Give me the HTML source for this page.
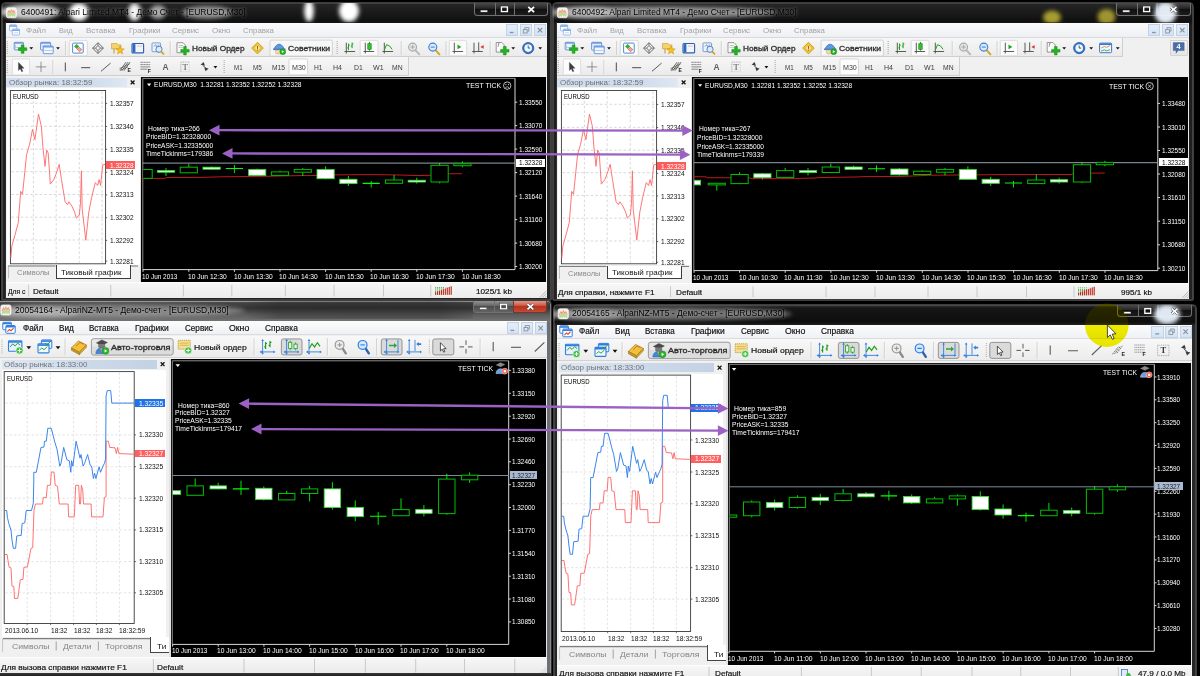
<!DOCTYPE html>
<html lang="ru"><head><meta charset="utf-8"><title>MetaTrader tick test</title>
<style>
html,body{margin:0;padding:0;background:#000;}
body{width:1200px;height:676px;overflow:hidden;position:relative;font-family:"Liberation Sans",sans-serif;}
#l1,#l3{position:absolute;left:0;top:0;width:1200px;height:676px;overflow:hidden;}
#l1 div,#l3 div{position:absolute;box-sizing:border-box;}
svg.ov{position:absolute;left:0;top:0;width:1200px;height:676px;overflow:hidden;}
.t{position:absolute;white-space:nowrap;line-height:normal;transform-origin:left center;letter-spacing:0;}
</style></head>
<body>
<div id="l1">
<div style="left:552.80px;top:303.50px;width:644.60px;height:386.50px;background:linear-gradient(#3a3a3a,#161616 3px,#0d0d0d 17px,#2a2a2a 21px,#262626);border:1px solid #3e3e3e;border-radius:4.5px 4.5px 0 0;box-shadow:inset 0 0 0 0.6px #5a5a5a;"></div>
<div style="left:1117.20px;top:304.90px;width:21.80px;height:12.60px;background:linear-gradient(#4a4a4a,#262626 45%,#101010 50%,#1c1c1c);border:1px solid #707070;border-radius:0 0 0 3.5px;border-top:none;"></div>
<div style="left:1138.40px;top:304.90px;width:19.80px;height:12.60px;background:linear-gradient(#4a4a4a,#262626 45%,#101010 50%,#1c1c1c);border:1px solid #707070;border-top:none;"></div>
<div style="left:1157.60px;top:304.90px;width:34.00px;height:12.60px;background:linear-gradient(#4a4a4a,#262626 45%,#101010 50%,#1c1c1c);border:1px solid #707070;border-radius:0 0 3.5px 0;border-top:none;"></div>
<div style="left:557.00px;top:324.50px;width:635.20px;height:365.50px;background:#f0f0f0;"></div>
<div style="left:557.00px;top:324.50px;width:635.20px;height:14.40px;background:linear-gradient(#fcfcfd,#eff1f4);border-bottom:1px solid #d9dbde;"></div>
<div style="left:1179.50px;top:325.60px;width:12.20px;height:12.00px;background:linear-gradient(#e4eefa,#d3e3f5);border:1px solid #c3d3e6;"></div>
<div style="left:1165.45px;top:325.60px;width:12.20px;height:12.00px;background:linear-gradient(#e4eefa,#d3e3f5);border:1px solid #c3d3e6;"></div>
<div style="left:1151.40px;top:325.60px;width:12.20px;height:12.00px;background:linear-gradient(#e4eefa,#d3e3f5);border:1px solid #c3d3e6;"></div>
<div style="left:557.00px;top:339.10px;width:635.20px;height:22.30px;background:linear-gradient(#f8f8f8,#ececec);border-bottom:1px solid #d2d2d2;"></div>
<div style="left:557.00px;top:362.10px;width:169.20px;height:327.90px;background:#f0f0f0;"></div>
<div style="left:559.20px;top:363.00px;width:154.80px;height:9.40px;background:linear-gradient(90deg,#dfe7f1,#cbd8e8 60%,#c3d2e4);"></div>
<div style="left:558.60px;top:373.50px;width:164.40px;height:271.50px;background:#fff;"></div>
<div style="left:557.00px;top:645.10px;width:169.20px;height:44.90px;background:#f0f0f0;"></div>
<div style="left:707.20px;top:644.90px;width:21.00px;height:16.40px;background:#fff;border-left:1px solid #444;border-bottom:1px solid #444;"></div>
<div style="left:726.20px;top:362.50px;width:1.60px;height:302.10px;background:#e2e2e2;"></div>
<div style="left:727.80px;top:362.70px;width:463.40px;height:301.90px;background:#000;"></div>
<div style="left:1191.20px;top:362.70px;width:1.00px;height:301.90px;background:#e6e6e6;"></div>
<div style="left:557.00px;top:664.60px;width:635.20px;height:25.40px;background:linear-gradient(#f7f7f7,#ebebeb 14px);border-top:1px solid #fdfdfd;"></div>
<div style="left:-6.00px;top:299.50px;width:557.70px;height:390.50px;background:linear-gradient(#a8a8a8 0,#444 1.6px,#343434 7px,#5e5e5e 14px,#767676 21px,#6c6f74 22px);border:1px solid #2c2c2c;border-radius:4.5px 4.5px 0 0;box-shadow:inset 0 0 0 0.7px #9a9a9a;"></div>
<div style="left:473.00px;top:300.40px;width:21.80px;height:12.80px;background:linear-gradient(#9a9a9a,#6c6c6c 45%,#4c4c4c 50%,#626262);border:1px solid #707070;border-radius:0 0 0 3.5px;border-top:none;"></div>
<div style="left:494.20px;top:300.40px;width:19.80px;height:12.80px;background:linear-gradient(#9a9a9a,#6c6c6c 45%,#4c4c4c 50%,#626262);border:1px solid #707070;border-top:none;"></div>
<div style="left:513.40px;top:300.40px;width:34.00px;height:12.80px;background:linear-gradient(#e3a396,#cf5e49 45%,#b8301a 50%,#c24a33);border:1px solid #6e3a33;border-radius:0 0 3.5px 0;border-top:none;"></div>
<div style="left:0.00px;top:321.00px;width:547.30px;height:369.00px;background:#f0f0f0;"></div>
<div style="left:0.00px;top:321.00px;width:547.30px;height:14.40px;background:linear-gradient(#fcfcfd,#eff1f4);border-bottom:1px solid #d9dbde;"></div>
<div style="left:534.60px;top:322.10px;width:12.20px;height:12.00px;background:linear-gradient(#e4eefa,#d3e3f5);border:1px solid #c3d3e6;"></div>
<div style="left:520.55px;top:322.10px;width:12.20px;height:12.00px;background:linear-gradient(#e4eefa,#d3e3f5);border:1px solid #c3d3e6;"></div>
<div style="left:506.50px;top:322.10px;width:12.20px;height:12.00px;background:linear-gradient(#e4eefa,#d3e3f5);border:1px solid #c3d3e6;"></div>
<div style="left:0.00px;top:335.60px;width:547.30px;height:22.30px;background:linear-gradient(#f8f8f8,#ececec);border-bottom:1px solid #d2d2d2;"></div>
<div style="left:0.00px;top:358.60px;width:169.20px;height:331.40px;background:#f0f0f0;"></div>
<div style="left:2.20px;top:359.50px;width:154.80px;height:9.40px;background:linear-gradient(90deg,#dfe7f1,#cbd8e8 60%,#c3d2e4);"></div>
<div style="left:1.60px;top:370.00px;width:164.40px;height:267.00px;background:#fff;"></div>
<div style="left:0.00px;top:637.10px;width:169.20px;height:52.90px;background:#f0f0f0;"></div>
<div style="left:150.20px;top:636.90px;width:21.00px;height:16.40px;background:#fff;border-left:1px solid #444;border-bottom:1px solid #444;"></div>
<div style="left:169.20px;top:359.00px;width:1.60px;height:297.60px;background:#e2e2e2;"></div>
<div style="left:170.80px;top:359.20px;width:375.50px;height:297.40px;background:#000;"></div>
<div style="left:546.30px;top:359.20px;width:1.00px;height:297.40px;background:#e6e6e6;"></div>
<div style="left:0.00px;top:656.60px;width:547.30px;height:33.40px;background:linear-gradient(#f7f7f7,#ebebeb 14px);border-top:1px solid #fdfdfd;"></div>
<div style="left:-2.00px;top:673.30px;width:553.60px;height:6.70px;background:linear-gradient(#3a3a3a,#252525 2px);"></div>
<div style="left:0.50px;top:2.00px;width:551.00px;height:299.00px;background:linear-gradient(#262626,#101010 18px,#1d1d1d 22px,#232323);border:1px solid #3e3e3e;border-radius:4.5px 4.5px 2px 2px;box-shadow:inset 0 0 0 0.6px #5a5a5a;"></div>
<div style="left:473.80px;top:3.20px;width:21.80px;height:12.60px;background:linear-gradient(#4a4a4a,#262626 45%,#101010 50%,#1c1c1c);border:1px solid #707070;border-radius:0 0 0 3.5px;border-top:none;"></div>
<div style="left:495.00px;top:3.20px;width:19.80px;height:12.60px;background:linear-gradient(#4a4a4a,#262626 45%,#101010 50%,#1c1c1c);border:1px solid #707070;border-top:none;"></div>
<div style="left:514.20px;top:3.20px;width:34.00px;height:12.60px;background:linear-gradient(#4a4a4a,#262626 45%,#101010 50%,#1c1c1c);border:1px solid #707070;border-radius:0 0 3.5px 0;border-top:none;"></div>
<div style="left:5.00px;top:22.50px;width:541.70px;height:275.50px;background:#f0f0f0;"></div>
<div style="left:5.00px;top:22.50px;width:541.70px;height:15.10px;background:linear-gradient(#fbfbfc,#eef0f3);border-bottom:1px solid #d7d9dc;"></div>
<div style="left:533.90px;top:24.20px;width:12.20px;height:12.00px;background:linear-gradient(#e4eefa,#d3e3f5);border:1px solid #c3d3e6;"></div>
<div style="left:519.85px;top:24.20px;width:12.20px;height:12.00px;background:linear-gradient(#e4eefa,#d3e3f5);border:1px solid #c3d3e6;"></div>
<div style="left:505.80px;top:24.20px;width:12.20px;height:12.00px;background:linear-gradient(#e4eefa,#d3e3f5);border:1px solid #c3d3e6;"></div>
<div style="left:5.00px;top:38.20px;width:541.70px;height:18.40px;background:linear-gradient(#f7f7f7,#ebebeb);border-bottom:1px solid #cfcfcf;"></div>
<div style="left:5.00px;top:57.20px;width:403.50px;height:18.60px;background:linear-gradient(#f7f7f7,#ebebeb);border-bottom:1px solid #cfcfcf;border-right:1px solid #cfcfcf;"></div>
<div style="left:5.00px;top:76.60px;width:135.00px;height:206.40px;background:#f0f0f0;"></div>
<div style="left:6.20px;top:77.80px;width:120.60px;height:9.10px;background:linear-gradient(90deg,#d2deed,#cfdcec 70%,#dfe8f3);"></div>
<div style="left:7.20px;top:87.80px;width:132.80px;height:177.60px;background:#fff;"></div>
<div style="left:5.00px;top:265.80px;width:135.00px;height:16.60px;background:#f0f0f0;"></div>
<div style="left:55.50px;top:265.30px;width:75.00px;height:13.60px;background:#fff;border:1px solid #3c3c3c;border-top:none;"></div>
<div style="left:140.00px;top:76.60px;width:1.20px;height:205.20px;background:#dcdcdc;"></div>
<div style="left:141.20px;top:76.60px;width:404.70px;height:205.20px;background:#000;"></div>
<div style="left:545.90px;top:76.60px;width:0.80px;height:205.20px;background:#e9e9e9;"></div>
<div style="left:5.00px;top:281.80px;width:542.00px;height:16.20px;background:linear-gradient(#f6f6f6,#ececec);border-top:1px solid #fdfdfd;"></div>
<div style="left:4.80px;top:22.30px;width:1.20px;height:276.30px;background:linear-gradient(90deg,#1f1f1f,#3a3a3a);"></div>
<div style="left:551.50px;top:2.00px;width:642.30px;height:299.00px;background:linear-gradient(#262626,#101010 18px,#1d1d1d 22px,#232323);border:1px solid #3e3e3e;border-radius:4.5px 4.5px 2px 2px;box-shadow:inset 0 0 0 0.6px #5a5a5a;"></div>
<div style="left:1116.10px;top:3.20px;width:21.80px;height:12.60px;background:linear-gradient(#4a4a4a,#262626 45%,#101010 50%,#1c1c1c);border:1px solid #707070;border-radius:0 0 0 3.5px;border-top:none;"></div>
<div style="left:1137.30px;top:3.20px;width:19.80px;height:12.60px;background:linear-gradient(#4a4a4a,#262626 45%,#101010 50%,#1c1c1c);border:1px solid #707070;border-top:none;"></div>
<div style="left:1156.50px;top:3.20px;width:34.00px;height:12.60px;background:linear-gradient(#4a4a4a,#262626 45%,#101010 50%,#1c1c1c);border:1px solid #707070;border-radius:0 0 3.5px 0;border-top:none;"></div>
<div style="left:556.00px;top:22.50px;width:633.00px;height:276.06px;background:#f0f0f0;"></div>
<div style="left:556.00px;top:22.50px;width:633.00px;height:15.10px;background:linear-gradient(#fbfbfc,#eef0f3);border-bottom:1px solid #d7d9dc;"></div>
<div style="left:1176.20px;top:24.20px;width:12.20px;height:12.00px;background:linear-gradient(#e4eefa,#d3e3f5);border:1px solid #c3d3e6;"></div>
<div style="left:1162.15px;top:24.20px;width:12.20px;height:12.00px;background:linear-gradient(#e4eefa,#d3e3f5);border:1px solid #c3d3e6;"></div>
<div style="left:1148.10px;top:24.20px;width:12.20px;height:12.00px;background:linear-gradient(#e4eefa,#d3e3f5);border:1px solid #c3d3e6;"></div>
<div style="left:556.00px;top:38.20px;width:567.00px;height:18.40px;background:linear-gradient(#f7f7f7,#ebebeb);border-bottom:1px solid #cfcfcf;border-right:1px solid #cfcfcf;"></div>
<div style="left:556.00px;top:57.20px;width:403.50px;height:18.60px;background:linear-gradient(#f7f7f7,#ebebeb);border-bottom:1px solid #cfcfcf;border-right:1px solid #cfcfcf;"></div>
<div style="left:1169.70px;top:39.80px;width:18.50px;height:16.20px;background:linear-gradient(#f5f5f5,#e4e4e4);border:1px solid #d3d3d3;border-radius:1px;"></div>
<div style="left:556.00px;top:76.60px;width:135.00px;height:206.40px;background:#f0f0f0;"></div>
<div style="left:557.20px;top:77.80px;width:120.60px;height:9.10px;background:linear-gradient(90deg,#d2deed,#cfdcec 70%,#dfe8f3);"></div>
<div style="left:558.20px;top:87.80px;width:132.80px;height:177.60px;background:#fff;"></div>
<div style="left:556.00px;top:266.22px;width:135.00px;height:16.74px;background:#f0f0f0;"></div>
<div style="left:606.50px;top:265.72px;width:75.00px;height:13.74px;background:#fff;border:1px solid #3c3c3c;border-top:none;"></div>
<div style="left:691.00px;top:76.60px;width:1.20px;height:206.81px;background:#dcdcdc;"></div>
<div style="left:692.20px;top:76.60px;width:496.00px;height:206.81px;background:#000;"></div>
<div style="left:1188.20px;top:76.60px;width:0.80px;height:206.81px;background:#e9e9e9;"></div>
<div style="left:556.00px;top:283.41px;width:633.00px;height:15.15px;background:linear-gradient(#f6f6f6,#ececec);border-top:1px solid #fdfdfd;"></div>
<div style="left:555.60px;top:22.30px;width:1.10px;height:276.70px;background:linear-gradient(90deg,#1f1f1f,#444);"></div>
</div>
<svg class="ov" id="l2" viewBox="0 0 1200 676" width="1200" height="676">
<defs><filter id="blur3" x="-50%" y="-50%" width="200%" height="200%"><feGaussianBlur stdDeviation="2.2"/></filter><filter id="blur1" x="-50%" y="-50%" width="200%" height="200%"><feGaussianBlur stdDeviation="0.9"/></filter></defs>
<defs><linearGradient id="t3g" x1="0" x2="1" y1="0" y2="0"><stop offset="0" stop-color="#1a1a1a" stop-opacity="0"/><stop offset="0.15" stop-color="#1a1a1a" stop-opacity="0.3"/><stop offset="0.85" stop-color="#1a1a1a" stop-opacity="0.32"/><stop offset="1" stop-color="#1a1a1a" stop-opacity="0.1"/></linearGradient></defs>
<g clip-path="url(#tt4)"><defs><clipPath id="tt4"><rect x="553.5" y="304.5" width="642.7" height="19.8" rx="3"/></clipPath></defs>
<ellipse cx="662.0" cy="314.0" rx="130" ry="6.5" fill="#b0b0b0" opacity="0.6" filter="url(#blur3)"/>
<ellipse cx="587.0" cy="314.5" rx="36" ry="6" fill="#e6e6e6" opacity="0.35" filter="url(#blur3)"/>
<ellipse cx="1167" cy="314.5" rx="13" ry="10" fill="#eaf3ff" opacity="0.95" filter="url(#blur3)"/>
</g>
<rect x="1123.90" y="311.80" width="7.00" height="2.00" fill="#fff" stroke="#3a3a3a" stroke-width="0.4" />
<rect x="1144.80" y="308.60" width="6.00" height="4.70" fill="none" stroke="#fff" stroke-width="1.4" />
<rect x="1143.90" y="307.70" width="7.80" height="6.50" fill="none" stroke="#333" stroke-width="0.35" />
<path d="M1171.7 308.6 L1177.5 313.8 M1177.5 308.6 L1171.7 313.8" fill="none" stroke="#3a3a3a" stroke-width="2.7" />
<path d="M1171.7 308.6 L1177.5 313.8 M1177.5 308.6 L1171.7 313.8" fill="none" stroke="#fff" stroke-width="1.7" />
<rect x="558.2" y="308.7" width="10.2" height="10.2" rx="1.8" fill="#f3efe9" stroke="#fff" stroke-width="0.6"/>
<polyline points="559.6,314.8 560.9,312.4 562.1,313.8 563.3,311.5 564.5,313.6 565.7,312.2 567.0,314.6" fill="none" stroke="#f08f86" stroke-width="1.5" />
<polyline points="559.6,316.3 560.9,313.9 562.1,315.3 563.3,313.0 564.5,315.1 565.7,313.7 567.0,316.1" fill="none" stroke="#efcf8c" stroke-width="1.5" />
<polyline points="559.6,317.8 560.9,315.3 562.1,316.8 563.3,314.4 564.5,316.6 565.7,315.1 567.0,317.6" fill="none" stroke="#b4dc9c" stroke-width="1.5" />
<rect x="559.80" y="325.80" width="8.60" height="7.40" fill="#fff" stroke="#2f7fe0" stroke-width="1.0" rx="0.8"/>
<line x1="559.80" y1="327.00" x2="568.40" y2="327.00" stroke="#2f7fe0" stroke-width="1.6" />
<rect x="562.80" y="329.00" width="9.40" height="7.80" fill="#fff" stroke="#2f7fe0" stroke-width="1.0" rx="0.8"/>
<line x1="562.80" y1="330.20" x2="572.20" y2="330.20" stroke="#2f7fe0" stroke-width="1.6" />
<path d="M564.4 335.2 l2 -2.2 l1.6 1.2 l2.6 -2.6" fill="none" stroke="#e0442e" stroke-width="1.1" />
<path d="M1183.4 329.4 L1187.8 333.8 M1187.8 329.4 L1183.4 333.8" fill="none" stroke="#8a939e" stroke-width="1.2" />
<rect x="1168.95" y="331.00" width="3.80" height="3.40" fill="none" stroke="#8a939e" stroke-width="0.9" />
<path d="M1170.3 330.8 V329.0 H1174.3 V332.6 H1173.0" fill="none" stroke="#8a939e" stroke-width="0.9" />
<line x1="1155.30" y1="333.90" x2="1159.10" y2="333.90" stroke="#8a939e" stroke-width="1.3" />
<g clip-path="url(#tc4)"><defs><clipPath id="tc4"><rect x="557.0" y="338.5" width="634.9" height="24"/></clipPath></defs>
<line x1="559.00" y1="342.90" x2="559.00" y2="357.90" stroke="#b8b8b8" stroke-width="1.2" stroke-dasharray="1 1.2"/>
<rect x="565.50" y="344.20" width="13.40" height="10.60" fill="#e8f1fc" stroke="#2f7fe0" stroke-width="1.1" rx="0.8"/>
<line x1="565.50" y1="345.40" x2="578.90" y2="345.40" stroke="#2f7fe0" stroke-width="1.6" />
<path d="M567.1 350.4 l2.6 -3 l2.4 2 l2.6 -2.8 l2.4 2" fill="none" stroke="#2f9f3f" stroke-width="1.0" />
<circle cx="576.50" cy="354.00" r="3.60" fill="#3fbf3f" stroke="#dff5df" stroke-width="0.7" />
<path d="M574.5 354.0 h4 M576.5 352.0 v4" fill="none" stroke="#fff" stroke-width="1.0" />
<path d="M583.4 349.8 H588.2 L585.8 352.7 Z" fill="#111" stroke="none" stroke-width="1" />
<rect x="598.40" y="343.40" width="10.40" height="8.40" fill="#e8f1fc" stroke="#2f7fe0" stroke-width="1.0" rx="0.8"/>
<line x1="598.40" y1="344.60" x2="608.80" y2="344.60" stroke="#2f7fe0" stroke-width="1.6" />
<rect x="595.00" y="347.40" width="11.00" height="9.00" fill="#f3f8fe" stroke="#2f7fe0" stroke-width="1.1" rx="0.8"/>
<line x1="595.00" y1="348.60" x2="606.00" y2="348.60" stroke="#2f7fe0" stroke-width="1.6" />
<path d="M596.4 353.6 l2.4 -2 l2.2 1.6 l3.4 -3.2" fill="none" stroke="#2f9f3f" stroke-width="1.0" />
<path d="M602.0 347.0 l2 1.6 l3.2 -3.4" fill="none" stroke="#2f9f3f" stroke-width="1.0" />
<path d="M612.6 349.8 H617.4 L615.0 352.7 Z" fill="#111" stroke="none" stroke-width="1" />
<line x1="622.20" y1="341.90" x2="622.20" y2="358.90" stroke="#c2c2c2" stroke-width="0.9" />
<line x1="623.00" y1="341.90" x2="623.00" y2="358.90" stroke="#fcfcfc" stroke-width="0.7" />
<path d="M628.4 351.4 l7 -7 l8 4 l-7 7.4 Z" fill="#f0c23a" stroke="#a87d14" stroke-width="0.7" />
<path d="M628.4 351.4 l8 4.4 v2.4 l-8 -4.4 Z" fill="#c9962a" stroke="#8e6810" stroke-width="0.5" />
<path d="M636.4 355.8 l7 -7.4 v2.4 l-7 7.4 Z" fill="#dba92e" stroke="#8e6810" stroke-width="0.5" />
<path d="M633.0 349.6 l4 -3.6 l3.6 1.8" fill="none" stroke="#d24a2a" stroke-width="0.7" />
<rect x="648.40" y="342.20" width="81.80" height="16.40" fill="#dcdcdc" stroke="#8a8a8a" stroke-width="0.8" rx="2.2"/>
<rect x="649.20" y="343.00" width="80.20" height="6.90" fill="#e8e8e8" stroke="none" stroke-width="1" rx="1.8"/>
<path d="M653.4 346.4 l5.4 -3 l5.6 2.6 l-5.4 2.8 Z" fill="#4a4a4a" stroke="#2a2a2a" stroke-width="0.4" />
<path d="M655.6 347.6 v3 q3 1.8 6.2 0 v-3" fill="#7a7a7a" stroke="#444" stroke-width="0.4" />
<path d="M652.8 357.0 q0.4 -5.6 5.6 -5.6 q5 0 5.6 5.6 Z" fill="#3f86dc" stroke="#1f5cae" stroke-width="0.5" />
<path d="M657.4 351.4 l1 4.4 l1 -4.4 Z" fill="#d9a428" stroke="none" stroke-width="1" />
<circle cx="662.60" cy="354.40" r="3.30" fill="#2fb52f" stroke="#148614" stroke-width="0.5" />
<path d="M661.6 352.8 l2.6 1.6 l-2.6 1.6 Z" fill="#fff" stroke="none" stroke-width="1" />
<rect x="735.20" y="343.80" width="12.00" height="8.80" fill="#f6df8e" stroke="#b6902a" stroke-width="0.8" stroke-dasharray="1.2 0.7"/>
<line x1="736.80" y1="346.60" x2="745.60" y2="346.60" stroke="#c9a544" stroke-width="0.7" />
<line x1="736.80" y1="348.80" x2="745.60" y2="348.80" stroke="#c9a544" stroke-width="0.7" />
<circle cx="745.20" cy="354.00" r="3.60" fill="#3fbf3f" stroke="#e6f7e6" stroke-width="0.7" />
<path d="M743.2 354.0 h4 M745.2 352.0 v4" fill="none" stroke="#fff" stroke-width="1.0" />
<line x1="811.20" y1="341.90" x2="811.20" y2="358.90" stroke="#c2c2c2" stroke-width="0.9" />
<line x1="812.00" y1="341.90" x2="812.00" y2="358.90" stroke="#fcfcfc" stroke-width="0.7" />
<line x1="819.60" y1="343.40" x2="819.60" y2="357.20" stroke="#2f7fe0" stroke-width="0.9" />
<line x1="817.60" y1="355.40" x2="831.40" y2="355.40" stroke="#2f7fe0" stroke-width="0.9" />
<path d="M819.6 342.4 l-1.3 2 h2.6 Z M819.6 358.2 l-1.3 -2 h2.6 Z M816.6 355.4 l2 -1.3 v2.6 Z M832.4 355.4 l-2 -1.3 v2.6 Z" fill="#2f7fe0" stroke="none" stroke-width="1" />
<path d="M822.6 345.4 v7 M821.2 350.4 h1.4 M822.6 347.0 h1.4 M827.0 344.4 v6.4 M825.6 348.8 h1.4 M827.0 345.8 h1.4" fill="none" stroke="#1f9f1f" stroke-width="1.2" />
<rect x="838.40" y="342.40" width="20.60" height="16.00" fill="#dadada" stroke="#7f7f7f" stroke-width="0.8" rx="2"/>
<line x1="843.60" y1="343.40" x2="843.60" y2="357.20" stroke="#2f7fe0" stroke-width="0.9" />
<line x1="841.60" y1="355.40" x2="855.40" y2="355.40" stroke="#2f7fe0" stroke-width="0.9" />
<path d="M843.6 342.4 l-1.3 2 h2.6 Z M843.6 358.2 l-1.3 -2 h2.6 Z M840.6 355.4 l2 -1.3 v2.6 Z M856.4 355.4 l-2 -1.3 v2.6 Z" fill="#2f7fe0" stroke="none" stroke-width="1" />
<line x1="847.20" y1="344.00" x2="847.20" y2="353.80" stroke="#1f9f1f" stroke-width="0.8" />
<rect x="845.60" y="345.80" width="3.20" height="6.20" fill="#e9f7e9" stroke="#1f9f1f" stroke-width="0.8" />
<line x1="852.60" y1="345.80" x2="852.60" y2="353.80" stroke="#1f9f1f" stroke-width="0.8" />
<rect x="851.00" y="347.60" width="3.20" height="4.60" fill="#e9f7e9" stroke="#1f9f1f" stroke-width="0.8" />
<line x1="866.00" y1="343.40" x2="866.00" y2="357.20" stroke="#2f7fe0" stroke-width="0.9" />
<line x1="864.00" y1="355.40" x2="877.80" y2="355.40" stroke="#2f7fe0" stroke-width="0.9" />
<path d="M866.0 342.4 l-1.3 2 h2.6 Z M866.0 358.2 l-1.3 -2 h2.6 Z M863.0 355.4 l2 -1.3 v2.6 Z M878.8 355.4 l-2 -1.3 v2.6 Z" fill="#2f7fe0" stroke="none" stroke-width="1" />
<path d="M866.2 352.0 l2.8 -4.8 l2.6 3.2 l2.8 -4.2 l2.6 3.6" fill="none" stroke="#1f9f1f" stroke-width="1.2" />
<line x1="884.40" y1="341.90" x2="884.40" y2="358.90" stroke="#c2c2c2" stroke-width="0.9" />
<line x1="885.20" y1="341.90" x2="885.20" y2="358.90" stroke="#fcfcfc" stroke-width="0.7" />
<line x1="899.40" y1="351.60" x2="902.80" y2="356.80" stroke="#8a8a8a" stroke-width="2.4" stroke-linecap="round"/>
<circle cx="896.60" cy="348.40" r="4.40" fill="#ececec" stroke="#9a9a9a" stroke-width="1.2" />
<line x1="894.40" y1="348.40" x2="898.80" y2="348.40" stroke="#9a9a9a" stroke-width="1.1" />
<line x1="896.60" y1="346.20" x2="896.60" y2="350.60" stroke="#9a9a9a" stroke-width="1.1" />
<line x1="922.40" y1="351.60" x2="925.80" y2="356.80" stroke="#2a62b4" stroke-width="2.4" stroke-linecap="round"/>
<circle cx="919.60" cy="348.40" r="4.40" fill="#d6e8fc" stroke="#2f7fe0" stroke-width="1.2" />
<line x1="917.40" y1="348.40" x2="921.80" y2="348.40" stroke="#2f7fe0" stroke-width="1.1" />
<line x1="933.80" y1="341.90" x2="933.80" y2="358.90" stroke="#c2c2c2" stroke-width="0.9" />
<line x1="934.60" y1="341.90" x2="934.60" y2="358.90" stroke="#fcfcfc" stroke-width="0.7" />
<rect x="938.30" y="342.40" width="20.70" height="16.00" fill="#dadada" stroke="#7f7f7f" stroke-width="0.8" rx="2"/>
<line x1="943.60" y1="343.40" x2="943.60" y2="357.20" stroke="#2f7fe0" stroke-width="0.9" />
<line x1="941.60" y1="355.40" x2="955.40" y2="355.40" stroke="#2f7fe0" stroke-width="0.9" />
<path d="M943.6 342.4 l-1.3 2 h2.6 Z M943.6 358.2 l-1.3 -2 h2.6 Z M940.6 355.4 l2 -1.3 v2.6 Z M956.4 355.4 l-2 -1.3 v2.6 Z" fill="#2f7fe0" stroke="none" stroke-width="1" />
<line x1="955.00" y1="343.40" x2="955.00" y2="354.60" stroke="#2f7fe0" stroke-width="0.9" />
<path d="M946.0 348.2 h5 v-1.8 l3 2.6 l-3 2.6 v-1.8 h-5 Z" fill="#2fa52f" stroke="none" stroke-width="1" />
<line x1="966.20" y1="343.40" x2="966.20" y2="357.20" stroke="#2f7fe0" stroke-width="0.9" />
<line x1="964.20" y1="355.40" x2="978.00" y2="355.40" stroke="#2f7fe0" stroke-width="0.9" />
<path d="M966.2 342.4 l-1.3 2 h2.6 Z M966.2 358.2 l-1.3 -2 h2.6 Z M963.2 355.4 l2 -1.3 v2.6 Z M979.0 355.4 l-2 -1.3 v2.6 Z" fill="#2f7fe0" stroke="none" stroke-width="1" />
<line x1="972.00" y1="343.40" x2="972.00" y2="354.60" stroke="#2f7fe0" stroke-width="0.9" />
<path d="M978.2 346.8 h-2.4 v-1.4 l-2.6 2.2 l2.6 2.2 v-1.4 h2.4 Z" fill="#2f7fe0" stroke="none" stroke-width="1" />
<line x1="986.40" y1="342.90" x2="986.40" y2="357.90" stroke="#b8b8b8" stroke-width="1.2" stroke-dasharray="1 1.2"/>
<rect x="989.80" y="342.40" width="21.00" height="16.00" fill="#dadada" stroke="#7f7f7f" stroke-width="0.8" rx="2"/>
<path d="M997.40 346.20 L997.40 354.46 L999.29 352.74 L1000.67 355.66 L1001.87 355.14 L1000.58 352.22 L1003.08 352.05 Z" fill="#fff" stroke="#111" stroke-width="0.7" stroke-linejoin="round"/>
<path d="M1016.4 350.4 h4.6 M1025.0 350.4 h4.6 M1023.0 343.8 v4.6 M1023.0 352.4 v4.6" fill="none" stroke="#5a5a5a" stroke-width="1.0" />
<line x1="1037.20" y1="341.90" x2="1037.20" y2="358.90" stroke="#c2c2c2" stroke-width="0.9" />
<line x1="1038.00" y1="341.90" x2="1038.00" y2="358.90" stroke="#fcfcfc" stroke-width="0.7" />
<line x1="1050.20" y1="345.40" x2="1050.20" y2="354.80" stroke="#5a5a5a" stroke-width="1.1" />
<line x1="1068.00" y1="350.80" x2="1078.00" y2="350.80" stroke="#5a5a5a" stroke-width="1.1" />
<line x1="1091.80" y1="355.00" x2="1101.40" y2="345.80" stroke="#5a5a5a" stroke-width="1.1" />
<line x1="1112.40" y1="354.40" x2="1118.40" y2="346.60" stroke="#5a5a5a" stroke-width="0.9" stroke-dasharray="1.6 0.8"/>
<line x1="1114.60" y1="353.80" x2="1120.60" y2="346.00" stroke="#5a5a5a" stroke-width="0.9" stroke-dasharray="1.6 0.8"/>
<line x1="1116.80" y1="353.20" x2="1122.80" y2="345.40" stroke="#5a5a5a" stroke-width="0.9" stroke-dasharray="1.6 0.8"/>
<line x1="1134.40" y1="345.00" x2="1145.00" y2="345.00" stroke="#7a7a7a" stroke-width="0.8" stroke-dasharray="1.2 0.6"/>
<line x1="1134.40" y1="347.40" x2="1145.00" y2="347.40" stroke="#7a7a7a" stroke-width="0.8" stroke-dasharray="1.2 0.6"/>
<line x1="1134.40" y1="349.80" x2="1145.00" y2="349.80" stroke="#7a7a7a" stroke-width="0.8" stroke-dasharray="1.2 0.6"/>
<line x1="1134.40" y1="352.20" x2="1145.00" y2="352.20" stroke="#7a7a7a" stroke-width="0.8" stroke-dasharray="1.2 0.6"/>
<rect x="1157.60" y="345.20" width="11.40" height="10.40" fill="none" stroke="#8a8a8a" stroke-width="0.7" stroke-dasharray="1 0.8"/>
<path d="M1181.0 347.8 l3.4 -3 l1.6 4.2 Z" fill="#3a3a3a" stroke="none" stroke-width="1" />
<path d="M1190.4 352.4 l-3.4 3.2 l-1.6 -4.4 Z" fill="#3a3a3a" stroke="none" stroke-width="1" />
<line x1="1183.80" y1="349.00" x2="1187.60" y2="352.00" stroke="#3a3a3a" stroke-width="0.9" />
</g>
<path d="M717.7 365.8 L721.5 369.6 M721.5 365.8 L717.7 369.6" fill="none" stroke="#111" stroke-width="1.25" />
<line x1="562.20" y1="407.80" x2="689.60" y2="407.80" stroke="#dcdcdc" stroke-width="0.8" stroke-dasharray="2.4 2.0"/>
<line x1="562.20" y1="439.96" x2="689.60" y2="439.96" stroke="#dcdcdc" stroke-width="0.8" stroke-dasharray="2.4 2.0"/>
<line x1="562.20" y1="472.01" x2="689.60" y2="472.01" stroke="#dcdcdc" stroke-width="0.8" stroke-dasharray="2.4 2.0"/>
<line x1="562.20" y1="503.76" x2="689.60" y2="503.76" stroke="#dcdcdc" stroke-width="0.8" stroke-dasharray="2.4 2.0"/>
<line x1="562.20" y1="535.72" x2="689.60" y2="535.72" stroke="#dcdcdc" stroke-width="0.8" stroke-dasharray="2.4 2.0"/>
<line x1="562.20" y1="567.67" x2="689.60" y2="567.67" stroke="#dcdcdc" stroke-width="0.8" stroke-dasharray="2.4 2.0"/>
<line x1="562.20" y1="599.12" x2="689.60" y2="599.12" stroke="#dcdcdc" stroke-width="0.8" stroke-dasharray="2.4 2.0"/>
<line x1="584.20" y1="376.10" x2="584.20" y2="630.50" stroke="#dcdcdc" stroke-width="0.8" stroke-dasharray="2.4 2.0"/>
<line x1="584.20" y1="631.50" x2="584.20" y2="633.10" stroke="#555" stroke-width="0.8" />
<line x1="607.60" y1="376.10" x2="607.60" y2="630.50" stroke="#dcdcdc" stroke-width="0.8" stroke-dasharray="2.4 2.0"/>
<line x1="607.60" y1="631.50" x2="607.60" y2="633.10" stroke="#555" stroke-width="0.8" />
<line x1="630.60" y1="376.10" x2="630.60" y2="630.50" stroke="#dcdcdc" stroke-width="0.8" stroke-dasharray="2.4 2.0"/>
<line x1="630.60" y1="631.50" x2="630.60" y2="633.10" stroke="#555" stroke-width="0.8" />
<line x1="653.40" y1="376.10" x2="653.40" y2="630.50" stroke="#dcdcdc" stroke-width="0.8" stroke-dasharray="2.4 2.0"/>
<line x1="653.40" y1="631.50" x2="653.40" y2="633.10" stroke="#555" stroke-width="0.8" />
<line x1="676.40" y1="376.10" x2="676.40" y2="630.50" stroke="#dcdcdc" stroke-width="0.8" stroke-dasharray="2.4 2.0"/>
<line x1="676.40" y1="631.50" x2="676.40" y2="633.10" stroke="#555" stroke-width="0.8" />
<rect x="561.20" y="375.10" width="129.40" height="256.40" fill="none" stroke="#3a3a3a" stroke-width="0.9" />
<polyline points="561.9,560.5 564.0,560.5 564.9,566.8 566.2,573.4 567.9,573.9 569.0,592.4 570.7,592.7 571.4,604.9 574.6,604.9 575.5,599.0 577.3,585.9 579.9,585.6 580.8,573.4 584.3,573.1 587.8,554.3 589.6,553.7 590.8,515.8 592.2,509.6 599.3,509.6 600.1,502.9 603.1,502.9 604.2,490.8 607.2,490.8 608.1,477.4 610.7,477.4 611.9,490.8 614.2,491.7 616.0,509.6 624.8,509.6 625.3,522.6 631.0,522.6 632.4,490.8 635.4,490.8 636.3,509.6 637.1,509.6 638.0,490.8 639.4,496.1 640.1,509.6 647.7,509.6 648.2,522.6 659.5,522.6 660.9,502.9 662.5,502.4 662.7,501.8 662.7,446.3 664.8,446.3 666.2,452.6 671.5,452.9 672.9,458.8 674.1,452.6 675.3,458.8 690.8,459.4" fill="none" stroke="#ff6a6a" stroke-width="0.95" stroke-linejoin="miter"/>
<polyline points="561.9,516.2 563.7,516.2 564.4,523.0 565.8,529.2 567.9,535.9 569.0,546.2 570.2,554.3 572.5,554.3 573.7,541.8 578.1,541.2 579.0,529.2 581.7,528.7 583.1,516.2 588.3,516.2 590.1,508.7 590.6,485.4 590.6,477.6 593.1,477.6 597.9,452.6 600.7,452.2 601.4,446.3 603.1,446.3 604.6,433.3 608.1,433.3 611.6,447.2 613.7,454.4 616.5,471.4 617.8,468.7 620.4,452.6 623.6,465.1 626.0,466.0 627.4,477.6 628.3,466.0 629.6,471.4 632.7,446.3 636.6,463.3 637.7,459.7 639.8,471.4 641.2,468.7 644.2,459.7 646.8,470.5 648.2,471.4 650.0,483.9 651.2,478.5 652.5,483.9 655.6,472.3 657.0,477.6 659.5,471.4 660.9,468.7 662.1,464.2 662.7,400.7 663.7,395.3 667.2,395.3 668.3,407.9 690.8,407.9" fill="none" stroke="#2f7fea" stroke-width="0.95" stroke-linejoin="miter"/>
<line x1="690.60" y1="439.96" x2="692.40" y2="439.96" stroke="#444" stroke-width="0.8" />
<line x1="690.60" y1="472.01" x2="692.40" y2="472.01" stroke="#444" stroke-width="0.8" />
<line x1="690.60" y1="503.76" x2="692.40" y2="503.76" stroke="#444" stroke-width="0.8" />
<line x1="690.60" y1="535.72" x2="692.40" y2="535.72" stroke="#444" stroke-width="0.8" />
<line x1="690.60" y1="567.67" x2="692.40" y2="567.67" stroke="#444" stroke-width="0.8" />
<line x1="690.60" y1="599.12" x2="692.40" y2="599.12" stroke="#444" stroke-width="0.8" />
<line x1="560.00" y1="646.70" x2="707.60" y2="646.70" stroke="#555" stroke-width="0.9" />
<line x1="613.20" y1="649.50" x2="613.20" y2="658.50" stroke="#8f8f8f" stroke-width="0.8" />
<line x1="655.40" y1="649.50" x2="655.40" y2="658.50" stroke="#8f8f8f" stroke-width="0.8" />
<line x1="559.60" y1="646.70" x2="559.60" y2="659.70" stroke="#b0b0b0" stroke-width="0.7" />
<line x1="729.30" y1="364.30" x2="1154.30" y2="364.30" stroke="#8c8c8c" stroke-width="1" />
<line x1="729.30" y1="364.30" x2="729.30" y2="651.30" stroke="#8c8c8c" stroke-width="1" />
<line x1="1154.30" y1="364.30" x2="1154.30" y2="651.30" stroke="#d8d8d8" stroke-width="1" />
<line x1="729.30" y1="651.30" x2="1154.30" y2="651.30" stroke="#d8d8d8" stroke-width="1" />
<line x1="1154.30" y1="377.00" x2="1156.50" y2="377.00" stroke="#d8d8d8" stroke-width="1" />
<line x1="1154.30" y1="399.80" x2="1156.50" y2="399.80" stroke="#d8d8d8" stroke-width="1" />
<line x1="1154.30" y1="422.70" x2="1156.50" y2="422.70" stroke="#d8d8d8" stroke-width="1" />
<line x1="1154.30" y1="445.50" x2="1156.50" y2="445.50" stroke="#d8d8d8" stroke-width="1" />
<line x1="1154.30" y1="468.40" x2="1156.50" y2="468.40" stroke="#d8d8d8" stroke-width="1" />
<line x1="1154.30" y1="491.30" x2="1156.50" y2="491.30" stroke="#d8d8d8" stroke-width="1" />
<line x1="1154.30" y1="514.20" x2="1156.50" y2="514.20" stroke="#d8d8d8" stroke-width="1" />
<line x1="1154.30" y1="537.00" x2="1156.50" y2="537.00" stroke="#d8d8d8" stroke-width="1" />
<line x1="1154.30" y1="559.90" x2="1156.50" y2="559.90" stroke="#d8d8d8" stroke-width="1" />
<line x1="1154.30" y1="582.80" x2="1156.50" y2="582.80" stroke="#d8d8d8" stroke-width="1" />
<line x1="1154.30" y1="605.60" x2="1156.50" y2="605.60" stroke="#d8d8d8" stroke-width="1" />
<line x1="1154.30" y1="628.50" x2="1156.50" y2="628.50" stroke="#d8d8d8" stroke-width="1" />
<line x1="729.30" y1="486.80" x2="1154.30" y2="486.80" stroke="#7f8a99" stroke-width="1" />
<line x1="729.00" y1="651.30" x2="729.00" y2="653.50" stroke="#d8d8d8" stroke-width="1" />
<line x1="774.60" y1="651.30" x2="774.60" y2="653.50" stroke="#d8d8d8" stroke-width="1" />
<line x1="820.30" y1="651.30" x2="820.30" y2="653.50" stroke="#d8d8d8" stroke-width="1" />
<line x1="866.00" y1="651.30" x2="866.00" y2="653.50" stroke="#d8d8d8" stroke-width="1" />
<line x1="911.70" y1="651.30" x2="911.70" y2="653.50" stroke="#d8d8d8" stroke-width="1" />
<line x1="957.40" y1="651.30" x2="957.40" y2="653.50" stroke="#d8d8d8" stroke-width="1" />
<line x1="1003.10" y1="651.30" x2="1003.10" y2="653.50" stroke="#d8d8d8" stroke-width="1" />
<line x1="1048.90" y1="651.30" x2="1048.90" y2="653.50" stroke="#d8d8d8" stroke-width="1" />
<line x1="1094.60" y1="651.30" x2="1094.60" y2="653.50" stroke="#d8d8d8" stroke-width="1" />
<g clip-path="url(#c4)"><defs><clipPath id="c4"><rect x="729.8" y="364.3" width="424.0" height="286.99999999999994"/></clipPath></defs>
<line x1="728.60" y1="515.00" x2="728.60" y2="515.00" stroke="#00ff00" stroke-width="0.9" />
<line x1="728.60" y1="517.20" x2="728.60" y2="517.20" stroke="#00ff00" stroke-width="0.9" />
<rect x="720.40" y="515.00" width="16.40" height="2.20" fill="#000" stroke="#00c000" stroke-width="1" />
<line x1="751.70" y1="500.50" x2="751.70" y2="502.00" stroke="#00ff00" stroke-width="0.9" />
<line x1="751.70" y1="515.70" x2="751.70" y2="517.20" stroke="#00ff00" stroke-width="0.9" />
<rect x="743.50" y="502.00" width="16.40" height="13.70" fill="#000" stroke="#00c000" stroke-width="1" />
<line x1="774.60" y1="499.60" x2="774.60" y2="510.50" stroke="#00ff00" stroke-width="0.9" />
<rect x="766.40" y="502.60" width="16.40" height="4.90" fill="#fff" stroke="#35e035" stroke-width="0.9" />
<line x1="797.40" y1="495.30" x2="797.40" y2="497.40" stroke="#00ff00" stroke-width="0.9" />
<line x1="797.40" y1="507.50" x2="797.40" y2="508.70" stroke="#00ff00" stroke-width="0.9" />
<rect x="789.20" y="497.40" width="16.40" height="10.10" fill="#000" stroke="#00c000" stroke-width="1" />
<line x1="820.30" y1="493.80" x2="820.30" y2="505.00" stroke="#00ff00" stroke-width="0.9" />
<rect x="812.10" y="497.40" width="16.40" height="3.10" fill="#fff" stroke="#35e035" stroke-width="0.9" />
<line x1="843.10" y1="488.90" x2="843.10" y2="493.80" stroke="#00ff00" stroke-width="0.9" />
<line x1="843.10" y1="500.50" x2="843.10" y2="501.40" stroke="#00ff00" stroke-width="0.9" />
<rect x="834.90" y="493.80" width="16.40" height="6.70" fill="#000" stroke="#00c000" stroke-width="1" />
<line x1="866.00" y1="492.00" x2="866.00" y2="497.40" stroke="#00ff00" stroke-width="0.9" />
<rect x="857.80" y="493.80" width="16.40" height="3.00" fill="#fff" stroke="#35e035" stroke-width="0.9" />
<line x1="888.90" y1="490.70" x2="888.90" y2="500.50" stroke="#00ff00" stroke-width="0.9" />
<line x1="880.70" y1="495.90" x2="897.10" y2="495.90" stroke="#00ff00" stroke-width="1.1" />
<line x1="911.70" y1="494.40" x2="911.70" y2="503.80" stroke="#00ff00" stroke-width="0.9" />
<rect x="903.50" y="496.50" width="16.40" height="6.40" fill="#fff" stroke="#35e035" stroke-width="0.9" />
<line x1="934.60" y1="496.80" x2="934.60" y2="498.90" stroke="#00ff00" stroke-width="0.9" />
<line x1="934.60" y1="502.90" x2="934.60" y2="503.20" stroke="#00ff00" stroke-width="0.9" />
<rect x="926.40" y="498.90" width="16.40" height="4.00" fill="#000" stroke="#00c000" stroke-width="1" />
<line x1="957.40" y1="494.40" x2="957.40" y2="495.90" stroke="#00ff00" stroke-width="0.9" />
<line x1="957.40" y1="498.90" x2="957.40" y2="505.60" stroke="#00ff00" stroke-width="0.9" />
<rect x="949.20" y="495.90" width="16.40" height="3.00" fill="#000" stroke="#00c000" stroke-width="1" />
<line x1="980.30" y1="491.30" x2="980.30" y2="510.50" stroke="#00ff00" stroke-width="0.9" />
<rect x="972.10" y="496.50" width="16.40" height="13.10" fill="#fff" stroke="#35e035" stroke-width="0.9" />
<line x1="1003.10" y1="504.40" x2="1003.10" y2="518.70" stroke="#00ff00" stroke-width="0.9" />
<rect x="994.90" y="509.00" width="16.40" height="6.00" fill="#fff" stroke="#35e035" stroke-width="0.9" />
<line x1="1026.00" y1="512.60" x2="1026.00" y2="521.80" stroke="#00ff00" stroke-width="0.9" />
<line x1="1017.80" y1="515.60" x2="1034.20" y2="515.60" stroke="#00ff00" stroke-width="1.1" />
<line x1="1048.90" y1="502.90" x2="1048.90" y2="510.20" stroke="#00ff00" stroke-width="0.9" />
<line x1="1048.90" y1="515.70" x2="1048.90" y2="516.00" stroke="#00ff00" stroke-width="0.9" />
<rect x="1040.70" y="510.20" width="16.40" height="5.50" fill="#000" stroke="#00c000" stroke-width="1" />
<line x1="1071.70" y1="507.50" x2="1071.70" y2="516.30" stroke="#00ff00" stroke-width="0.9" />
<rect x="1063.50" y="510.50" width="16.40" height="2.80" fill="#fff" stroke="#35e035" stroke-width="0.9" />
<line x1="1094.60" y1="486.10" x2="1094.60" y2="489.20" stroke="#00ff00" stroke-width="0.9" />
<line x1="1094.60" y1="513.30" x2="1094.60" y2="514.80" stroke="#00ff00" stroke-width="0.9" />
<rect x="1086.40" y="489.20" width="16.40" height="24.10" fill="#000" stroke="#00c000" stroke-width="1" />
<line x1="1117.40" y1="484.30" x2="1117.40" y2="486.80" stroke="#00ff00" stroke-width="0.9" />
<line x1="1117.40" y1="489.80" x2="1117.40" y2="491.90" stroke="#00ff00" stroke-width="0.9" />
<rect x="1109.20" y="486.80" width="16.40" height="3.00" fill="#000" stroke="#00c000" stroke-width="1" />
</g>
<path d="M731.9 368.1 h4.4 l-2.2 2.7 Z" fill="#fff" stroke="none" stroke-width="1" />
<path d="M1140.2 368.6 l4.6 -2.6 l4.8 2.2 l-4.6 2.4 Z" fill="#8a8a8a" stroke="#555" stroke-width="0.3" />
<path d="M1140.4 377.2 q0.4 -4.8 4.6 -4.8 q4.2 0 4.8 4.8 Z" fill="#6a9fe4" stroke="#c9defa" stroke-width="0.5" />
<circle cx="1149.20" cy="374.80" r="2.90" fill="#f05a4a" stroke="#f7c7c0" stroke-width="0.6" />
<rect x="1148.10" y="373.70" width="2.20" height="2.20" fill="#fff" stroke="none" stroke-width="1" />
<line x1="709.00" y1="667.00" x2="709.00" y2="676.00" stroke="#c4c4c4" stroke-width="0.9" />
<line x1="801.40" y1="667.00" x2="801.40" y2="676.00" stroke="#c4c4c4" stroke-width="0.9" />
<line x1="871.40" y1="667.00" x2="871.40" y2="676.00" stroke="#c4c4c4" stroke-width="0.9" />
<line x1="921.20" y1="667.00" x2="921.20" y2="676.00" stroke="#c4c4c4" stroke-width="0.9" />
<line x1="972.00" y1="667.00" x2="972.00" y2="676.00" stroke="#c4c4c4" stroke-width="0.9" />
<line x1="1020.80" y1="667.00" x2="1020.80" y2="676.00" stroke="#c4c4c4" stroke-width="0.9" />
<line x1="1070.50" y1="667.00" x2="1070.50" y2="676.00" stroke="#c4c4c4" stroke-width="0.9" />
<line x1="1118.30" y1="667.00" x2="1118.30" y2="676.00" stroke="#c4c4c4" stroke-width="0.9" />
<rect x="1121.60" y="669.60" width="6.00" height="7.40" fill="#dfe9f7" stroke="#3b78c9" stroke-width="0.8" />
<circle cx="1128.40" cy="675.40" r="2.40" fill="#3fbf3f" stroke="none" stroke-width="1" />
<g clip-path="url(#tt3)"><defs><clipPath id="tt3"><rect x="-3.5" y="300.5" width="554.8" height="19.8" rx="3"/></clipPath></defs>
<ellipse cx="110" cy="310.5" rx="135" ry="6.5" fill="#c4c4c4" opacity="0.5" filter="url(#blur3)"/>
<ellipse cx="35" cy="312.0" rx="45" ry="6" fill="#fff" opacity="0.32" filter="url(#blur3)"/>
<rect x="245" y="301.3" width="228" height="17.5" fill="url(#t3g)"/>
</g>
<rect x="479.70" y="307.40" width="7.00" height="2.00" fill="#fff" stroke="#3a3a3a" stroke-width="0.4" />
<rect x="500.60" y="304.20" width="6.00" height="4.70" fill="none" stroke="#fff" stroke-width="1.4" />
<rect x="499.70" y="303.30" width="7.80" height="6.50" fill="none" stroke="#333" stroke-width="0.35" />
<path d="M527.5 304.2 L533.3 309.4 M533.3 304.2 L527.5 309.4" fill="none" stroke="#3a3a3a" stroke-width="2.7" />
<path d="M527.5 304.2 L533.3 309.4 M533.3 304.2 L527.5 309.4" fill="none" stroke="#fff" stroke-width="1.7" />
<rect x="0.8" y="304.9" width="10.2" height="10.2" rx="1.8" fill="#f3efe9" stroke="#fff" stroke-width="0.6"/>
<polyline points="2.2,311.0 3.5,308.6 4.7,310.0 5.9,307.7 7.1,309.8 8.3,308.4 9.6,310.8" fill="none" stroke="#f08f86" stroke-width="1.5" />
<polyline points="2.2,312.5 3.5,310.1 4.7,311.5 5.9,309.2 7.1,311.3 8.3,309.9 9.6,312.3" fill="none" stroke="#efcf8c" stroke-width="1.5" />
<polyline points="2.2,314.0 3.5,311.5 4.7,313.0 5.9,310.6 7.1,312.8 8.3,311.3 9.6,313.8" fill="none" stroke="#b4dc9c" stroke-width="1.5" />
<rect x="2.80" y="322.30" width="8.60" height="7.40" fill="#fff" stroke="#2f7fe0" stroke-width="1.0" rx="0.8"/>
<line x1="2.80" y1="323.50" x2="11.40" y2="323.50" stroke="#2f7fe0" stroke-width="1.6" />
<rect x="5.80" y="325.50" width="9.40" height="7.80" fill="#fff" stroke="#2f7fe0" stroke-width="1.0" rx="0.8"/>
<line x1="5.80" y1="326.70" x2="15.20" y2="326.70" stroke="#2f7fe0" stroke-width="1.6" />
<path d="M7.4 331.7 l2 -2.2 l1.6 1.2 l2.6 -2.6" fill="none" stroke="#e0442e" stroke-width="1.1" />
<path d="M538.5 325.9 L542.9 330.3 M542.9 325.9 L538.5 330.3" fill="none" stroke="#8a939e" stroke-width="1.2" />
<rect x="524.05" y="327.50" width="3.80" height="3.40" fill="none" stroke="#8a939e" stroke-width="0.9" />
<path d="M525.4 327.3 V325.5 H529.4 V329.1 H528.0" fill="none" stroke="#8a939e" stroke-width="0.9" />
<line x1="510.40" y1="330.40" x2="514.20" y2="330.40" stroke="#8a939e" stroke-width="1.3" />
<g clip-path="url(#tc3)"><defs><clipPath id="tc3"><rect x="0.0" y="335.0" width="547.0" height="24"/></clipPath></defs>
<line x1="2.00" y1="339.40" x2="2.00" y2="354.40" stroke="#b8b8b8" stroke-width="1.2" stroke-dasharray="1 1.2"/>
<rect x="8.50" y="340.70" width="13.40" height="10.60" fill="#e8f1fc" stroke="#2f7fe0" stroke-width="1.1" rx="0.8"/>
<line x1="8.50" y1="341.90" x2="21.90" y2="341.90" stroke="#2f7fe0" stroke-width="1.6" />
<path d="M10.1 346.9 l2.6 -3 l2.4 2 l2.6 -2.8 l2.4 2" fill="none" stroke="#2f9f3f" stroke-width="1.0" />
<circle cx="19.50" cy="350.50" r="3.60" fill="#3fbf3f" stroke="#dff5df" stroke-width="0.7" />
<path d="M17.5 350.5 h4 M19.5 348.5 v4" fill="none" stroke="#fff" stroke-width="1.0" />
<path d="M26.4 346.3 H31.2 L28.8 349.2 Z" fill="#111" stroke="none" stroke-width="1" />
<rect x="41.40" y="339.90" width="10.40" height="8.40" fill="#e8f1fc" stroke="#2f7fe0" stroke-width="1.0" rx="0.8"/>
<line x1="41.40" y1="341.10" x2="51.80" y2="341.10" stroke="#2f7fe0" stroke-width="1.6" />
<rect x="38.00" y="343.90" width="11.00" height="9.00" fill="#f3f8fe" stroke="#2f7fe0" stroke-width="1.1" rx="0.8"/>
<line x1="38.00" y1="345.10" x2="49.00" y2="345.10" stroke="#2f7fe0" stroke-width="1.6" />
<path d="M39.4 350.1 l2.4 -2 l2.2 1.6 l3.4 -3.2" fill="none" stroke="#2f9f3f" stroke-width="1.0" />
<path d="M45.0 343.5 l2 1.6 l3.2 -3.4" fill="none" stroke="#2f9f3f" stroke-width="1.0" />
<path d="M55.6 346.3 H60.4 L58.0 349.2 Z" fill="#111" stroke="none" stroke-width="1" />
<line x1="65.20" y1="338.40" x2="65.20" y2="355.40" stroke="#c2c2c2" stroke-width="0.9" />
<line x1="66.00" y1="338.40" x2="66.00" y2="355.40" stroke="#fcfcfc" stroke-width="0.7" />
<path d="M71.4 347.9 l7 -7 l8 4 l-7 7.4 Z" fill="#f0c23a" stroke="#a87d14" stroke-width="0.7" />
<path d="M71.4 347.9 l8 4.4 v2.4 l-8 -4.4 Z" fill="#c9962a" stroke="#8e6810" stroke-width="0.5" />
<path d="M79.4 352.3 l7 -7.4 v2.4 l-7 7.4 Z" fill="#dba92e" stroke="#8e6810" stroke-width="0.5" />
<path d="M76.0 346.1 l4 -3.6 l3.6 1.8" fill="none" stroke="#d24a2a" stroke-width="0.7" />
<rect x="91.40" y="338.70" width="81.80" height="16.40" fill="#dcdcdc" stroke="#8a8a8a" stroke-width="0.8" rx="2.2"/>
<rect x="92.20" y="339.50" width="80.20" height="6.90" fill="#e8e8e8" stroke="none" stroke-width="1" rx="1.8"/>
<path d="M96.4 342.9 l5.4 -3 l5.6 2.6 l-5.4 2.8 Z" fill="#4a4a4a" stroke="#2a2a2a" stroke-width="0.4" />
<path d="M98.6 344.1 v3 q3 1.8 6.2 0 v-3" fill="#7a7a7a" stroke="#444" stroke-width="0.4" />
<path d="M95.8 353.5 q0.4 -5.6 5.6 -5.6 q5 0 5.6 5.6 Z" fill="#3f86dc" stroke="#1f5cae" stroke-width="0.5" />
<path d="M100.4 347.9 l1 4.4 l1 -4.4 Z" fill="#d9a428" stroke="none" stroke-width="1" />
<circle cx="105.60" cy="350.90" r="3.30" fill="#2fb52f" stroke="#148614" stroke-width="0.5" />
<path d="M104.6 349.3 l2.6 1.6 l-2.6 1.6 Z" fill="#fff" stroke="none" stroke-width="1" />
<rect x="178.20" y="340.30" width="12.00" height="8.80" fill="#f6df8e" stroke="#b6902a" stroke-width="0.8" stroke-dasharray="1.2 0.7"/>
<line x1="179.80" y1="343.10" x2="188.60" y2="343.10" stroke="#c9a544" stroke-width="0.7" />
<line x1="179.80" y1="345.30" x2="188.60" y2="345.30" stroke="#c9a544" stroke-width="0.7" />
<circle cx="188.20" cy="350.50" r="3.60" fill="#3fbf3f" stroke="#e6f7e6" stroke-width="0.7" />
<path d="M186.2 350.5 h4 M188.2 348.5 v4" fill="none" stroke="#fff" stroke-width="1.0" />
<line x1="254.20" y1="338.40" x2="254.20" y2="355.40" stroke="#c2c2c2" stroke-width="0.9" />
<line x1="255.00" y1="338.40" x2="255.00" y2="355.40" stroke="#fcfcfc" stroke-width="0.7" />
<line x1="262.60" y1="339.90" x2="262.60" y2="353.70" stroke="#2f7fe0" stroke-width="0.9" />
<line x1="260.60" y1="351.90" x2="274.40" y2="351.90" stroke="#2f7fe0" stroke-width="0.9" />
<path d="M262.6 338.9 l-1.3 2 h2.6 Z M262.6 354.7 l-1.3 -2 h2.6 Z M259.6 351.9 l2 -1.3 v2.6 Z M275.4 351.9 l-2 -1.3 v2.6 Z" fill="#2f7fe0" stroke="none" stroke-width="1" />
<path d="M265.6 341.9 v7 M264.2 346.9 h1.4 M265.6 343.5 h1.4 M270.0 340.9 v6.4 M268.6 345.3 h1.4 M270.0 342.3 h1.4" fill="none" stroke="#1f9f1f" stroke-width="1.2" />
<rect x="281.40" y="338.90" width="20.60" height="16.00" fill="#dadada" stroke="#7f7f7f" stroke-width="0.8" rx="2"/>
<line x1="286.60" y1="339.90" x2="286.60" y2="353.70" stroke="#2f7fe0" stroke-width="0.9" />
<line x1="284.60" y1="351.90" x2="298.40" y2="351.90" stroke="#2f7fe0" stroke-width="0.9" />
<path d="M286.6 338.9 l-1.3 2 h2.6 Z M286.6 354.7 l-1.3 -2 h2.6 Z M283.6 351.9 l2 -1.3 v2.6 Z M299.4 351.9 l-2 -1.3 v2.6 Z" fill="#2f7fe0" stroke="none" stroke-width="1" />
<line x1="290.20" y1="340.50" x2="290.20" y2="350.30" stroke="#1f9f1f" stroke-width="0.8" />
<rect x="288.60" y="342.30" width="3.20" height="6.20" fill="#e9f7e9" stroke="#1f9f1f" stroke-width="0.8" />
<line x1="295.60" y1="342.30" x2="295.60" y2="350.30" stroke="#1f9f1f" stroke-width="0.8" />
<rect x="294.00" y="344.10" width="3.20" height="4.60" fill="#e9f7e9" stroke="#1f9f1f" stroke-width="0.8" />
<line x1="309.00" y1="339.90" x2="309.00" y2="353.70" stroke="#2f7fe0" stroke-width="0.9" />
<line x1="307.00" y1="351.90" x2="320.80" y2="351.90" stroke="#2f7fe0" stroke-width="0.9" />
<path d="M309.0 338.9 l-1.3 2 h2.6 Z M309.0 354.7 l-1.3 -2 h2.6 Z M306.0 351.9 l2 -1.3 v2.6 Z M321.8 351.9 l-2 -1.3 v2.6 Z" fill="#2f7fe0" stroke="none" stroke-width="1" />
<path d="M309.2 348.5 l2.8 -4.8 l2.6 3.2 l2.8 -4.2 l2.6 3.6" fill="none" stroke="#1f9f1f" stroke-width="1.2" />
<line x1="327.40" y1="338.40" x2="327.40" y2="355.40" stroke="#c2c2c2" stroke-width="0.9" />
<line x1="328.20" y1="338.40" x2="328.20" y2="355.40" stroke="#fcfcfc" stroke-width="0.7" />
<line x1="342.40" y1="348.10" x2="345.80" y2="353.30" stroke="#8a8a8a" stroke-width="2.4" stroke-linecap="round"/>
<circle cx="339.60" cy="344.90" r="4.40" fill="#ececec" stroke="#9a9a9a" stroke-width="1.2" />
<line x1="337.40" y1="344.90" x2="341.80" y2="344.90" stroke="#9a9a9a" stroke-width="1.1" />
<line x1="339.60" y1="342.70" x2="339.60" y2="347.10" stroke="#9a9a9a" stroke-width="1.1" />
<line x1="365.40" y1="348.10" x2="368.80" y2="353.30" stroke="#2a62b4" stroke-width="2.4" stroke-linecap="round"/>
<circle cx="362.60" cy="344.90" r="4.40" fill="#d6e8fc" stroke="#2f7fe0" stroke-width="1.2" />
<line x1="360.40" y1="344.90" x2="364.80" y2="344.90" stroke="#2f7fe0" stroke-width="1.1" />
<line x1="376.80" y1="338.40" x2="376.80" y2="355.40" stroke="#c2c2c2" stroke-width="0.9" />
<line x1="377.60" y1="338.40" x2="377.60" y2="355.40" stroke="#fcfcfc" stroke-width="0.7" />
<rect x="381.30" y="338.90" width="20.70" height="16.00" fill="#dadada" stroke="#7f7f7f" stroke-width="0.8" rx="2"/>
<line x1="386.60" y1="339.90" x2="386.60" y2="353.70" stroke="#2f7fe0" stroke-width="0.9" />
<line x1="384.60" y1="351.90" x2="398.40" y2="351.90" stroke="#2f7fe0" stroke-width="0.9" />
<path d="M386.6 338.9 l-1.3 2 h2.6 Z M386.6 354.7 l-1.3 -2 h2.6 Z M383.6 351.9 l2 -1.3 v2.6 Z M399.4 351.9 l-2 -1.3 v2.6 Z" fill="#2f7fe0" stroke="none" stroke-width="1" />
<line x1="398.00" y1="339.90" x2="398.00" y2="351.10" stroke="#2f7fe0" stroke-width="0.9" />
<path d="M389.0 344.7 h5 v-1.8 l3 2.6 l-3 2.6 v-1.8 h-5 Z" fill="#2fa52f" stroke="none" stroke-width="1" />
<line x1="409.20" y1="339.90" x2="409.20" y2="353.70" stroke="#2f7fe0" stroke-width="0.9" />
<line x1="407.20" y1="351.90" x2="421.00" y2="351.90" stroke="#2f7fe0" stroke-width="0.9" />
<path d="M409.2 338.9 l-1.3 2 h2.6 Z M409.2 354.7 l-1.3 -2 h2.6 Z M406.2 351.9 l2 -1.3 v2.6 Z M422.0 351.9 l-2 -1.3 v2.6 Z" fill="#2f7fe0" stroke="none" stroke-width="1" />
<line x1="415.00" y1="339.90" x2="415.00" y2="351.10" stroke="#2f7fe0" stroke-width="0.9" />
<path d="M421.2 343.3 h-2.4 v-1.4 l-2.6 2.2 l2.6 2.2 v-1.4 h2.4 Z" fill="#2f7fe0" stroke="none" stroke-width="1" />
<line x1="429.40" y1="339.40" x2="429.40" y2="354.40" stroke="#b8b8b8" stroke-width="1.2" stroke-dasharray="1 1.2"/>
<rect x="432.80" y="338.90" width="21.00" height="16.00" fill="#dadada" stroke="#7f7f7f" stroke-width="0.8" rx="2"/>
<path d="M440.40 342.70 L440.40 350.96 L442.29 349.24 L443.67 352.16 L444.87 351.64 L443.58 348.72 L446.08 348.55 Z" fill="#fff" stroke="#111" stroke-width="0.7" stroke-linejoin="round"/>
<path d="M459.4 346.9 h4.6 M468.0 346.9 h4.6 M466.0 340.3 v4.6 M466.0 348.9 v4.6" fill="none" stroke="#5a5a5a" stroke-width="1.0" />
<line x1="480.20" y1="338.40" x2="480.20" y2="355.40" stroke="#c2c2c2" stroke-width="0.9" />
<line x1="481.00" y1="338.40" x2="481.00" y2="355.40" stroke="#fcfcfc" stroke-width="0.7" />
<line x1="493.20" y1="341.90" x2="493.20" y2="351.30" stroke="#5a5a5a" stroke-width="1.1" />
<line x1="511.00" y1="347.30" x2="521.00" y2="347.30" stroke="#5a5a5a" stroke-width="1.1" />
<line x1="534.80" y1="351.50" x2="544.40" y2="342.30" stroke="#5a5a5a" stroke-width="1.1" />
</g>
<path d="M160.7 362.3 L164.5 366.1 M164.5 362.3 L160.7 366.1" fill="none" stroke="#111" stroke-width="1.25" />
<line x1="5.20" y1="403.00" x2="133.20" y2="403.00" stroke="#dcdcdc" stroke-width="0.8" stroke-dasharray="2.4 2.0"/>
<line x1="5.20" y1="434.90" x2="133.20" y2="434.90" stroke="#dcdcdc" stroke-width="0.8" stroke-dasharray="2.4 2.0"/>
<line x1="5.20" y1="466.70" x2="133.20" y2="466.70" stroke="#dcdcdc" stroke-width="0.8" stroke-dasharray="2.4 2.0"/>
<line x1="5.20" y1="498.20" x2="133.20" y2="498.20" stroke="#dcdcdc" stroke-width="0.8" stroke-dasharray="2.4 2.0"/>
<line x1="5.20" y1="529.90" x2="133.20" y2="529.90" stroke="#dcdcdc" stroke-width="0.8" stroke-dasharray="2.4 2.0"/>
<line x1="5.20" y1="561.60" x2="133.20" y2="561.60" stroke="#dcdcdc" stroke-width="0.8" stroke-dasharray="2.4 2.0"/>
<line x1="5.20" y1="592.80" x2="133.20" y2="592.80" stroke="#dcdcdc" stroke-width="0.8" stroke-dasharray="2.4 2.0"/>
<line x1="27.20" y1="372.60" x2="27.20" y2="622.50" stroke="#dcdcdc" stroke-width="0.8" stroke-dasharray="2.4 2.0"/>
<line x1="27.20" y1="623.50" x2="27.20" y2="625.10" stroke="#555" stroke-width="0.8" />
<line x1="50.60" y1="372.60" x2="50.60" y2="622.50" stroke="#dcdcdc" stroke-width="0.8" stroke-dasharray="2.4 2.0"/>
<line x1="50.60" y1="623.50" x2="50.60" y2="625.10" stroke="#555" stroke-width="0.8" />
<line x1="73.60" y1="372.60" x2="73.60" y2="622.50" stroke="#dcdcdc" stroke-width="0.8" stroke-dasharray="2.4 2.0"/>
<line x1="73.60" y1="623.50" x2="73.60" y2="625.10" stroke="#555" stroke-width="0.8" />
<line x1="96.40" y1="372.60" x2="96.40" y2="622.50" stroke="#dcdcdc" stroke-width="0.8" stroke-dasharray="2.4 2.0"/>
<line x1="96.40" y1="623.50" x2="96.40" y2="625.10" stroke="#555" stroke-width="0.8" />
<line x1="119.40" y1="372.60" x2="119.40" y2="622.50" stroke="#dcdcdc" stroke-width="0.8" stroke-dasharray="2.4 2.0"/>
<line x1="119.40" y1="623.50" x2="119.40" y2="625.10" stroke="#555" stroke-width="0.8" />
<rect x="4.20" y="371.60" width="130.00" height="251.90" fill="none" stroke="#3a3a3a" stroke-width="0.9" />
<polyline points="5.0,554.5 7.1,554.5 8.0,560.7 9.2,567.3 11.0,567.8 12.0,586.1 13.8,586.5 14.5,598.5 17.7,598.5 18.6,592.7 20.3,579.7 23.0,579.4 23.9,567.3 27.4,566.9 31.0,548.3 32.7,547.8 34.0,510.2 35.4,504.0 42.5,504.0 43.3,497.4 46.3,497.4 47.4,485.3 50.4,485.3 51.3,472.0 54.0,472.0 55.2,485.3 57.5,486.2 59.3,504.0 68.1,504.0 68.6,516.9 74.3,516.9 75.7,485.3 78.7,485.3 79.6,504.0 80.5,504.0 81.4,485.3 82.8,490.6 83.5,504.0 91.1,504.0 91.6,516.9 103.0,516.9 104.4,497.4 106.0,496.9 106.1,496.2 106.1,441.2 108.3,441.2 109.7,447.4 115.0,447.8 116.4,453.6 117.6,447.4 118.9,453.6 134.4,454.2" fill="none" stroke="#ff6a6a" stroke-width="0.95" stroke-linejoin="miter"/>
<polyline points="5.0,510.5 6.7,510.5 7.4,517.3 8.8,523.5 11.0,530.0 12.0,540.3 13.3,548.3 15.6,548.3 16.8,535.9 21.2,535.4 22.1,523.5 24.8,522.9 26.2,510.5 31.5,510.5 33.3,503.1 33.8,480.0 33.8,472.3 36.3,472.3 41.0,447.4 43.9,447.1 44.6,441.2 46.3,441.2 47.8,428.3 51.3,428.3 54.8,442.1 57.0,449.2 59.8,466.1 61.0,463.4 63.7,447.4 66.9,459.8 69.3,460.7 70.8,472.3 71.6,460.7 72.9,466.1 76.1,441.2 80.0,458.1 81.0,454.5 83.1,466.1 84.6,463.4 87.6,454.5 90.2,465.2 91.6,466.1 93.4,478.5 94.6,473.2 95.9,478.5 99.1,466.9 100.5,472.3 103.0,466.1 104.4,463.4 105.6,459.0 106.1,396.0 107.2,390.6 110.7,390.6 111.8,403.1 134.4,403.1" fill="none" stroke="#2f7fea" stroke-width="0.95" stroke-linejoin="miter"/>
<line x1="134.20" y1="434.90" x2="136.00" y2="434.90" stroke="#444" stroke-width="0.8" />
<line x1="134.20" y1="466.70" x2="136.00" y2="466.70" stroke="#444" stroke-width="0.8" />
<line x1="134.20" y1="498.20" x2="136.00" y2="498.20" stroke="#444" stroke-width="0.8" />
<line x1="134.20" y1="529.90" x2="136.00" y2="529.90" stroke="#444" stroke-width="0.8" />
<line x1="134.20" y1="561.60" x2="136.00" y2="561.60" stroke="#444" stroke-width="0.8" />
<line x1="134.20" y1="592.80" x2="136.00" y2="592.80" stroke="#444" stroke-width="0.8" />
<line x1="3.00" y1="638.70" x2="150.60" y2="638.70" stroke="#555" stroke-width="0.9" />
<line x1="56.20" y1="641.50" x2="56.20" y2="650.50" stroke="#8f8f8f" stroke-width="0.8" />
<line x1="98.40" y1="641.50" x2="98.40" y2="650.50" stroke="#8f8f8f" stroke-width="0.8" />
<line x1="2.60" y1="638.70" x2="2.60" y2="651.70" stroke="#b0b0b0" stroke-width="0.7" />
<line x1="172.30" y1="360.80" x2="508.70" y2="360.80" stroke="#8c8c8c" stroke-width="1" />
<line x1="172.30" y1="360.80" x2="172.30" y2="644.40" stroke="#8c8c8c" stroke-width="1" />
<line x1="508.70" y1="360.80" x2="508.70" y2="644.40" stroke="#d8d8d8" stroke-width="1" />
<line x1="172.30" y1="644.40" x2="508.70" y2="644.40" stroke="#d8d8d8" stroke-width="1" />
<line x1="508.70" y1="370.40" x2="510.90" y2="370.40" stroke="#d8d8d8" stroke-width="1" />
<line x1="508.70" y1="393.30" x2="510.90" y2="393.30" stroke="#d8d8d8" stroke-width="1" />
<line x1="508.70" y1="416.20" x2="510.90" y2="416.20" stroke="#d8d8d8" stroke-width="1" />
<line x1="508.70" y1="439.00" x2="510.90" y2="439.00" stroke="#d8d8d8" stroke-width="1" />
<line x1="508.70" y1="461.80" x2="510.90" y2="461.80" stroke="#d8d8d8" stroke-width="1" />
<line x1="508.70" y1="484.70" x2="510.90" y2="484.70" stroke="#d8d8d8" stroke-width="1" />
<line x1="508.70" y1="507.50" x2="510.90" y2="507.50" stroke="#d8d8d8" stroke-width="1" />
<line x1="508.70" y1="530.40" x2="510.90" y2="530.40" stroke="#d8d8d8" stroke-width="1" />
<line x1="508.70" y1="553.30" x2="510.90" y2="553.30" stroke="#d8d8d8" stroke-width="1" />
<line x1="508.70" y1="576.20" x2="510.90" y2="576.20" stroke="#d8d8d8" stroke-width="1" />
<line x1="508.70" y1="599.00" x2="510.90" y2="599.00" stroke="#d8d8d8" stroke-width="1" />
<line x1="508.70" y1="621.90" x2="510.90" y2="621.90" stroke="#d8d8d8" stroke-width="1" />
<line x1="172.30" y1="475.50" x2="508.70" y2="475.50" stroke="#7f8a99" stroke-width="1" />
<line x1="172.60" y1="644.40" x2="172.60" y2="646.60" stroke="#d8d8d8" stroke-width="1" />
<line x1="218.20" y1="644.40" x2="218.20" y2="646.60" stroke="#d8d8d8" stroke-width="1" />
<line x1="263.90" y1="644.40" x2="263.90" y2="646.60" stroke="#d8d8d8" stroke-width="1" />
<line x1="309.60" y1="644.40" x2="309.60" y2="646.60" stroke="#d8d8d8" stroke-width="1" />
<line x1="355.30" y1="644.40" x2="355.30" y2="646.60" stroke="#d8d8d8" stroke-width="1" />
<line x1="401.00" y1="644.40" x2="401.00" y2="646.60" stroke="#d8d8d8" stroke-width="1" />
<line x1="446.80" y1="644.40" x2="446.80" y2="646.60" stroke="#d8d8d8" stroke-width="1" />
<g clip-path="url(#c3)"><defs><clipPath id="c3"><rect x="172.8" y="360.8" width="335.4" height="283.59999999999997"/></clipPath></defs>
<line x1="172.40" y1="490.70" x2="172.40" y2="494.40" stroke="#00ff00" stroke-width="0.9" />
<rect x="164.20" y="490.70" width="16.40" height="3.70" fill="#fff" stroke="#35e035" stroke-width="0.9" />
<line x1="195.20" y1="478.50" x2="195.20" y2="485.90" stroke="#00ff00" stroke-width="0.9" />
<line x1="195.20" y1="495.30" x2="195.20" y2="495.60" stroke="#00ff00" stroke-width="0.9" />
<rect x="187.00" y="485.90" width="16.40" height="9.40" fill="#000" stroke="#00c000" stroke-width="1" />
<line x1="218.20" y1="482.80" x2="218.20" y2="489.30" stroke="#00ff00" stroke-width="0.9" />
<rect x="210.00" y="485.90" width="16.40" height="3.00" fill="#fff" stroke="#35e035" stroke-width="0.9" />
<line x1="241.00" y1="480.70" x2="241.00" y2="495.00" stroke="#00ff00" stroke-width="0.9" />
<line x1="232.80" y1="488.90" x2="249.20" y2="488.90" stroke="#00ff00" stroke-width="1.1" />
<line x1="263.80" y1="486.40" x2="263.80" y2="500.40" stroke="#00ff00" stroke-width="0.9" />
<rect x="255.60" y="488.30" width="16.40" height="11.30" fill="#fff" stroke="#35e035" stroke-width="0.9" />
<line x1="286.70" y1="490.70" x2="286.70" y2="493.50" stroke="#00ff00" stroke-width="0.9" />
<line x1="286.70" y1="499.90" x2="286.70" y2="500.20" stroke="#00ff00" stroke-width="0.9" />
<rect x="278.50" y="493.50" width="16.40" height="6.40" fill="#000" stroke="#00c000" stroke-width="1" />
<line x1="309.60" y1="485.90" x2="309.60" y2="488.90" stroke="#00ff00" stroke-width="0.9" />
<line x1="309.60" y1="493.50" x2="309.60" y2="501.40" stroke="#00ff00" stroke-width="0.9" />
<rect x="301.40" y="488.90" width="16.40" height="4.60" fill="#000" stroke="#00c000" stroke-width="1" />
<line x1="332.40" y1="482.20" x2="332.40" y2="509.60" stroke="#00ff00" stroke-width="0.9" />
<rect x="324.20" y="488.90" width="16.40" height="18.60" fill="#fff" stroke="#35e035" stroke-width="0.9" />
<line x1="355.30" y1="500.50" x2="355.30" y2="521.20" stroke="#00ff00" stroke-width="0.9" />
<rect x="347.10" y="507.50" width="16.40" height="9.10" fill="#fff" stroke="#35e035" stroke-width="0.9" />
<line x1="378.20" y1="512.00" x2="378.20" y2="524.90" stroke="#00ff00" stroke-width="0.9" />
<line x1="370.00" y1="516.20" x2="386.40" y2="516.20" stroke="#00ff00" stroke-width="1.1" />
<line x1="401.00" y1="498.40" x2="401.00" y2="509.60" stroke="#00ff00" stroke-width="0.9" />
<line x1="401.00" y1="515.70" x2="401.00" y2="516.00" stroke="#00ff00" stroke-width="0.9" />
<rect x="392.80" y="509.60" width="16.40" height="6.10" fill="#000" stroke="#00c000" stroke-width="1" />
<line x1="423.90" y1="505.00" x2="423.90" y2="516.30" stroke="#00ff00" stroke-width="0.9" />
<rect x="415.70" y="509.60" width="16.40" height="3.70" fill="#fff" stroke="#35e035" stroke-width="0.9" />
<line x1="446.80" y1="473.70" x2="446.80" y2="479.10" stroke="#00ff00" stroke-width="0.9" />
<line x1="446.80" y1="513.60" x2="446.80" y2="514.80" stroke="#00ff00" stroke-width="0.9" />
<rect x="438.60" y="479.10" width="16.40" height="34.50" fill="#000" stroke="#00c000" stroke-width="1" />
<line x1="469.60" y1="472.40" x2="469.60" y2="475.20" stroke="#00ff00" stroke-width="0.9" />
<line x1="469.60" y1="479.80" x2="469.60" y2="482.80" stroke="#00ff00" stroke-width="0.9" />
<rect x="461.40" y="475.20" width="16.40" height="4.60" fill="#000" stroke="#00c000" stroke-width="1" />
</g>
<path d="M175.5 364.2 h4.6 l-2.3 2.7 Z" fill="#fff" stroke="none" stroke-width="1" />
<path d="M495.8 365.0 l4.6 -2.6 l4.8 2.2 l-4.6 2.4 Z" fill="#8a8a8a" stroke="#555" stroke-width="0.3" />
<path d="M496.0 373.6 q0.4 -4.8 4.6 -4.8 q4.2 0 4.8 4.8 Z" fill="#6a9fe4" stroke="#c9defa" stroke-width="0.5" />
<circle cx="504.80" cy="371.20" r="2.90" fill="#f05a4a" stroke="#f7c7c0" stroke-width="0.6" />
<rect x="503.70" y="370.10" width="2.20" height="2.20" fill="#fff" stroke="none" stroke-width="1" />
<line x1="153.40" y1="659.00" x2="153.40" y2="672.60" stroke="#c4c4c4" stroke-width="0.9" />
<line x1="244.00" y1="659.00" x2="244.00" y2="672.60" stroke="#c4c4c4" stroke-width="0.9" />
<line x1="314.50" y1="659.00" x2="314.50" y2="672.60" stroke="#c4c4c4" stroke-width="0.9" />
<line x1="365.40" y1="659.00" x2="365.40" y2="672.60" stroke="#c4c4c4" stroke-width="0.9" />
<line x1="415.70" y1="659.00" x2="415.70" y2="672.60" stroke="#c4c4c4" stroke-width="0.9" />
<line x1="464.50" y1="659.00" x2="464.50" y2="672.60" stroke="#c4c4c4" stroke-width="0.9" />
<line x1="514.80" y1="659.00" x2="514.80" y2="672.60" stroke="#c4c4c4" stroke-width="0.9" />
<line x1="545.20" y1="672.60" x2="546.60" y2="671.20" stroke="#b0b0b0" stroke-width="0.8" stroke-dasharray="0.9 0.7"/>
<line x1="543.00" y1="672.60" x2="546.60" y2="669.00" stroke="#b0b0b0" stroke-width="0.8" stroke-dasharray="0.9 0.7"/>
<line x1="540.80" y1="672.60" x2="546.60" y2="666.80" stroke="#b0b0b0" stroke-width="0.8" stroke-dasharray="0.9 0.7"/>
<g clip-path="url(#tt1)"><defs><clipPath id="tt1"><rect x="1.5" y="3" width="549.2" height="19.4" rx="3"/></clipPath></defs>
<ellipse cx="30" cy="12" rx="30" ry="7.5" fill="#fff" opacity="0.78" filter="url(#blur3)"/>
<ellipse cx="79" cy="12" rx="10" ry="9" fill="#fff" opacity="1.0" filter="url(#blur3)"/>
<ellipse cx="134.5" cy="12" rx="6.5" ry="9" fill="#fff" opacity="0.95" filter="url(#blur3)"/>
<ellipse cx="158" cy="12" rx="8" ry="7" fill="#fff" opacity="0.6" filter="url(#blur3)"/>
<ellipse cx="207" cy="12.5" rx="25" ry="6.5" fill="#fff" opacity="0.5" filter="url(#blur3)"/>
<ellipse cx="309" cy="11" rx="4.8" ry="11" fill="#fff" opacity="1.0" filter="url(#blur3)"/>
<ellipse cx="349" cy="11" rx="10" ry="11" fill="#fff" opacity="1.0" filter="url(#blur3)"/>
</g>
<rect x="480.50" y="10.10" width="7.00" height="2.00" fill="#fff" stroke="#3a3a3a" stroke-width="0.4" />
<rect x="501.40" y="6.90" width="6.00" height="4.70" fill="none" stroke="#fff" stroke-width="1.4" />
<rect x="500.50" y="6.00" width="7.80" height="6.50" fill="none" stroke="#333" stroke-width="0.35" />
<path d="M528.3 6.9 L534.1 12.1 M534.1 6.9 L528.3 12.1" fill="none" stroke="#3a3a3a" stroke-width="2.7" />
<path d="M528.3 6.9 L534.1 12.1 M534.1 6.9 L528.3 12.1" fill="none" stroke="#fff" stroke-width="1.7" />
<rect x="6.4" y="7.8" width="10.0" height="10.0" rx="1.8" fill="#f3efe9" stroke="#fff" stroke-width="0.6"/>
<polyline points="7.8,13.8 9.0,11.4 10.2,12.8 11.4,10.5 12.6,12.6 13.8,11.2 15.0,13.6" fill="none" stroke="#f08f86" stroke-width="1.5" />
<polyline points="7.8,15.3 9.0,12.9 10.2,14.3 11.4,12.0 12.6,14.1 13.8,12.7 15.0,15.1" fill="none" stroke="#efcf8c" stroke-width="1.5" />
<polyline points="7.8,16.7 9.0,14.3 10.2,15.7 11.4,13.4 12.6,15.5 13.8,14.1 15.0,16.5" fill="none" stroke="#b4dc9c" stroke-width="1.5" />
<rect x="9.50" y="24.80" width="7.20" height="6.00" fill="#fff" stroke="#7aa6e6" stroke-width="0.7" rx="0.8"/>
<line x1="9.50" y1="26.00" x2="16.70" y2="26.00" stroke="#7aa6e6" stroke-width="1.6" />
<rect x="12.30" y="29.00" width="7.20" height="6.00" fill="#fff" stroke="#7aa6e6" stroke-width="0.7" rx="0.8"/>
<line x1="12.30" y1="30.20" x2="19.50" y2="30.20" stroke="#7aa6e6" stroke-width="1.6" />
<line x1="13.70" y1="32.80" x2="18.10" y2="32.80" stroke="#a9c4ec" stroke-width="0.7" />
<path d="M537.8 28.0 L542.2 32.4 M542.2 28.0 L537.8 32.4" fill="none" stroke="#8a939e" stroke-width="1.2" />
<rect x="523.35" y="29.60" width="3.80" height="3.40" fill="none" stroke="#8a939e" stroke-width="0.9" />
<path d="M524.8 29.4 V27.6 H528.8 V31.2 H527.4" fill="none" stroke="#8a939e" stroke-width="0.9" />
<line x1="509.70" y1="32.50" x2="513.50" y2="32.50" stroke="#8a939e" stroke-width="1.3" />
<line x1="7.30" y1="41.10" x2="7.30" y2="55.10" stroke="#b4b4b4" stroke-width="1.3" stroke-dasharray="1 1"/>
<rect x="14.20" y="42.30" width="9.20" height="7.60" fill="#eef4fd" stroke="#4b82d4" stroke-width="0.8" rx="0.8"/>
<line x1="14.20" y1="43.15" x2="23.40" y2="43.15" stroke="#4b82d4" stroke-width="0.9" />
<line x1="15.40" y1="44.50" x2="15.40" y2="48.70" stroke="#8fb0e0" stroke-width="0.6" />
<line x1="15.40" y1="47.50" x2="22.20" y2="47.50" stroke="#8fb0e0" stroke-width="0.6" />
<path d="M18.4 47.8 H21.2 V44.9 H24.0 V47.8 H26.8 V50.5 H24.0 V53.3 H21.2 V50.5 H18.4 Z" fill="#22b322" stroke="#138a13" stroke-width="0.5" />
<path d="M29.4 47.3 H33.2 L31.3 49.6 Z" fill="#111" stroke="none" stroke-width="1" />
<rect x="40.60" y="42.30" width="10.00" height="7.80" fill="#e6eefb" stroke="#4b82d4" stroke-width="0.8" rx="0.8"/>
<line x1="40.60" y1="43.15" x2="50.60" y2="43.15" stroke="#4b82d4" stroke-width="0.9" />
<line x1="41.80" y1="45.90" x2="49.40" y2="45.90" stroke="#8fb0e0" stroke-width="0.6" />
<rect x="43.20" y="46.10" width="10.00" height="7.60" fill="#f2f6fd" stroke="#4b82d4" stroke-width="0.8" rx="0.8"/>
<line x1="43.20" y1="46.95" x2="53.20" y2="46.95" stroke="#4b82d4" stroke-width="0.9" />
<line x1="44.40" y1="50.50" x2="52.00" y2="50.50" stroke="#8fb0e0" stroke-width="0.6" />
<path d="M56.1 47.3 H59.9 L58.0 49.6 Z" fill="#111" stroke="none" stroke-width="1" />
<line x1="65.80" y1="41.10" x2="65.80" y2="55.10" stroke="#c2c2c2" stroke-width="0.9" />
<line x1="66.60" y1="41.10" x2="66.60" y2="55.10" stroke="#fcfcfc" stroke-width="0.7" />
<rect x="69.30" y="40.35" width="18.00" height="15.50" fill="#fbfbfb" stroke="#d0d0d0" stroke-width="0.7" rx="1.2"/>
<rect x="72.60" y="43.10" width="10.60" height="10.00" fill="#fff" stroke="#4c8ad8" stroke-width="1.0" rx="1"/>
<path d="M74.4 46.5 l2.2 -2.2 l2.4 2.2 l-2.2 2.2 Z" fill="#2fb52f" stroke="#157a15" stroke-width="0.4" />
<path d="M77.2 49.5 l2.2 -2.2 l2.4 2.2 l-2.2 2.2 Z" fill="#f4a79a" stroke="#d8402e" stroke-width="0.6" />
<line x1="92.80" y1="48.10" x2="103.20" y2="48.10" stroke="#5a5a5a" stroke-width="0.8" />
<line x1="98.00" y1="42.90" x2="98.00" y2="53.30" stroke="#5a5a5a" stroke-width="0.8" />
<path d="M92.6 48.1 L98.0 42.7 L103.4 48.1 L98.0 53.5 Z" fill="none" stroke="#5a5a5a" stroke-width="0.9" />
<circle cx="98.00" cy="48.10" r="2.00" fill="#f3f3f3" stroke="#5a5a5a" stroke-width="0.6" />
<path d="M111.5 43.5 h5.5 l1 1.4 h3 v4 h-9.5 Z" fill="#f3d36a" stroke="#c79a2a" stroke-width="0.6" />
<line x1="114.00" y1="48.90" x2="114.00" y2="53.50" stroke="#b28a2a" stroke-width="0.9" />
<path d="M120.1 45.9 L121.2 48.8 L124.3 48.9 L121.9 50.9 L122.7 53.9 L120.1 52.2 L117.5 53.9 L118.3 50.9 L115.9 48.9 L119.0 48.8 Z" fill="#f6c21c" stroke="#c98f12" stroke-width="0.5" />
<rect x="132.00" y="43.50" width="11.60" height="9.40" fill="#f1f6fd" stroke="#2a5fb0" stroke-width="1.1" rx="1"/>
<rect x="132.60" y="44.10" width="2.80" height="8.20" fill="#2f68bd" stroke="none" stroke-width="1" />
<line x1="137.00" y1="46.10" x2="142.00" y2="46.10" stroke="#e9a3a3" stroke-width="0.7" />
<rect x="152.00" y="42.90" width="8.60" height="8.80" fill="#eef4fc" stroke="#6b93c9" stroke-width="0.9" rx="0.8"/>
<path d="M154.0 46.6 l1.5 -2 l1.6 2.4 l1.8 -2.6" fill="none" stroke="#4c79b8" stroke-width="0.7" />
<circle cx="159.00" cy="49.30" r="3.10" fill="#dbe9f9" stroke="#4c79b8" stroke-width="0.9" />
<line x1="161.20" y1="51.70" x2="164.00" y2="54.30" stroke="#d2a21e" stroke-width="1.7" />
<line x1="170.30" y1="41.10" x2="170.30" y2="55.10" stroke="#c2c2c2" stroke-width="0.9" />
<line x1="171.10" y1="41.10" x2="171.10" y2="55.10" stroke="#fcfcfc" stroke-width="0.7" />
<path d="M177.0 42.7 h6 l2.4 2.4 v7.6 h-8.4 Z" fill="#fdfdfd" stroke="#6f6f6f" stroke-width="0.7" />
<line x1="178.60" y1="45.50" x2="183.00" y2="45.50" stroke="#9a9a9a" stroke-width="0.6" />
<line x1="178.60" y1="47.30" x2="183.00" y2="47.30" stroke="#9a9a9a" stroke-width="0.6" />
<path d="M180.8 49.4 H183.7 V46.5 H186.3 V49.4 H189.2 V52.1 H186.3 V54.9 H183.7 V52.1 H180.8 Z" fill="#22b322" stroke="#138a13" stroke-width="0.5" />
<path d="M257.5 42.3 L263.3 48.1 L257.5 53.9 L251.7 48.1 Z" fill="#f6c62a" stroke="#b98a12" stroke-width="0.7" />
<path d="M257.5 44.9 L260.7 48.1 L257.5 51.3 L254.3 48.1 Z" fill="#fbe7a0" stroke="#c8951a" stroke-width="0.4" />
<line x1="257.50" y1="46.10" x2="257.50" y2="48.90" stroke="#7a5a10" stroke-width="0.9" />
<circle cx="257.50" cy="50.10" r="0.55" fill="#7a5a10" stroke="none" stroke-width="1" />
<rect x="270.00" y="40.10" width="62.40" height="16.00" fill="#f7f7f7" stroke="#c6c6c6" stroke-width="0.7" rx="1.2"/>
<path d="M274.0 48.6 q5 -9 10.4 0 Z" fill="#5d9be0" stroke="#2f6bb8" stroke-width="0.6" />
<path d="M273.0 48.6 h12.4 v1.4 h-12.4 Z" fill="#3f7fcf" stroke="none" stroke-width="1" />
<path d="M275.0 50.1 h8 l-1 3.8 h-6 Z" fill="#f2d9a8" stroke="#b99552" stroke-width="0.4" />
<circle cx="282.80" cy="51.70" r="2.90" fill="#24b324" stroke="#128012" stroke-width="0.5" />
<path d="M281.8 50.3 l2.4 1.4 l-2.4 1.4 Z" fill="#fff" stroke="none" stroke-width="1" />
<line x1="337.20" y1="41.10" x2="337.20" y2="55.10" stroke="#b4b4b4" stroke-width="1.3" stroke-dasharray="1 1"/>
<line x1="346.30" y1="42.70" x2="346.30" y2="53.50" stroke="#4a4a4a" stroke-width="0.9" />
<line x1="344.50" y1="51.50" x2="355.10" y2="51.50" stroke="#4a4a4a" stroke-width="0.9" />
<path d="M348.5 43.6 v6.5 M347.3 47.9 h1.2 M348.5 45.1 h1.2 M352.1 42.6 v5.5 M350.9 46.1 h1.2 M352.1 43.9 h1.2" fill="none" stroke="#1fa31f" stroke-width="1.0" />
<rect x="360.20" y="40.35" width="17.80" height="15.50" fill="#fbfbfb" stroke="#d0d0d0" stroke-width="0.7" rx="1.2"/>
<line x1="365.30" y1="42.70" x2="365.30" y2="53.50" stroke="#4a4a4a" stroke-width="0.9" />
<line x1="363.50" y1="51.50" x2="374.10" y2="51.50" stroke="#4a4a4a" stroke-width="0.9" />
<line x1="369.50" y1="41.90" x2="369.50" y2="50.70" stroke="#117a11" stroke-width="0.8" />
<rect x="367.80" y="43.70" width="3.40" height="5.60" fill="#2fc22f" stroke="#117a11" stroke-width="0.6" />
<line x1="384.30" y1="42.70" x2="384.30" y2="53.50" stroke="#4a4a4a" stroke-width="0.9" />
<line x1="382.50" y1="51.50" x2="393.10" y2="51.50" stroke="#4a4a4a" stroke-width="0.9" />
<path d="M384.5 49.7 l2 -5 q3.4 0.4 5.6 4.6" fill="none" stroke="#1fa31f" stroke-width="1.0" />
<line x1="401.30" y1="41.10" x2="401.30" y2="55.10" stroke="#c2c2c2" stroke-width="0.9" />
<line x1="402.10" y1="41.10" x2="402.10" y2="55.10" stroke="#fcfcfc" stroke-width="0.7" />
<line x1="415.20" y1="49.90" x2="419.20" y2="54.30" stroke="#b9b9b9" stroke-width="2.0" stroke-linecap="round"/>
<circle cx="412.60" cy="47.10" r="4.00" fill="#e3e3e3" stroke="#a9a9a9" stroke-width="1.1" />
<line x1="410.60" y1="47.10" x2="414.60" y2="47.10" stroke="#a9a9a9" stroke-width="1.0" />
<line x1="412.60" y1="45.10" x2="412.60" y2="49.10" stroke="#a9a9a9" stroke-width="1.0" />
<line x1="435.40" y1="49.90" x2="439.40" y2="54.30" stroke="#d5a621" stroke-width="2.0" stroke-linecap="round"/>
<circle cx="432.80" cy="47.10" r="4.00" fill="#d9e9fb" stroke="#3b7fd2" stroke-width="1.1" />
<line x1="430.80" y1="47.10" x2="434.80" y2="47.10" stroke="#3b7fd2" stroke-width="1.0" />
<line x1="446.20" y1="41.10" x2="446.20" y2="55.10" stroke="#c2c2c2" stroke-width="0.9" />
<line x1="447.00" y1="41.10" x2="447.00" y2="55.10" stroke="#fcfcfc" stroke-width="0.7" />
<rect x="449.30" y="40.35" width="17.30" height="15.50" fill="#fbfbfb" stroke="#d0d0d0" stroke-width="0.7" rx="1.2"/>
<line x1="454.30" y1="42.70" x2="454.30" y2="53.50" stroke="#4a4a4a" stroke-width="0.9" />
<line x1="452.50" y1="51.50" x2="463.10" y2="51.50" stroke="#4a4a4a" stroke-width="0.9" />
<path d="M457.5 44.5 l3.8 2.4 l-3.8 2.4 Z" fill="#1fa31f" stroke="none" stroke-width="1" />
<line x1="474.00" y1="42.70" x2="474.00" y2="53.50" stroke="#4a4a4a" stroke-width="0.9" />
<line x1="472.20" y1="51.50" x2="482.80" y2="51.50" stroke="#4a4a4a" stroke-width="0.9" />
<line x1="478.70" y1="42.30" x2="478.70" y2="51.50" stroke="#4a4a4a" stroke-width="0.9" />
<path d="M483.6 45.1 l-3.2 1.8 l3.2 1.8 Z" fill="#e0342a" stroke="none" stroke-width="1" />
<line x1="490.30" y1="41.10" x2="490.30" y2="55.10" stroke="#c2c2c2" stroke-width="0.9" />
<line x1="491.10" y1="41.10" x2="491.10" y2="55.10" stroke="#fcfcfc" stroke-width="0.7" />
<path d="M496.2 42.5 h5.6 l2.4 2.4 v7.2 h-8 Z" fill="#fdfdfd" stroke="#6f6f6f" stroke-width="0.7" />
<path d="M500.6 49.4 H503.4 V46.5 H506.2 V49.4 H509.0 V52.1 H506.2 V54.9 H503.4 V52.1 H500.6 Z" fill="#22b322" stroke="#138a13" stroke-width="0.5" />
<path d="M511.3 47.3 H515.1 L513.2 49.6 Z" fill="#111" stroke="none" stroke-width="1" />
<circle cx="528.20" cy="48.10" r="5.60" fill="#2f78d2" stroke="#1d56a8" stroke-width="0.8" />
<circle cx="528.20" cy="48.10" r="3.80" fill="#f4f8fd" stroke="none" stroke-width="1" />
<path d="M528.2 45.5 V48.1 H530.2" fill="none" stroke="#333" stroke-width="0.8" />
<path d="M538.3 47.3 H542.1 L540.2 49.6 Z" fill="#111" stroke="none" stroke-width="1" />
<line x1="7.30" y1="59.90" x2="7.30" y2="73.90" stroke="#b4b4b4" stroke-width="1.3" stroke-dasharray="1 1"/>
<rect x="12.30" y="58.90" width="17.30" height="16.00" fill="#fcfcfc" stroke="#d4d4d4" stroke-width="0.7" rx="1.2"/>
<path d="M18.40 62.30 L18.40 70.56 L20.29 68.84 L21.67 71.76 L22.87 71.24 L21.58 68.32 L24.08 68.15 Z" fill="#3c3c3c" stroke="#3c3c3c" stroke-width="0.3" stroke-linejoin="round"/>
<line x1="35.80" y1="66.90" x2="46.20" y2="66.90" stroke="#6a6a6a" stroke-width="0.7" />
<line x1="41.00" y1="61.70" x2="41.00" y2="72.10" stroke="#6a6a6a" stroke-width="0.7" />
<line x1="53.00" y1="59.90" x2="53.00" y2="73.90" stroke="#c2c2c2" stroke-width="0.9" />
<line x1="53.80" y1="59.90" x2="53.80" y2="73.90" stroke="#fcfcfc" stroke-width="0.7" />
<line x1="65.30" y1="62.50" x2="65.30" y2="71.30" stroke="#4a4a4a" stroke-width="1.0" />
<line x1="81.20" y1="67.70" x2="90.20" y2="67.70" stroke="#4a4a4a" stroke-width="1.0" />
<line x1="101.00" y1="71.30" x2="110.60" y2="63.10" stroke="#5a5a5a" stroke-width="1.0" />
<line x1="120.00" y1="70.70" x2="126.00" y2="62.10" stroke="#4f4f4f" stroke-width="0.8" />
<line x1="122.00" y1="70.70" x2="128.00" y2="62.10" stroke="#4f4f4f" stroke-width="0.8" />
<line x1="124.00" y1="70.70" x2="130.00" y2="62.10" stroke="#4f4f4f" stroke-width="0.8" />
<line x1="119.40" y1="68.70" x2="129.60" y2="63.90" stroke="#4f4f4f" stroke-width="0.7" />
<line x1="120.40" y1="70.30" x2="128.00" y2="66.70" stroke="#4f4f4f" stroke-width="0.7" />
<line x1="140.40" y1="62.30" x2="150.20" y2="62.30" stroke="#666" stroke-width="0.75" stroke-dasharray="2.4 0.5"/>
<line x1="140.40" y1="64.60" x2="150.20" y2="64.60" stroke="#666" stroke-width="0.75" stroke-dasharray="2.4 0.5"/>
<line x1="140.40" y1="66.90" x2="150.20" y2="66.90" stroke="#666" stroke-width="0.75" />
<line x1="140.40" y1="69.20" x2="147.40" y2="69.20" stroke="#666" stroke-width="0.75" />
<path d="M180.8 71.7 V62.1 H189.4" fill="none" stroke="#8a8a8a" stroke-width="0.7" stroke-dasharray="0.9 0.8"/>
<path d="M189.4 62.1 V71.7 H180.8" fill="none" stroke="#c2c2c2" stroke-width="0.6" stroke-dasharray="0.9 0.8"/>
<path d="M200.6 64.7 l3 -2.6 l1.4 3.6 Z" fill="#3a3a3a" stroke="none" stroke-width="1" />
<path d="M208.6 68.5 l-3 2.8 l-1.4 -3.8 Z" fill="#3a3a3a" stroke="none" stroke-width="1" />
<line x1="203.00" y1="65.70" x2="206.20" y2="68.30" stroke="#3a3a3a" stroke-width="0.8" />
<path d="M213.5 66.1 H217.3 L215.4 68.4 Z" fill="#111" stroke="none" stroke-width="1" />
<line x1="224.20" y1="59.90" x2="224.20" y2="73.90" stroke="#b4b4b4" stroke-width="1.3" stroke-dasharray="1 1"/>
<rect x="289.00" y="58.90" width="18.60" height="16.00" fill="#fcfcfc" stroke="#c8c8c8" stroke-width="0.7" rx="1.2"/>
<path d="M130.7 80.5 L134.5 84.3 M134.5 80.5 L130.7 84.3" fill="none" stroke="#111" stroke-width="1.25" />
<line x1="33.40" y1="91.50" x2="33.40" y2="262.80" stroke="#cfcfcf" stroke-width="0.8" stroke-dasharray="2.6 2.1"/>
<line x1="56.20" y1="91.50" x2="56.20" y2="262.80" stroke="#cfcfcf" stroke-width="0.8" stroke-dasharray="2.6 2.1"/>
<line x1="79.30" y1="91.50" x2="79.30" y2="262.80" stroke="#cfcfcf" stroke-width="0.8" stroke-dasharray="2.6 2.1"/>
<line x1="102.00" y1="91.50" x2="102.00" y2="262.80" stroke="#cfcfcf" stroke-width="0.8" stroke-dasharray="2.6 2.1"/>
<line x1="11.40" y1="103.30" x2="104.60" y2="103.30" stroke="#cfcfcf" stroke-width="0.8" stroke-dasharray="2.6 2.1"/>
<line x1="11.40" y1="126.40" x2="104.60" y2="126.40" stroke="#cfcfcf" stroke-width="0.8" stroke-dasharray="2.6 2.1"/>
<line x1="11.40" y1="149.20" x2="104.60" y2="149.20" stroke="#cfcfcf" stroke-width="0.8" stroke-dasharray="2.6 2.1"/>
<line x1="11.40" y1="171.70" x2="104.60" y2="171.70" stroke="#cfcfcf" stroke-width="0.8" stroke-dasharray="2.6 2.1"/>
<line x1="11.40" y1="194.50" x2="104.60" y2="194.50" stroke="#cfcfcf" stroke-width="0.8" stroke-dasharray="2.6 2.1"/>
<line x1="11.40" y1="217.20" x2="104.60" y2="217.20" stroke="#cfcfcf" stroke-width="0.8" stroke-dasharray="2.6 2.1"/>
<line x1="11.40" y1="240.00" x2="104.60" y2="240.00" stroke="#cfcfcf" stroke-width="0.8" stroke-dasharray="2.6 2.1"/>
<rect x="10.40" y="90.50" width="95.20" height="173.30" fill="none" stroke="#3a3a3a" stroke-width="0.9" />
<polyline points="10.9,257.9 11.8,246.1 14.8,235.7 18.3,222.4 20.7,191.4 22.5,194.4 26.6,154.5 29.6,144.2 32.5,129.4 34.9,139.7 38.5,114.1 41.4,126.5 42.9,147.1 45.0,166.3 46.7,150.1 48.2,153.0 50.3,184.1 53.8,179.6 56.2,173.7 59.2,164.3 61.5,179.6 65.1,201.8 67.5,204.7 68.9,201.8 71.9,206.2 74.6,212.1 76.3,218.0 79.3,215.1 80.5,203.2 81.4,170.8 82.2,209.2 85.8,240.2 88.8,212.1 91.7,197.3 95.3,182.6 97.6,185.5 99.1,179.6 100.6,185.5 102.7,164.9 105.0,164.3" fill="none" stroke="#ff6f6f" stroke-width="0.95" />
<line x1="105.60" y1="103.40" x2="107.20" y2="103.40" stroke="#444" stroke-width="0.8" />
<line x1="105.60" y1="126.50" x2="107.20" y2="126.50" stroke="#444" stroke-width="0.8" />
<line x1="105.60" y1="149.30" x2="107.20" y2="149.30" stroke="#444" stroke-width="0.8" />
<line x1="105.60" y1="172.20" x2="107.20" y2="172.20" stroke="#444" stroke-width="0.8" />
<line x1="105.60" y1="194.90" x2="107.20" y2="194.90" stroke="#444" stroke-width="0.8" />
<line x1="105.60" y1="217.70" x2="107.20" y2="217.70" stroke="#444" stroke-width="0.8" />
<line x1="105.60" y1="240.40" x2="107.20" y2="240.40" stroke="#444" stroke-width="0.8" />
<line x1="105.60" y1="261.20" x2="107.20" y2="261.20" stroke="#444" stroke-width="0.8" />
<line x1="8.00" y1="266.00" x2="55.50" y2="266.00" stroke="#555" stroke-width="0.8" />
<line x1="130.50" y1="266.00" x2="138.00" y2="266.00" stroke="#555" stroke-width="0.8" />
<line x1="8.50" y1="265.80" x2="8.50" y2="278.40" stroke="#aaa" stroke-width="0.7" />
<line x1="142.80" y1="78.40" x2="515.00" y2="78.40" stroke="#8c8c8c" stroke-width="1" />
<line x1="142.80" y1="78.40" x2="142.80" y2="269.60" stroke="#8c8c8c" stroke-width="1" />
<line x1="515.00" y1="78.40" x2="515.00" y2="269.60" stroke="#d8d8d8" stroke-width="1" />
<line x1="142.80" y1="269.60" x2="515.00" y2="269.60" stroke="#d8d8d8" stroke-width="1" />
<line x1="515.00" y1="102.20" x2="517.20" y2="102.20" stroke="#d8d8d8" stroke-width="1" />
<line x1="515.00" y1="125.60" x2="517.20" y2="125.60" stroke="#d8d8d8" stroke-width="1" />
<line x1="515.00" y1="149.10" x2="517.20" y2="149.10" stroke="#d8d8d8" stroke-width="1" />
<line x1="515.00" y1="172.60" x2="517.20" y2="172.60" stroke="#d8d8d8" stroke-width="1" />
<line x1="515.00" y1="196.10" x2="517.20" y2="196.10" stroke="#d8d8d8" stroke-width="1" />
<line x1="515.00" y1="219.60" x2="517.20" y2="219.60" stroke="#d8d8d8" stroke-width="1" />
<line x1="515.00" y1="243.10" x2="517.20" y2="243.10" stroke="#d8d8d8" stroke-width="1" />
<line x1="515.00" y1="266.50" x2="517.20" y2="266.50" stroke="#d8d8d8" stroke-width="1" />
<line x1="142.80" y1="163.10" x2="515.00" y2="163.10" stroke="#9aa4b0" stroke-width="1" />
<line x1="143.00" y1="269.60" x2="143.00" y2="271.80" stroke="#d8d8d8" stroke-width="1" />
<line x1="188.80" y1="269.60" x2="188.80" y2="271.80" stroke="#d8d8d8" stroke-width="1" />
<line x1="234.40" y1="269.60" x2="234.40" y2="271.80" stroke="#d8d8d8" stroke-width="1" />
<line x1="280.00" y1="269.60" x2="280.00" y2="271.80" stroke="#d8d8d8" stroke-width="1" />
<line x1="325.60" y1="269.60" x2="325.60" y2="271.80" stroke="#d8d8d8" stroke-width="1" />
<line x1="371.20" y1="269.60" x2="371.20" y2="271.80" stroke="#d8d8d8" stroke-width="1" />
<line x1="416.80" y1="269.60" x2="416.80" y2="271.80" stroke="#d8d8d8" stroke-width="1" />
<line x1="462.40" y1="269.60" x2="462.40" y2="271.80" stroke="#d8d8d8" stroke-width="1" />
<polyline points="141.5,178.6 165.0,178.3 166.0,177.6 200.0,177.4 222.0,176.8 260.0,176.4 300.0,175.6 332.0,175.4 333.0,174.9 372.0,174.6 400.0,175.0 418.0,175.6 430.0,175.3 447.0,175.0 449.0,173.8 462.0,173.7" fill="none" stroke="#d41c1c" stroke-width="0.9" />
<g clip-path="url(#c1)"><defs><clipPath id="c1"><rect x="143.3" y="78.39999999999999" width="371.2" height="191.20000000000005"/></clipPath></defs>
<line x1="143.60" y1="169.50" x2="143.60" y2="169.50" stroke="#00ff00" stroke-width="0.9" />
<line x1="143.60" y1="178.30" x2="143.60" y2="178.30" stroke="#00ff00" stroke-width="0.9" />
<rect x="135.00" y="169.50" width="17.20" height="8.80" fill="#000" stroke="#00c000" stroke-width="1" />
<line x1="166.00" y1="168.00" x2="166.00" y2="176.00" stroke="#00ff00" stroke-width="0.9" />
<rect x="157.40" y="170.60" width="17.20" height="1.60" fill="#fff" stroke="#35e035" stroke-width="0.9" />
<line x1="188.80" y1="164.00" x2="188.80" y2="167.20" stroke="#00ff00" stroke-width="0.9" />
<line x1="188.80" y1="172.80" x2="188.80" y2="172.80" stroke="#00ff00" stroke-width="0.9" />
<rect x="180.20" y="167.20" width="17.20" height="5.60" fill="#000" stroke="#00c000" stroke-width="1" />
<line x1="211.60" y1="166.60" x2="211.60" y2="169.80" stroke="#00ff00" stroke-width="0.9" />
<rect x="203.00" y="167.20" width="17.20" height="2.00" fill="#fff" stroke="#35e035" stroke-width="0.9" />
<line x1="234.40" y1="165.00" x2="234.40" y2="173.00" stroke="#00ff00" stroke-width="0.9" />
<line x1="225.80" y1="168.50" x2="243.00" y2="168.50" stroke="#00ff00" stroke-width="1.1" />
<line x1="257.20" y1="168.60" x2="257.20" y2="175.80" stroke="#00ff00" stroke-width="0.9" />
<rect x="248.60" y="169.60" width="17.20" height="5.80" fill="#fff" stroke="#35e035" stroke-width="0.9" />
<line x1="280.00" y1="170.60" x2="280.00" y2="171.90" stroke="#00ff00" stroke-width="0.9" />
<line x1="280.00" y1="175.40" x2="280.00" y2="175.80" stroke="#00ff00" stroke-width="0.9" />
<rect x="271.40" y="171.90" width="17.20" height="3.50" fill="#000" stroke="#00c000" stroke-width="1" />
<line x1="302.80" y1="168.00" x2="302.80" y2="169.60" stroke="#00ff00" stroke-width="0.9" />
<line x1="302.80" y1="172.20" x2="302.80" y2="176.00" stroke="#00ff00" stroke-width="0.9" />
<rect x="294.20" y="169.60" width="17.20" height="2.60" fill="#000" stroke="#00c000" stroke-width="1" />
<line x1="325.60" y1="166.30" x2="325.60" y2="179.30" stroke="#00ff00" stroke-width="0.9" />
<rect x="317.00" y="169.60" width="17.20" height="9.10" fill="#fff" stroke="#35e035" stroke-width="0.9" />
<line x1="348.40" y1="176.00" x2="348.40" y2="186.00" stroke="#00ff00" stroke-width="0.9" />
<rect x="339.80" y="179.30" width="17.20" height="4.30" fill="#fff" stroke="#35e035" stroke-width="0.9" />
<line x1="371.20" y1="181.00" x2="371.20" y2="187.50" stroke="#00ff00" stroke-width="0.9" />
<line x1="362.60" y1="183.40" x2="379.80" y2="183.40" stroke="#00ff00" stroke-width="1.1" />
<line x1="394.00" y1="175.00" x2="394.00" y2="180.00" stroke="#00ff00" stroke-width="0.9" />
<line x1="394.00" y1="183.30" x2="394.00" y2="183.60" stroke="#00ff00" stroke-width="0.9" />
<rect x="385.40" y="180.00" width="17.20" height="3.30" fill="#000" stroke="#00c000" stroke-width="1" />
<line x1="416.80" y1="177.70" x2="416.80" y2="183.60" stroke="#00ff00" stroke-width="0.9" />
<rect x="408.20" y="180.30" width="17.20" height="1.70" fill="#fff" stroke="#35e035" stroke-width="0.9" />
<line x1="439.60" y1="163.00" x2="439.60" y2="165.30" stroke="#00ff00" stroke-width="0.9" />
<line x1="439.60" y1="182.00" x2="439.60" y2="183.30" stroke="#00ff00" stroke-width="0.9" />
<rect x="431.00" y="165.30" width="17.20" height="16.70" fill="#000" stroke="#00c000" stroke-width="1" />
<line x1="462.40" y1="161.40" x2="462.40" y2="163.70" stroke="#00ff00" stroke-width="0.9" />
<line x1="462.40" y1="165.70" x2="462.40" y2="167.30" stroke="#00ff00" stroke-width="0.9" />
<rect x="453.80" y="163.70" width="17.20" height="2.00" fill="#000" stroke="#00c000" stroke-width="1" />
</g>
<path d="M147.0 83.6 h4.2 l-2.1 2.6 Z" fill="#fff" stroke="none" stroke-width="1" />
<circle cx="507.20" cy="85.60" r="3.70" fill="none" stroke="#e8e8e8" stroke-width="0.8" />
<circle cx="505.90" cy="84.60" r="0.55" fill="#e8e8e8" stroke="none" stroke-width="1" />
<circle cx="508.50" cy="84.60" r="0.55" fill="#e8e8e8" stroke="none" stroke-width="1" />
<path d="M505.4 87.6 q1.8 -1.9 3.6 0" fill="none" stroke="#e8e8e8" stroke-width="0.7" />
<line x1="28.60" y1="284.80" x2="28.60" y2="296.50" stroke="#c4c4c4" stroke-width="0.9" />
<line x1="110.80" y1="284.80" x2="110.80" y2="296.50" stroke="#c4c4c4" stroke-width="0.9" />
<line x1="183.40" y1="284.80" x2="183.40" y2="296.50" stroke="#c4c4c4" stroke-width="0.9" />
<line x1="231.80" y1="284.80" x2="231.80" y2="296.50" stroke="#c4c4c4" stroke-width="0.9" />
<line x1="285.40" y1="284.80" x2="285.40" y2="296.50" stroke="#c4c4c4" stroke-width="0.9" />
<line x1="334.00" y1="284.80" x2="334.00" y2="296.50" stroke="#c4c4c4" stroke-width="0.9" />
<line x1="383.50" y1="284.80" x2="383.50" y2="296.50" stroke="#c4c4c4" stroke-width="0.9" />
<line x1="430.80" y1="284.80" x2="430.80" y2="296.50" stroke="#c4c4c4" stroke-width="0.9" />
<line x1="435.60" y1="294.80" x2="435.60" y2="286.60" stroke="#3aa335" stroke-width="1.1" stroke-dasharray="0.8 0.6"/>
<line x1="435.60" y1="294.80" x2="435.60" y2="292.30" stroke="#c22a1c" stroke-width="1.1" />
<line x1="437.55" y1="294.80" x2="437.55" y2="286.60" stroke="#3aa335" stroke-width="1.1" stroke-dasharray="0.8 0.6"/>
<line x1="437.55" y1="294.80" x2="437.55" y2="291.55" stroke="#c22a1c" stroke-width="1.1" />
<line x1="439.50" y1="294.80" x2="439.50" y2="286.60" stroke="#3aa335" stroke-width="1.1" stroke-dasharray="0.8 0.6"/>
<line x1="439.50" y1="294.80" x2="439.50" y2="290.80" stroke="#c22a1c" stroke-width="1.1" />
<line x1="441.45" y1="294.80" x2="441.45" y2="286.60" stroke="#3aa335" stroke-width="1.1" stroke-dasharray="0.8 0.6"/>
<line x1="441.45" y1="294.80" x2="441.45" y2="290.05" stroke="#c22a1c" stroke-width="1.1" />
<line x1="443.40" y1="294.80" x2="443.40" y2="286.60" stroke="#3aa335" stroke-width="1.1" stroke-dasharray="0.8 0.6"/>
<line x1="443.40" y1="294.80" x2="443.40" y2="289.30" stroke="#c22a1c" stroke-width="1.1" />
<line x1="445.35" y1="294.80" x2="445.35" y2="286.60" stroke="#c9c9c9" stroke-width="1.1" stroke-dasharray="0.8 0.6"/>
<line x1="445.35" y1="294.80" x2="445.35" y2="288.55" stroke="#c22a1c" stroke-width="1.1" />
<line x1="447.30" y1="294.80" x2="447.30" y2="286.60" stroke="#c9c9c9" stroke-width="1.1" stroke-dasharray="0.8 0.6"/>
<line x1="447.30" y1="294.80" x2="447.30" y2="287.80" stroke="#c22a1c" stroke-width="1.1" />
<line x1="449.25" y1="294.80" x2="449.25" y2="286.60" stroke="#c9c9c9" stroke-width="1.1" stroke-dasharray="0.8 0.6"/>
<line x1="449.25" y1="294.80" x2="449.25" y2="287.05" stroke="#c22a1c" stroke-width="1.1" />
<line x1="451.20" y1="294.80" x2="451.20" y2="286.60" stroke="#c9c9c9" stroke-width="1.1" stroke-dasharray="0.8 0.6"/>
<line x1="451.20" y1="294.80" x2="451.20" y2="286.30" stroke="#c22a1c" stroke-width="1.1" />
<line x1="545.00" y1="297.50" x2="546.50" y2="296.00" stroke="#b0b0b0" stroke-width="0.9" />
<line x1="542.40" y1="297.50" x2="546.50" y2="293.40" stroke="#b0b0b0" stroke-width="0.9" />
<line x1="539.80" y1="297.50" x2="546.50" y2="290.80" stroke="#b0b0b0" stroke-width="0.9" />
<g clip-path="url(#tt2)"><defs><clipPath id="tt2"><rect x="552.5" y="3" width="640.5" height="19.4" rx="3"/></clipPath></defs>
<ellipse cx="656.0" cy="12.5" rx="120" ry="6" fill="#aaa" opacity="0.8" filter="url(#blur3)"/>
<ellipse cx="586.0" cy="12.5" rx="30" ry="6" fill="#ccc" opacity="0.6" filter="url(#blur3)"/>
<ellipse cx="1052" cy="17.5" rx="9" ry="7" fill="#d8cc3a" opacity="0.75" filter="url(#blur3)"/>
<ellipse cx="1106.5" cy="17" rx="9" ry="8" fill="#d8cc3a" opacity="0.7" filter="url(#blur3)"/>
<ellipse cx="1165.5" cy="13" rx="11" ry="11" fill="#eef6ff" opacity="0.95" filter="url(#blur3)"/>
</g>
<rect x="1122.80" y="10.10" width="7.00" height="2.00" fill="#fff" stroke="#3a3a3a" stroke-width="0.4" />
<rect x="1143.70" y="6.90" width="6.00" height="4.70" fill="none" stroke="#fff" stroke-width="1.4" />
<rect x="1142.80" y="6.00" width="7.80" height="6.50" fill="none" stroke="#333" stroke-width="0.35" />
<path d="M1170.6 6.9 L1176.4 12.1 M1176.4 6.9 L1170.6 12.1" fill="none" stroke="#3a3a3a" stroke-width="2.7" />
<path d="M1170.6 6.9 L1176.4 12.1 M1176.4 6.9 L1170.6 12.1" fill="none" stroke="#fff" stroke-width="1.7" />
<rect x="557.4" y="7.8" width="10.0" height="10.0" rx="1.8" fill="#f3efe9" stroke="#fff" stroke-width="0.6"/>
<polyline points="558.8,13.8 560.0,11.4 561.2,12.8 562.4,10.5 563.6,12.6 564.8,11.2 566.0,13.6" fill="none" stroke="#f08f86" stroke-width="1.5" />
<polyline points="558.8,15.3 560.0,12.9 561.2,14.3 562.4,12.0 563.6,14.1 564.8,12.7 566.0,15.1" fill="none" stroke="#efcf8c" stroke-width="1.5" />
<polyline points="558.8,16.7 560.0,14.3 561.2,15.7 562.4,13.4 563.6,15.5 564.8,14.1 566.0,16.5" fill="none" stroke="#b4dc9c" stroke-width="1.5" />
<rect x="560.50" y="24.80" width="7.20" height="6.00" fill="#fff" stroke="#7aa6e6" stroke-width="0.7" rx="0.8"/>
<line x1="560.50" y1="26.00" x2="567.70" y2="26.00" stroke="#7aa6e6" stroke-width="1.6" />
<rect x="563.30" y="29.00" width="7.20" height="6.00" fill="#fff" stroke="#7aa6e6" stroke-width="0.7" rx="0.8"/>
<line x1="563.30" y1="30.20" x2="570.50" y2="30.20" stroke="#7aa6e6" stroke-width="1.6" />
<line x1="564.70" y1="32.80" x2="569.10" y2="32.80" stroke="#a9c4ec" stroke-width="0.7" />
<path d="M1180.1 28.0 L1184.5 32.4 M1184.5 28.0 L1180.1 32.4" fill="none" stroke="#8a939e" stroke-width="1.2" />
<rect x="1165.65" y="29.60" width="3.80" height="3.40" fill="none" stroke="#8a939e" stroke-width="0.9" />
<path d="M1167.0 29.4 V27.6 H1171.0 V31.2 H1169.7" fill="none" stroke="#8a939e" stroke-width="0.9" />
<line x1="1152.00" y1="32.50" x2="1155.80" y2="32.50" stroke="#8a939e" stroke-width="1.3" />
<line x1="558.30" y1="41.10" x2="558.30" y2="55.10" stroke="#b4b4b4" stroke-width="1.3" stroke-dasharray="1 1"/>
<rect x="565.20" y="42.30" width="9.20" height="7.60" fill="#eef4fd" stroke="#4b82d4" stroke-width="0.8" rx="0.8"/>
<line x1="565.20" y1="43.15" x2="574.40" y2="43.15" stroke="#4b82d4" stroke-width="0.9" />
<line x1="566.40" y1="44.50" x2="566.40" y2="48.70" stroke="#8fb0e0" stroke-width="0.6" />
<line x1="566.40" y1="47.50" x2="573.20" y2="47.50" stroke="#8fb0e0" stroke-width="0.6" />
<path d="M569.4 47.8 H572.2 V44.9 H575.0 V47.8 H577.8 V50.5 H575.0 V53.3 H572.2 V50.5 H569.4 Z" fill="#22b322" stroke="#138a13" stroke-width="0.5" />
<path d="M580.4 47.3 H584.2 L582.3 49.6 Z" fill="#111" stroke="none" stroke-width="1" />
<rect x="591.60" y="42.30" width="10.00" height="7.80" fill="#e6eefb" stroke="#4b82d4" stroke-width="0.8" rx="0.8"/>
<line x1="591.60" y1="43.15" x2="601.60" y2="43.15" stroke="#4b82d4" stroke-width="0.9" />
<line x1="592.80" y1="45.90" x2="600.40" y2="45.90" stroke="#8fb0e0" stroke-width="0.6" />
<rect x="594.20" y="46.10" width="10.00" height="7.60" fill="#f2f6fd" stroke="#4b82d4" stroke-width="0.8" rx="0.8"/>
<line x1="594.20" y1="46.95" x2="604.20" y2="46.95" stroke="#4b82d4" stroke-width="0.9" />
<line x1="595.40" y1="50.50" x2="603.00" y2="50.50" stroke="#8fb0e0" stroke-width="0.6" />
<path d="M607.1 47.3 H610.9 L609.0 49.6 Z" fill="#111" stroke="none" stroke-width="1" />
<line x1="616.80" y1="41.10" x2="616.80" y2="55.10" stroke="#c2c2c2" stroke-width="0.9" />
<line x1="617.60" y1="41.10" x2="617.60" y2="55.10" stroke="#fcfcfc" stroke-width="0.7" />
<rect x="620.30" y="40.35" width="18.00" height="15.50" fill="#fbfbfb" stroke="#d0d0d0" stroke-width="0.7" rx="1.2"/>
<rect x="623.60" y="43.10" width="10.60" height="10.00" fill="#fff" stroke="#4c8ad8" stroke-width="1.0" rx="1"/>
<path d="M625.4 46.5 l2.2 -2.2 l2.4 2.2 l-2.2 2.2 Z" fill="#2fb52f" stroke="#157a15" stroke-width="0.4" />
<path d="M628.2 49.5 l2.2 -2.2 l2.4 2.2 l-2.2 2.2 Z" fill="#f4a79a" stroke="#d8402e" stroke-width="0.6" />
<line x1="643.80" y1="48.10" x2="654.20" y2="48.10" stroke="#5a5a5a" stroke-width="0.8" />
<line x1="649.00" y1="42.90" x2="649.00" y2="53.30" stroke="#5a5a5a" stroke-width="0.8" />
<path d="M643.6 48.1 L649.0 42.7 L654.4 48.1 L649.0 53.5 Z" fill="none" stroke="#5a5a5a" stroke-width="0.9" />
<circle cx="649.00" cy="48.10" r="2.00" fill="#f3f3f3" stroke="#5a5a5a" stroke-width="0.6" />
<path d="M662.5 43.5 h5.5 l1 1.4 h3 v4 h-9.5 Z" fill="#f3d36a" stroke="#c79a2a" stroke-width="0.6" />
<line x1="665.00" y1="48.90" x2="665.00" y2="53.50" stroke="#b28a2a" stroke-width="0.9" />
<path d="M671.1 45.9 L672.2 48.8 L675.3 48.9 L672.9 50.9 L673.7 53.9 L671.1 52.2 L668.5 53.9 L669.3 50.9 L666.9 48.9 L670.0 48.8 Z" fill="#f6c21c" stroke="#c98f12" stroke-width="0.5" />
<rect x="683.00" y="43.50" width="11.60" height="9.40" fill="#f1f6fd" stroke="#2a5fb0" stroke-width="1.1" rx="1"/>
<rect x="683.60" y="44.10" width="2.80" height="8.20" fill="#2f68bd" stroke="none" stroke-width="1" />
<line x1="688.00" y1="46.10" x2="693.00" y2="46.10" stroke="#e9a3a3" stroke-width="0.7" />
<rect x="703.00" y="42.90" width="8.60" height="8.80" fill="#eef4fc" stroke="#6b93c9" stroke-width="0.9" rx="0.8"/>
<path d="M705.0 46.6 l1.5 -2 l1.6 2.4 l1.8 -2.6" fill="none" stroke="#4c79b8" stroke-width="0.7" />
<circle cx="710.00" cy="49.30" r="3.10" fill="#dbe9f9" stroke="#4c79b8" stroke-width="0.9" />
<line x1="712.20" y1="51.70" x2="715.00" y2="54.30" stroke="#d2a21e" stroke-width="1.7" />
<line x1="721.30" y1="41.10" x2="721.30" y2="55.10" stroke="#c2c2c2" stroke-width="0.9" />
<line x1="722.10" y1="41.10" x2="722.10" y2="55.10" stroke="#fcfcfc" stroke-width="0.7" />
<path d="M728.0 42.7 h6 l2.4 2.4 v7.6 h-8.4 Z" fill="#fdfdfd" stroke="#6f6f6f" stroke-width="0.7" />
<line x1="729.60" y1="45.50" x2="734.00" y2="45.50" stroke="#9a9a9a" stroke-width="0.6" />
<line x1="729.60" y1="47.30" x2="734.00" y2="47.30" stroke="#9a9a9a" stroke-width="0.6" />
<path d="M731.8 49.4 H734.6 V46.5 H737.4 V49.4 H740.2 V52.1 H737.4 V54.9 H734.6 V52.1 H731.8 Z" fill="#22b322" stroke="#138a13" stroke-width="0.5" />
<path d="M808.5 42.3 L814.3 48.1 L808.5 53.9 L802.7 48.1 Z" fill="#f6c62a" stroke="#b98a12" stroke-width="0.7" />
<path d="M808.5 44.9 L811.7 48.1 L808.5 51.3 L805.3 48.1 Z" fill="#fbe7a0" stroke="#c8951a" stroke-width="0.4" />
<line x1="808.50" y1="46.10" x2="808.50" y2="48.90" stroke="#7a5a10" stroke-width="0.9" />
<circle cx="808.50" cy="50.10" r="0.55" fill="#7a5a10" stroke="none" stroke-width="1" />
<rect x="821.00" y="40.10" width="62.40" height="16.00" fill="#f7f7f7" stroke="#c6c6c6" stroke-width="0.7" rx="1.2"/>
<path d="M825.0 48.6 q5 -9 10.4 0 Z" fill="#5d9be0" stroke="#2f6bb8" stroke-width="0.6" />
<path d="M824.0 48.6 h12.4 v1.4 h-12.4 Z" fill="#3f7fcf" stroke="none" stroke-width="1" />
<path d="M826.0 50.1 h8 l-1 3.8 h-6 Z" fill="#f2d9a8" stroke="#b99552" stroke-width="0.4" />
<circle cx="833.80" cy="51.70" r="2.90" fill="#24b324" stroke="#128012" stroke-width="0.5" />
<path d="M832.8 50.3 l2.4 1.4 l-2.4 1.4 Z" fill="#fff" stroke="none" stroke-width="1" />
<line x1="888.20" y1="41.10" x2="888.20" y2="55.10" stroke="#b4b4b4" stroke-width="1.3" stroke-dasharray="1 1"/>
<line x1="897.30" y1="42.70" x2="897.30" y2="53.50" stroke="#4a4a4a" stroke-width="0.9" />
<line x1="895.50" y1="51.50" x2="906.10" y2="51.50" stroke="#4a4a4a" stroke-width="0.9" />
<path d="M899.5 43.6 v6.5 M898.3 47.9 h1.2 M899.5 45.1 h1.2 M903.1 42.6 v5.5 M901.9 46.1 h1.2 M903.1 43.9 h1.2" fill="none" stroke="#1fa31f" stroke-width="1.0" />
<rect x="911.20" y="40.35" width="17.80" height="15.50" fill="#fbfbfb" stroke="#d0d0d0" stroke-width="0.7" rx="1.2"/>
<line x1="916.30" y1="42.70" x2="916.30" y2="53.50" stroke="#4a4a4a" stroke-width="0.9" />
<line x1="914.50" y1="51.50" x2="925.10" y2="51.50" stroke="#4a4a4a" stroke-width="0.9" />
<line x1="920.50" y1="41.90" x2="920.50" y2="50.70" stroke="#117a11" stroke-width="0.8" />
<rect x="918.80" y="43.70" width="3.40" height="5.60" fill="#2fc22f" stroke="#117a11" stroke-width="0.6" />
<line x1="935.30" y1="42.70" x2="935.30" y2="53.50" stroke="#4a4a4a" stroke-width="0.9" />
<line x1="933.50" y1="51.50" x2="944.10" y2="51.50" stroke="#4a4a4a" stroke-width="0.9" />
<path d="M935.5 49.7 l2 -5 q3.4 0.4 5.6 4.6" fill="none" stroke="#1fa31f" stroke-width="1.0" />
<line x1="952.30" y1="41.10" x2="952.30" y2="55.10" stroke="#c2c2c2" stroke-width="0.9" />
<line x1="953.10" y1="41.10" x2="953.10" y2="55.10" stroke="#fcfcfc" stroke-width="0.7" />
<line x1="966.20" y1="49.90" x2="970.20" y2="54.30" stroke="#b9b9b9" stroke-width="2.0" stroke-linecap="round"/>
<circle cx="963.60" cy="47.10" r="4.00" fill="#e3e3e3" stroke="#a9a9a9" stroke-width="1.1" />
<line x1="961.60" y1="47.10" x2="965.60" y2="47.10" stroke="#a9a9a9" stroke-width="1.0" />
<line x1="963.60" y1="45.10" x2="963.60" y2="49.10" stroke="#a9a9a9" stroke-width="1.0" />
<line x1="986.40" y1="49.90" x2="990.40" y2="54.30" stroke="#d5a621" stroke-width="2.0" stroke-linecap="round"/>
<circle cx="983.80" cy="47.10" r="4.00" fill="#d9e9fb" stroke="#3b7fd2" stroke-width="1.1" />
<line x1="981.80" y1="47.10" x2="985.80" y2="47.10" stroke="#3b7fd2" stroke-width="1.0" />
<line x1="997.20" y1="41.10" x2="997.20" y2="55.10" stroke="#c2c2c2" stroke-width="0.9" />
<line x1="998.00" y1="41.10" x2="998.00" y2="55.10" stroke="#fcfcfc" stroke-width="0.7" />
<rect x="1000.30" y="40.35" width="17.30" height="15.50" fill="#fbfbfb" stroke="#d0d0d0" stroke-width="0.7" rx="1.2"/>
<line x1="1005.30" y1="42.70" x2="1005.30" y2="53.50" stroke="#4a4a4a" stroke-width="0.9" />
<line x1="1003.50" y1="51.50" x2="1014.10" y2="51.50" stroke="#4a4a4a" stroke-width="0.9" />
<path d="M1008.5 44.5 l3.8 2.4 l-3.8 2.4 Z" fill="#1fa31f" stroke="none" stroke-width="1" />
<line x1="1025.00" y1="42.70" x2="1025.00" y2="53.50" stroke="#4a4a4a" stroke-width="0.9" />
<line x1="1023.20" y1="51.50" x2="1033.80" y2="51.50" stroke="#4a4a4a" stroke-width="0.9" />
<line x1="1029.70" y1="42.30" x2="1029.70" y2="51.50" stroke="#4a4a4a" stroke-width="0.9" />
<path d="M1034.6 45.1 l-3.2 1.8 l3.2 1.8 Z" fill="#e0342a" stroke="none" stroke-width="1" />
<line x1="1041.30" y1="41.10" x2="1041.30" y2="55.10" stroke="#c2c2c2" stroke-width="0.9" />
<line x1="1042.10" y1="41.10" x2="1042.10" y2="55.10" stroke="#fcfcfc" stroke-width="0.7" />
<path d="M1047.2 42.5 h5.6 l2.4 2.4 v7.2 h-8 Z" fill="#fdfdfd" stroke="#6f6f6f" stroke-width="0.7" />
<path d="M1051.6 49.4 H1054.5 V46.5 H1057.1 V49.4 H1060.0 V52.1 H1057.1 V54.9 H1054.5 V52.1 H1051.6 Z" fill="#22b322" stroke="#138a13" stroke-width="0.5" />
<path d="M1062.3 47.3 H1066.1 L1064.2 49.6 Z" fill="#111" stroke="none" stroke-width="1" />
<circle cx="1079.20" cy="48.10" r="5.60" fill="#2f78d2" stroke="#1d56a8" stroke-width="0.8" />
<circle cx="1079.20" cy="48.10" r="3.80" fill="#f4f8fd" stroke="none" stroke-width="1" />
<path d="M1079.2 45.5 V48.1 H1081.2" fill="none" stroke="#333" stroke-width="0.8" />
<path d="M1089.3 47.3 H1093.1 L1091.2 49.6 Z" fill="#111" stroke="none" stroke-width="1" />
<rect x="1099.60" y="43.10" width="12.00" height="9.60" fill="#f2f7fd" stroke="#3b78c9" stroke-width="1.0" rx="1"/>
<line x1="1099.60" y1="44.20" x2="1111.60" y2="44.20" stroke="#3b78c9" stroke-width="1.6" />
<path d="M1101.2 48.1 l3 -1.6 l2.6 0.8 l3.2 -1.8" fill="none" stroke="#d88a3a" stroke-width="0.9" />
<path d="M1101.2 51.1 l3 -1.2 l2.6 1 l3.2 -1.2" fill="none" stroke="#3aa33a" stroke-width="0.9" />
<path d="M1115.9 47.3 H1119.7 L1117.8 49.6 Z" fill="#111" stroke="none" stroke-width="1" />
<line x1="558.30" y1="59.90" x2="558.30" y2="73.90" stroke="#b4b4b4" stroke-width="1.3" stroke-dasharray="1 1"/>
<rect x="563.30" y="58.90" width="17.30" height="16.00" fill="#fcfcfc" stroke="#d4d4d4" stroke-width="0.7" rx="1.2"/>
<path d="M569.40 62.30 L569.40 70.56 L571.29 68.84 L572.67 71.76 L573.87 71.24 L572.58 68.32 L575.08 68.15 Z" fill="#3c3c3c" stroke="#3c3c3c" stroke-width="0.3" stroke-linejoin="round"/>
<line x1="586.80" y1="66.90" x2="597.20" y2="66.90" stroke="#6a6a6a" stroke-width="0.7" />
<line x1="592.00" y1="61.70" x2="592.00" y2="72.10" stroke="#6a6a6a" stroke-width="0.7" />
<line x1="604.00" y1="59.90" x2="604.00" y2="73.90" stroke="#c2c2c2" stroke-width="0.9" />
<line x1="604.80" y1="59.90" x2="604.80" y2="73.90" stroke="#fcfcfc" stroke-width="0.7" />
<line x1="616.30" y1="62.50" x2="616.30" y2="71.30" stroke="#4a4a4a" stroke-width="1.0" />
<line x1="632.20" y1="67.70" x2="641.20" y2="67.70" stroke="#4a4a4a" stroke-width="1.0" />
<line x1="652.00" y1="71.30" x2="661.60" y2="63.10" stroke="#5a5a5a" stroke-width="1.0" />
<line x1="671.00" y1="70.70" x2="677.00" y2="62.10" stroke="#4f4f4f" stroke-width="0.8" />
<line x1="673.00" y1="70.70" x2="679.00" y2="62.10" stroke="#4f4f4f" stroke-width="0.8" />
<line x1="675.00" y1="70.70" x2="681.00" y2="62.10" stroke="#4f4f4f" stroke-width="0.8" />
<line x1="670.40" y1="68.70" x2="680.60" y2="63.90" stroke="#4f4f4f" stroke-width="0.7" />
<line x1="671.40" y1="70.30" x2="679.00" y2="66.70" stroke="#4f4f4f" stroke-width="0.7" />
<line x1="691.40" y1="62.30" x2="701.20" y2="62.30" stroke="#666" stroke-width="0.75" stroke-dasharray="2.4 0.5"/>
<line x1="691.40" y1="64.60" x2="701.20" y2="64.60" stroke="#666" stroke-width="0.75" stroke-dasharray="2.4 0.5"/>
<line x1="691.40" y1="66.90" x2="701.20" y2="66.90" stroke="#666" stroke-width="0.75" />
<line x1="691.40" y1="69.20" x2="698.40" y2="69.20" stroke="#666" stroke-width="0.75" />
<path d="M731.8 71.7 V62.1 H740.4" fill="none" stroke="#8a8a8a" stroke-width="0.7" stroke-dasharray="0.9 0.8"/>
<path d="M740.4 62.1 V71.7 H731.8" fill="none" stroke="#c2c2c2" stroke-width="0.6" stroke-dasharray="0.9 0.8"/>
<path d="M751.6 64.7 l3 -2.6 l1.4 3.6 Z" fill="#3a3a3a" stroke="none" stroke-width="1" />
<path d="M759.6 68.5 l-3 2.8 l-1.4 -3.8 Z" fill="#3a3a3a" stroke="none" stroke-width="1" />
<line x1="754.00" y1="65.70" x2="757.20" y2="68.30" stroke="#3a3a3a" stroke-width="0.8" />
<path d="M764.5 66.1 H768.3 L766.4 68.4 Z" fill="#111" stroke="none" stroke-width="1" />
<line x1="775.20" y1="59.90" x2="775.20" y2="73.90" stroke="#b4b4b4" stroke-width="1.3" stroke-dasharray="1 1"/>
<rect x="840.00" y="58.90" width="18.60" height="16.00" fill="#fcfcfc" stroke="#c8c8c8" stroke-width="0.7" rx="1.2"/>
<path d="M1173.2 42.6 h11 v8 h-6 l-2.2 2.6 v-2.6 h-2.8 Z" fill="#4a6da7" stroke="#3a5a90" stroke-width="0.4" />
<path d="M681.7 80.5 L685.5 84.3 M685.5 80.5 L681.7 84.3" fill="none" stroke="#111" stroke-width="1.25" />
<line x1="584.40" y1="91.50" x2="584.40" y2="262.80" stroke="#cfcfcf" stroke-width="0.8" stroke-dasharray="2.6 2.1"/>
<line x1="607.20" y1="91.50" x2="607.20" y2="262.80" stroke="#cfcfcf" stroke-width="0.8" stroke-dasharray="2.6 2.1"/>
<line x1="630.30" y1="91.50" x2="630.30" y2="262.80" stroke="#cfcfcf" stroke-width="0.8" stroke-dasharray="2.6 2.1"/>
<line x1="653.00" y1="91.50" x2="653.00" y2="262.80" stroke="#cfcfcf" stroke-width="0.8" stroke-dasharray="2.6 2.1"/>
<line x1="562.40" y1="104.28" x2="655.60" y2="104.28" stroke="#cfcfcf" stroke-width="0.8" stroke-dasharray="2.6 2.1"/>
<line x1="562.40" y1="127.38" x2="655.60" y2="127.38" stroke="#cfcfcf" stroke-width="0.8" stroke-dasharray="2.6 2.1"/>
<line x1="562.40" y1="150.18" x2="655.60" y2="150.18" stroke="#cfcfcf" stroke-width="0.8" stroke-dasharray="2.6 2.1"/>
<line x1="562.40" y1="172.68" x2="655.60" y2="172.68" stroke="#cfcfcf" stroke-width="0.8" stroke-dasharray="2.6 2.1"/>
<line x1="562.40" y1="195.48" x2="655.60" y2="195.48" stroke="#cfcfcf" stroke-width="0.8" stroke-dasharray="2.6 2.1"/>
<line x1="562.40" y1="218.18" x2="655.60" y2="218.18" stroke="#cfcfcf" stroke-width="0.8" stroke-dasharray="2.6 2.1"/>
<line x1="562.40" y1="240.98" x2="655.60" y2="240.98" stroke="#cfcfcf" stroke-width="0.8" stroke-dasharray="2.6 2.1"/>
<rect x="561.40" y="90.50" width="95.20" height="173.30" fill="none" stroke="#3a3a3a" stroke-width="0.9" />
<polyline points="561.9,257.9 562.8,246.1 565.8,235.7 569.3,222.4 571.7,191.4 573.5,194.4 577.6,154.5 580.6,144.2 583.5,129.4 585.9,139.7 589.5,114.1 592.4,126.5 593.9,147.1 596.0,166.3 597.7,150.1 599.2,153.0 601.3,184.1 604.8,179.6 607.2,173.7 610.2,164.3 612.5,179.6 616.1,201.8 618.5,204.7 619.9,201.8 622.9,206.2 625.6,212.1 627.3,218.0 630.3,215.1 631.5,203.2 632.4,170.8 633.2,209.2 636.8,240.2 639.8,212.1 642.7,197.3 646.3,182.6 648.6,185.5 650.1,179.6 651.6,185.5 653.7,164.9 656.0,164.3" fill="none" stroke="#ff6f6f" stroke-width="0.95" />
<line x1="656.60" y1="104.45" x2="658.20" y2="104.45" stroke="#444" stroke-width="0.8" />
<line x1="656.60" y1="127.55" x2="658.20" y2="127.55" stroke="#444" stroke-width="0.8" />
<line x1="656.60" y1="150.35" x2="658.20" y2="150.35" stroke="#444" stroke-width="0.8" />
<line x1="656.60" y1="173.25" x2="658.20" y2="173.25" stroke="#444" stroke-width="0.8" />
<line x1="656.60" y1="195.95" x2="658.20" y2="195.95" stroke="#444" stroke-width="0.8" />
<line x1="656.60" y1="218.75" x2="658.20" y2="218.75" stroke="#444" stroke-width="0.8" />
<line x1="656.60" y1="241.45" x2="658.20" y2="241.45" stroke="#444" stroke-width="0.8" />
<line x1="656.60" y1="262.25" x2="658.20" y2="262.25" stroke="#444" stroke-width="0.8" />
<line x1="559.00" y1="266.42" x2="606.50" y2="266.42" stroke="#555" stroke-width="0.8" />
<line x1="681.50" y1="266.42" x2="689.00" y2="266.42" stroke="#555" stroke-width="0.8" />
<line x1="559.50" y1="266.22" x2="559.50" y2="278.96" stroke="#aaa" stroke-width="0.7" />
<line x1="693.80" y1="78.40" x2="1157.80" y2="78.40" stroke="#8c8c8c" stroke-width="1" />
<line x1="693.80" y1="78.40" x2="693.80" y2="270.60" stroke="#8c8c8c" stroke-width="1" />
<line x1="1157.80" y1="78.40" x2="1157.80" y2="270.60" stroke="#d8d8d8" stroke-width="1" />
<line x1="693.80" y1="270.60" x2="1157.80" y2="270.60" stroke="#d8d8d8" stroke-width="1" />
<line x1="1157.80" y1="103.40" x2="1160.00" y2="103.40" stroke="#d8d8d8" stroke-width="1" />
<line x1="1157.80" y1="127.00" x2="1160.00" y2="127.00" stroke="#d8d8d8" stroke-width="1" />
<line x1="1157.80" y1="150.50" x2="1160.00" y2="150.50" stroke="#d8d8d8" stroke-width="1" />
<line x1="1157.80" y1="174.00" x2="1160.00" y2="174.00" stroke="#d8d8d8" stroke-width="1" />
<line x1="1157.80" y1="197.60" x2="1160.00" y2="197.60" stroke="#d8d8d8" stroke-width="1" />
<line x1="1157.80" y1="221.20" x2="1160.00" y2="221.20" stroke="#d8d8d8" stroke-width="1" />
<line x1="1157.80" y1="244.80" x2="1160.00" y2="244.80" stroke="#d8d8d8" stroke-width="1" />
<line x1="1157.80" y1="268.20" x2="1160.00" y2="268.20" stroke="#d8d8d8" stroke-width="1" />
<line x1="693.80" y1="162.70" x2="1157.80" y2="162.70" stroke="#9aa4b0" stroke-width="1" />
<line x1="694.00" y1="270.60" x2="694.00" y2="272.80" stroke="#d8d8d8" stroke-width="1" />
<line x1="739.60" y1="270.60" x2="739.60" y2="272.80" stroke="#d8d8d8" stroke-width="1" />
<line x1="785.20" y1="270.60" x2="785.20" y2="272.80" stroke="#d8d8d8" stroke-width="1" />
<line x1="830.90" y1="270.60" x2="830.90" y2="272.80" stroke="#d8d8d8" stroke-width="1" />
<line x1="876.60" y1="270.60" x2="876.60" y2="272.80" stroke="#d8d8d8" stroke-width="1" />
<line x1="922.30" y1="270.60" x2="922.30" y2="272.80" stroke="#d8d8d8" stroke-width="1" />
<line x1="968.00" y1="270.60" x2="968.00" y2="272.80" stroke="#d8d8d8" stroke-width="1" />
<line x1="1013.60" y1="270.60" x2="1013.60" y2="272.80" stroke="#d8d8d8" stroke-width="1" />
<line x1="1059.30" y1="270.60" x2="1059.30" y2="272.80" stroke="#d8d8d8" stroke-width="1" />
<line x1="1105.00" y1="270.60" x2="1105.00" y2="272.80" stroke="#d8d8d8" stroke-width="1" />
<polyline points="693.0,176.7 706.0,176.8 707.0,177.7 750.0,177.9 752.0,178.7 790.0,178.6 815.0,178.0 819.0,177.6 860.0,176.9 864.0,176.6 900.0,176.5 931.0,175.2 975.0,174.9 1000.0,174.6 1071.0,174.5 1074.0,173.2 1104.8,173.1" fill="none" stroke="#d41c1c" stroke-width="0.9" />
<g clip-path="url(#c2)"><defs><clipPath id="c2"><rect x="694.3" y="78.39999999999999" width="463.0" height="192.20000000000005"/></clipPath></defs>
<line x1="692.00" y1="180.30" x2="692.00" y2="184.90" stroke="#00ff00" stroke-width="0.9" />
<rect x="683.40" y="180.30" width="17.20" height="4.60" fill="#fff" stroke="#35e035" stroke-width="0.9" />
<line x1="716.80" y1="183.00" x2="716.80" y2="183.30" stroke="#00ff00" stroke-width="0.9" />
<line x1="716.80" y1="184.90" x2="716.80" y2="190.70" stroke="#00ff00" stroke-width="0.9" />
<rect x="708.20" y="183.30" width="17.20" height="1.60" fill="#000" stroke="#00c000" stroke-width="1" />
<line x1="739.60" y1="172.20" x2="739.60" y2="174.50" stroke="#00ff00" stroke-width="0.9" />
<line x1="739.60" y1="183.60" x2="739.60" y2="184.20" stroke="#00ff00" stroke-width="0.9" />
<rect x="731.00" y="174.50" width="17.20" height="9.10" fill="#000" stroke="#00c000" stroke-width="1" />
<line x1="762.40" y1="173.00" x2="762.40" y2="179.40" stroke="#00ff00" stroke-width="0.9" />
<rect x="753.80" y="173.80" width="17.20" height="3.90" fill="#fff" stroke="#35e035" stroke-width="0.9" />
<line x1="785.20" y1="168.00" x2="785.20" y2="170.60" stroke="#00ff00" stroke-width="0.9" />
<line x1="785.20" y1="177.40" x2="785.20" y2="177.80" stroke="#00ff00" stroke-width="0.9" />
<rect x="776.60" y="170.60" width="17.20" height="6.80" fill="#000" stroke="#00c000" stroke-width="1" />
<line x1="808.00" y1="168.00" x2="808.00" y2="175.40" stroke="#00ff00" stroke-width="0.9" />
<rect x="799.40" y="170.60" width="17.20" height="1.90" fill="#fff" stroke="#35e035" stroke-width="0.9" />
<line x1="830.80" y1="163.70" x2="830.80" y2="167.00" stroke="#00ff00" stroke-width="0.9" />
<line x1="830.80" y1="172.50" x2="830.80" y2="172.80" stroke="#00ff00" stroke-width="0.9" />
<rect x="822.20" y="167.00" width="17.20" height="5.50" fill="#000" stroke="#00c000" stroke-width="1" />
<line x1="853.60" y1="165.70" x2="853.60" y2="170.00" stroke="#00ff00" stroke-width="0.9" />
<rect x="845.00" y="167.00" width="17.20" height="2.30" fill="#fff" stroke="#35e035" stroke-width="0.9" />
<line x1="876.50" y1="165.30" x2="876.50" y2="171.90" stroke="#00ff00" stroke-width="0.9" />
<line x1="867.90" y1="168.80" x2="885.10" y2="168.80" stroke="#00ff00" stroke-width="1.1" />
<line x1="899.40" y1="168.00" x2="899.40" y2="175.40" stroke="#00ff00" stroke-width="0.9" />
<rect x="890.80" y="169.00" width="17.20" height="5.80" fill="#fff" stroke="#35e035" stroke-width="0.9" />
<line x1="922.20" y1="170.20" x2="922.20" y2="171.20" stroke="#00ff00" stroke-width="0.9" />
<line x1="922.20" y1="174.50" x2="922.20" y2="175.00" stroke="#00ff00" stroke-width="0.9" />
<rect x="913.60" y="171.20" width="17.20" height="3.30" fill="#000" stroke="#00c000" stroke-width="1" />
<line x1="945.00" y1="168.00" x2="945.00" y2="169.60" stroke="#00ff00" stroke-width="0.9" />
<line x1="945.00" y1="172.20" x2="945.00" y2="175.40" stroke="#00ff00" stroke-width="0.9" />
<rect x="936.40" y="169.60" width="17.20" height="2.60" fill="#000" stroke="#00c000" stroke-width="1" />
<line x1="967.90" y1="166.30" x2="967.90" y2="179.80" stroke="#00ff00" stroke-width="0.9" />
<rect x="959.30" y="169.60" width="17.20" height="9.70" fill="#fff" stroke="#35e035" stroke-width="0.9" />
<line x1="990.70" y1="176.70" x2="990.70" y2="185.90" stroke="#00ff00" stroke-width="0.9" />
<rect x="982.10" y="179.30" width="17.20" height="4.00" fill="#fff" stroke="#35e035" stroke-width="0.9" />
<line x1="1013.50" y1="181.00" x2="1013.50" y2="187.50" stroke="#00ff00" stroke-width="0.9" />
<line x1="1004.90" y1="183.00" x2="1022.10" y2="183.00" stroke="#00ff00" stroke-width="1.1" />
<line x1="1036.30" y1="174.50" x2="1036.30" y2="180.00" stroke="#00ff00" stroke-width="0.9" />
<line x1="1036.30" y1="183.60" x2="1036.30" y2="184.00" stroke="#00ff00" stroke-width="0.9" />
<rect x="1027.70" y="180.00" width="17.20" height="3.60" fill="#000" stroke="#00c000" stroke-width="1" />
<line x1="1059.10" y1="177.70" x2="1059.10" y2="183.60" stroke="#00ff00" stroke-width="0.9" />
<rect x="1050.50" y="179.70" width="17.20" height="2.30" fill="#fff" stroke="#35e035" stroke-width="0.9" />
<line x1="1082.00" y1="162.10" x2="1082.00" y2="164.70" stroke="#00ff00" stroke-width="0.9" />
<line x1="1082.00" y1="182.00" x2="1082.00" y2="183.00" stroke="#00ff00" stroke-width="0.9" />
<rect x="1073.40" y="164.70" width="17.20" height="17.30" fill="#000" stroke="#00c000" stroke-width="1" />
<line x1="1104.90" y1="160.80" x2="1104.90" y2="162.40" stroke="#00ff00" stroke-width="0.9" />
<line x1="1104.90" y1="164.70" x2="1104.90" y2="166.30" stroke="#00ff00" stroke-width="0.9" />
<rect x="1096.30" y="162.40" width="17.20" height="2.30" fill="#000" stroke="#00c000" stroke-width="1" />
</g>
<path d="M698.0 84.2 h4.2 l-2.1 2.6 Z" fill="#fff" stroke="none" stroke-width="1" />
<circle cx="1149.60" cy="86.20" r="3.70" fill="none" stroke="#e8e8e8" stroke-width="0.8" />
<path d="M1147.9 84.5 L1151.3 87.9 M1151.3 84.5 L1147.9 87.9" fill="none" stroke="#e8e8e8" stroke-width="0.7" />
<line x1="670.50" y1="286.41" x2="670.50" y2="297.06" stroke="#c4c4c4" stroke-width="0.9" />
<line x1="753.00" y1="286.41" x2="753.00" y2="297.06" stroke="#c4c4c4" stroke-width="0.9" />
<line x1="826.00" y1="286.41" x2="826.00" y2="297.06" stroke="#c4c4c4" stroke-width="0.9" />
<line x1="875.00" y1="286.41" x2="875.00" y2="297.06" stroke="#c4c4c4" stroke-width="0.9" />
<line x1="928.00" y1="286.41" x2="928.00" y2="297.06" stroke="#c4c4c4" stroke-width="0.9" />
<line x1="977.00" y1="286.41" x2="977.00" y2="297.06" stroke="#c4c4c4" stroke-width="0.9" />
<line x1="1026.50" y1="286.41" x2="1026.50" y2="297.06" stroke="#c4c4c4" stroke-width="0.9" />
<line x1="1074.00" y1="286.41" x2="1074.00" y2="297.06" stroke="#c4c4c4" stroke-width="0.9" />
<line x1="1078.60" y1="295.36" x2="1078.60" y2="287.16" stroke="#3aa335" stroke-width="1.1" stroke-dasharray="0.8 0.6"/>
<line x1="1078.60" y1="295.36" x2="1078.60" y2="292.86" stroke="#c22a1c" stroke-width="1.1" />
<line x1="1080.55" y1="295.36" x2="1080.55" y2="287.16" stroke="#3aa335" stroke-width="1.1" stroke-dasharray="0.8 0.6"/>
<line x1="1080.55" y1="295.36" x2="1080.55" y2="292.11" stroke="#c22a1c" stroke-width="1.1" />
<line x1="1082.50" y1="295.36" x2="1082.50" y2="287.16" stroke="#3aa335" stroke-width="1.1" stroke-dasharray="0.8 0.6"/>
<line x1="1082.50" y1="295.36" x2="1082.50" y2="291.36" stroke="#c22a1c" stroke-width="1.1" />
<line x1="1084.45" y1="295.36" x2="1084.45" y2="287.16" stroke="#3aa335" stroke-width="1.1" stroke-dasharray="0.8 0.6"/>
<line x1="1084.45" y1="295.36" x2="1084.45" y2="290.61" stroke="#c22a1c" stroke-width="1.1" />
<line x1="1086.40" y1="295.36" x2="1086.40" y2="287.16" stroke="#3aa335" stroke-width="1.1" stroke-dasharray="0.8 0.6"/>
<line x1="1086.40" y1="295.36" x2="1086.40" y2="289.86" stroke="#c22a1c" stroke-width="1.1" />
<line x1="1088.35" y1="295.36" x2="1088.35" y2="287.16" stroke="#c9c9c9" stroke-width="1.1" stroke-dasharray="0.8 0.6"/>
<line x1="1088.35" y1="295.36" x2="1088.35" y2="289.11" stroke="#c22a1c" stroke-width="1.1" />
<line x1="1090.30" y1="295.36" x2="1090.30" y2="287.16" stroke="#c9c9c9" stroke-width="1.1" stroke-dasharray="0.8 0.6"/>
<line x1="1090.30" y1="295.36" x2="1090.30" y2="288.36" stroke="#c22a1c" stroke-width="1.1" />
<line x1="1092.25" y1="295.36" x2="1092.25" y2="287.16" stroke="#c9c9c9" stroke-width="1.1" stroke-dasharray="0.8 0.6"/>
<line x1="1092.25" y1="295.36" x2="1092.25" y2="287.61" stroke="#c22a1c" stroke-width="1.1" />
<line x1="1094.20" y1="295.36" x2="1094.20" y2="287.16" stroke="#c9c9c9" stroke-width="1.1" stroke-dasharray="0.8 0.6"/>
<line x1="1094.20" y1="295.36" x2="1094.20" y2="286.86" stroke="#c22a1c" stroke-width="1.1" />
<line x1="1187.00" y1="298.06" x2="1188.50" y2="296.56" stroke="#b0b0b0" stroke-width="0.9" />
<line x1="1184.40" y1="298.06" x2="1188.50" y2="293.96" stroke="#b0b0b0" stroke-width="0.9" />
<line x1="1181.80" y1="298.06" x2="1188.50" y2="291.36" stroke="#b0b0b0" stroke-width="0.9" />
</svg>
<div id="l3">
<span class="t" style="left:572.20px;top:313.35px;font-size:8.2px;color:#000;transform:translateY(-50%) scaleX(1.0346);text-shadow:0 0 3px rgba(255,255,255,.4),0 0 6px rgba(255,255,255,.25);">20054165 - AlpariNZ-MT5 - Демо-счет - [EURUSD,M30]</span>
<span class="t" style="left:579.10px;top:331.25px;font-size:8.2px;color:#111;transform:translateY(-50%) scaleX(1.0029);-webkit-text-stroke:0.18px currentColor;">Файл</span>
<span class="t" style="left:615.40px;top:331.25px;font-size:8.2px;color:#111;transform:translateY(-50%) scaleX(0.9992);-webkit-text-stroke:0.18px currentColor;">Вид</span>
<span class="t" style="left:645.20px;top:331.25px;font-size:8.2px;color:#111;transform:translateY(-50%) scaleX(0.9791);-webkit-text-stroke:0.18px currentColor;">Вставка</span>
<span class="t" style="left:691.20px;top:331.25px;font-size:8.2px;color:#111;transform:translateY(-50%) scaleX(1.0385);-webkit-text-stroke:0.18px currentColor;">Графики</span>
<span class="t" style="left:741.00px;top:331.25px;font-size:8.2px;color:#111;transform:translateY(-50%) scaleX(0.9912);-webkit-text-stroke:0.18px currentColor;">Сервис</span>
<span class="t" style="left:785.10px;top:331.25px;font-size:8.2px;color:#111;transform:translateY(-50%) scaleX(1.0667);-webkit-text-stroke:0.18px currentColor;">Окно</span>
<span class="t" style="left:821.20px;top:331.25px;font-size:8.2px;color:#111;transform:translateY(-50%) scaleX(1.0210);-webkit-text-stroke:0.18px currentColor;">Справка</span>
<span class="t" style="left:668.20px;top:350.15px;font-size:8.1px;color:#2a2a2a;transform:translateY(-50%) scaleX(1.1131);-webkit-text-stroke:0.3px #2a2a2a;">Авто-торговля</span>
<span class="t" style="left:751.20px;top:350.25px;font-size:8.0px;color:#111;transform:translateY(-50%) scaleX(1.0731);-webkit-text-stroke:0.18px currentColor;">Новый ордер</span>
<span class="t" style="left:1121.40px;top:353.95px;font-size:5.2px;color:#222;font-weight:bold;transform:translateY(-50%) scaleX(1.0000);">E</span>
<span class="t" style="left:1142.60px;top:354.35px;font-size:5.2px;color:#222;font-weight:bold;transform:translateY(-50%) scaleX(1.0000);">F</span>
<span class="t" style="left:1160.40px;top:350.15px;font-size:8.6px;color:#3a3a3a;font-weight:bold;transform:translateY(-50%) scaleX(1.0000);font-family:'Liberation Serif',serif;">T</span>
<span class="t" style="left:561.20px;top:367.35px;font-size:7.6px;color:#6d727a;transform:translateY(-50%) scaleX(1.0501);">Обзор рынка: 18:33:00</span>
<span class="t" style="left:563.60px;top:381.05px;font-size:6.9px;color:#000;transform:translateY(-50%) scaleX(0.8760);">EURUSD</span>
<span class="t" style="left:695.00px;top:439.51px;font-size:6.9px;color:#111;transform:translateY(-50%) scaleX(0.9710);">1.32330</span>
<span class="t" style="left:695.00px;top:471.56px;font-size:6.9px;color:#111;transform:translateY(-50%) scaleX(0.9710);">1.32325</span>
<span class="t" style="left:695.00px;top:503.31px;font-size:6.9px;color:#111;transform:translateY(-50%) scaleX(0.9710);">1.32320</span>
<span class="t" style="left:695.00px;top:535.27px;font-size:6.9px;color:#111;transform:translateY(-50%) scaleX(0.9710);">1.32315</span>
<span class="t" style="left:695.00px;top:567.22px;font-size:6.9px;color:#111;transform:translateY(-50%) scaleX(0.9710);">1.32310</span>
<span class="t" style="left:695.00px;top:598.67px;font-size:6.9px;color:#111;transform:translateY(-50%) scaleX(0.9710);">1.32305</span>
<div style="left:691.20px;top:403.90px;width:29.80px;height:7.80px;background:#1f73e8;"></div>
<span class="t" style="left:695.00px;top:407.35px;font-size:6.9px;color:#fff;transform:translateY(-50%) scaleX(0.9710);">1.32335</span>
<div style="left:691.20px;top:454.90px;width:29.80px;height:7.80px;background:#ff5f5f;"></div>
<span class="t" style="left:695.00px;top:458.35px;font-size:6.9px;color:#fff;transform:translateY(-50%) scaleX(0.9710);">1.32327</span>
<span class="t" style="left:562.20px;top:637.85px;font-size:6.9px;color:#111;transform:translateY(-50%) scaleX(0.9623);">2013.06.10</span>
<span class="t" style="left:607.80px;top:637.85px;font-size:6.9px;color:#111;transform:translateY(-50%) scaleX(0.9507);">18:32</span>
<span class="t" style="left:630.60px;top:637.85px;font-size:6.9px;color:#111;transform:translateY(-50%) scaleX(0.9507);">18:32</span>
<span class="t" style="left:653.40px;top:637.85px;font-size:6.9px;color:#111;transform:translateY(-50%) scaleX(0.9507);">18:32</span>
<span class="t" style="left:676.40px;top:637.85px;font-size:6.9px;color:#111;transform:translateY(-50%) scaleX(0.9840);">18:32:59</span>
<span class="t" style="left:568.60px;top:653.65px;font-size:8.1px;color:#858585;transform:translateY(-50%) scaleX(1.0681);">Символы</span>
<span class="t" style="left:620.00px;top:653.65px;font-size:8.1px;color:#858585;transform:translateY(-50%) scaleX(1.0488);">Детали</span>
<span class="t" style="left:662.20px;top:653.65px;font-size:8.1px;color:#858585;transform:translateY(-50%) scaleX(1.1120);">Торговля</span>
<span class="t" style="left:713.80px;top:653.65px;font-size:8.1px;color:#111;transform:translateY(-50%) scaleX(1.0319);">Ти</span>
<span class="t" style="left:1157.20px;top:376.55px;font-size:6.9px;color:#fff;transform:translateY(-50%) scaleX(0.9309);">1.33910</span>
<span class="t" style="left:1157.20px;top:399.35px;font-size:6.9px;color:#fff;transform:translateY(-50%) scaleX(0.9309);">1.33580</span>
<span class="t" style="left:1157.20px;top:422.25px;font-size:6.9px;color:#fff;transform:translateY(-50%) scaleX(0.9309);">1.33250</span>
<span class="t" style="left:1157.20px;top:445.05px;font-size:6.9px;color:#fff;transform:translateY(-50%) scaleX(0.9309);">1.32920</span>
<span class="t" style="left:1157.20px;top:467.95px;font-size:6.9px;color:#fff;transform:translateY(-50%) scaleX(0.9309);">1.32590</span>
<span class="t" style="left:1157.20px;top:490.85px;font-size:6.9px;color:#fff;transform:translateY(-50%) scaleX(0.9309);">1.32260</span>
<span class="t" style="left:1157.20px;top:513.75px;font-size:6.9px;color:#fff;transform:translateY(-50%) scaleX(0.9309);">1.31930</span>
<span class="t" style="left:1157.20px;top:536.55px;font-size:6.9px;color:#fff;transform:translateY(-50%) scaleX(0.9309);">1.31600</span>
<span class="t" style="left:1157.20px;top:559.45px;font-size:6.9px;color:#fff;transform:translateY(-50%) scaleX(0.9309);">1.31270</span>
<span class="t" style="left:1157.20px;top:582.35px;font-size:6.9px;color:#fff;transform:translateY(-50%) scaleX(0.9309);">1.30940</span>
<span class="t" style="left:1157.20px;top:605.15px;font-size:6.9px;color:#fff;transform:translateY(-50%) scaleX(0.9309);">1.30610</span>
<span class="t" style="left:1157.20px;top:628.05px;font-size:6.9px;color:#fff;transform:translateY(-50%) scaleX(0.9309);">1.30280</span>
<div style="left:1155.30px;top:482.40px;width:27.70px;height:7.90px;background:#a9b9d2;"></div>
<span class="t" style="left:1157.20px;top:485.95px;font-size:6.9px;color:#222;transform:translateY(-50%) scaleX(0.9309);">1.32327</span>
<span class="t" style="left:728.20px;top:657.75px;font-size:6.9px;color:#fff;transform:translateY(-50%) scaleX(0.9331);">10 Jun 2013</span>
<span class="t" style="left:773.80px;top:657.75px;font-size:6.9px;color:#fff;transform:translateY(-50%) scaleX(0.9811);">10 Jun 11:00</span>
<span class="t" style="left:819.50px;top:657.75px;font-size:6.9px;color:#fff;transform:translateY(-50%) scaleX(0.9684);">10 Jun 12:00</span>
<span class="t" style="left:865.20px;top:657.75px;font-size:6.9px;color:#fff;transform:translateY(-50%) scaleX(0.9684);">10 Jun 13:00</span>
<span class="t" style="left:910.90px;top:657.75px;font-size:6.9px;color:#fff;transform:translateY(-50%) scaleX(0.9684);">10 Jun 14:00</span>
<span class="t" style="left:956.60px;top:657.75px;font-size:6.9px;color:#fff;transform:translateY(-50%) scaleX(0.9684);">10 Jun 15:00</span>
<span class="t" style="left:1002.30px;top:657.75px;font-size:6.9px;color:#fff;transform:translateY(-50%) scaleX(0.9684);">10 Jun 16:00</span>
<span class="t" style="left:1048.10px;top:657.75px;font-size:6.9px;color:#fff;transform:translateY(-50%) scaleX(0.9684);">10 Jun 17:00</span>
<span class="t" style="left:1093.80px;top:657.75px;font-size:6.9px;color:#fff;transform:translateY(-50%) scaleX(0.9684);">10 Jun 18:00</span>
<span class="t" style="left:1103.40px;top:371.55px;font-size:7.4px;color:#fff;transform:translateY(-50%) scaleX(0.9063);">TEST TICK</span>
<span class="t" style="left:733.80px;top:407.85px;font-size:6.9px;color:#fff;transform:translateY(-50%) scaleX(0.9913);">Номер тика=859</span>
<span class="t" style="left:731.60px;top:415.55px;font-size:6.9px;color:#fff;transform:translateY(-50%) scaleX(0.9800);">PriceBID=1.32327</span>
<span class="t" style="left:731.60px;top:423.55px;font-size:6.9px;color:#fff;transform:translateY(-50%) scaleX(0.9654);">PriceASK=1.32335</span>
<span class="t" style="left:731.60px;top:431.55px;font-size:6.9px;color:#fff;transform:translateY(-50%) scaleX(0.9768);">TimeTickinms=179417</span>
<span class="t" style="left:558.60px;top:672.95px;font-size:7.9px;color:#111;transform:translateY(-50%) scaleX(1.0512);-webkit-text-stroke:0.18px currentColor;">Для вызова справки нажмите F1</span>
<span class="t" style="left:714.60px;top:672.95px;font-size:7.9px;color:#111;transform:translateY(-50%) scaleX(1.0314);-webkit-text-stroke:0.18px currentColor;">Default</span>
<span class="t" style="left:1137.60px;top:672.95px;font-size:7.9px;color:#111;transform:translateY(-50%) scaleX(1.0334);-webkit-text-stroke:0.18px currentColor;">47.9 / 0.0 Mb</span>
<span class="t" style="left:15.20px;top:309.95px;font-size:8.2px;color:#000;transform:translateY(-50%) scaleX(1.0395);text-shadow:0 0 3px rgba(255,255,255,.4),0 0 6px rgba(255,255,255,.25);">20054164 - AlpariNZ-MT5 - Демо-счет - [EURUSD,M30]</span>
<span class="t" style="left:22.70px;top:327.75px;font-size:8.2px;color:#111;transform:translateY(-50%) scaleX(1.0029);-webkit-text-stroke:0.18px currentColor;">Файл</span>
<span class="t" style="left:59.00px;top:327.75px;font-size:8.2px;color:#111;transform:translateY(-50%) scaleX(0.9992);-webkit-text-stroke:0.18px currentColor;">Вид</span>
<span class="t" style="left:88.80px;top:327.75px;font-size:8.2px;color:#111;transform:translateY(-50%) scaleX(0.9791);-webkit-text-stroke:0.18px currentColor;">Вставка</span>
<span class="t" style="left:134.80px;top:327.75px;font-size:8.2px;color:#111;transform:translateY(-50%) scaleX(1.0385);-webkit-text-stroke:0.18px currentColor;">Графики</span>
<span class="t" style="left:184.60px;top:327.75px;font-size:8.2px;color:#111;transform:translateY(-50%) scaleX(0.9912);-webkit-text-stroke:0.18px currentColor;">Сервис</span>
<span class="t" style="left:228.70px;top:327.75px;font-size:8.2px;color:#111;transform:translateY(-50%) scaleX(1.0667);-webkit-text-stroke:0.18px currentColor;">Окно</span>
<span class="t" style="left:264.80px;top:327.75px;font-size:8.2px;color:#111;transform:translateY(-50%) scaleX(1.0210);-webkit-text-stroke:0.18px currentColor;">Справка</span>
<span class="t" style="left:111.20px;top:346.65px;font-size:8.1px;color:#2a2a2a;transform:translateY(-50%) scaleX(1.1131);-webkit-text-stroke:0.3px #2a2a2a;">Авто-торговля</span>
<span class="t" style="left:194.20px;top:346.75px;font-size:8.0px;color:#111;transform:translateY(-50%) scaleX(1.0731);-webkit-text-stroke:0.18px currentColor;">Новый ордер</span>
<span class="t" style="left:4.20px;top:363.85px;font-size:7.6px;color:#6d727a;transform:translateY(-50%) scaleX(1.0501);">Обзор рынка: 18:33:00</span>
<span class="t" style="left:6.60px;top:377.55px;font-size:6.9px;color:#000;transform:translateY(-50%) scaleX(0.8760);">EURUSD</span>
<span class="t" style="left:138.60px;top:434.45px;font-size:6.9px;color:#111;transform:translateY(-50%) scaleX(0.9710);">1.32330</span>
<span class="t" style="left:138.60px;top:466.25px;font-size:6.9px;color:#111;transform:translateY(-50%) scaleX(0.9710);">1.32325</span>
<span class="t" style="left:138.60px;top:497.75px;font-size:6.9px;color:#111;transform:translateY(-50%) scaleX(0.9710);">1.32320</span>
<span class="t" style="left:138.60px;top:529.45px;font-size:6.9px;color:#111;transform:translateY(-50%) scaleX(0.9710);">1.32315</span>
<span class="t" style="left:138.60px;top:561.15px;font-size:6.9px;color:#111;transform:translateY(-50%) scaleX(0.9710);">1.32310</span>
<span class="t" style="left:138.60px;top:592.35px;font-size:6.9px;color:#111;transform:translateY(-50%) scaleX(0.9710);">1.32305</span>
<div style="left:134.80px;top:399.10px;width:29.80px;height:7.80px;background:#1f73e8;"></div>
<span class="t" style="left:138.60px;top:402.55px;font-size:6.9px;color:#fff;transform:translateY(-50%) scaleX(0.9710);">1.32335</span>
<div style="left:134.80px;top:449.70px;width:29.80px;height:7.80px;background:#ff5f5f;"></div>
<span class="t" style="left:138.60px;top:453.15px;font-size:6.9px;color:#fff;transform:translateY(-50%) scaleX(0.9710);">1.32327</span>
<span class="t" style="left:5.20px;top:629.85px;font-size:6.9px;color:#111;transform:translateY(-50%) scaleX(0.9623);">2013.06.10</span>
<span class="t" style="left:50.80px;top:629.85px;font-size:6.9px;color:#111;transform:translateY(-50%) scaleX(0.9507);">18:32</span>
<span class="t" style="left:73.60px;top:629.85px;font-size:6.9px;color:#111;transform:translateY(-50%) scaleX(0.9507);">18:32</span>
<span class="t" style="left:96.40px;top:629.85px;font-size:6.9px;color:#111;transform:translateY(-50%) scaleX(0.9507);">18:32</span>
<span class="t" style="left:119.40px;top:629.85px;font-size:6.9px;color:#111;transform:translateY(-50%) scaleX(0.9840);">18:32:59</span>
<span class="t" style="left:11.60px;top:645.65px;font-size:8.1px;color:#858585;transform:translateY(-50%) scaleX(1.0681);">Символы</span>
<span class="t" style="left:63.00px;top:645.65px;font-size:8.1px;color:#858585;transform:translateY(-50%) scaleX(1.0488);">Детали</span>
<span class="t" style="left:105.20px;top:645.65px;font-size:8.1px;color:#858585;transform:translateY(-50%) scaleX(1.1120);">Торговля</span>
<span class="t" style="left:156.80px;top:645.65px;font-size:8.1px;color:#111;transform:translateY(-50%) scaleX(1.0319);">Ти</span>
<span class="t" style="left:511.60px;top:369.95px;font-size:6.9px;color:#fff;transform:translateY(-50%) scaleX(0.9229);">1.33380</span>
<span class="t" style="left:511.60px;top:392.85px;font-size:6.9px;color:#fff;transform:translateY(-50%) scaleX(0.9229);">1.33150</span>
<span class="t" style="left:511.60px;top:415.75px;font-size:6.9px;color:#fff;transform:translateY(-50%) scaleX(0.9229);">1.32920</span>
<span class="t" style="left:511.60px;top:438.55px;font-size:6.9px;color:#fff;transform:translateY(-50%) scaleX(0.9229);">1.32690</span>
<span class="t" style="left:511.60px;top:461.35px;font-size:6.9px;color:#fff;transform:translateY(-50%) scaleX(0.9229);">1.32460</span>
<span class="t" style="left:511.60px;top:484.25px;font-size:6.9px;color:#fff;transform:translateY(-50%) scaleX(0.9229);">1.32230</span>
<span class="t" style="left:511.60px;top:507.05px;font-size:6.9px;color:#fff;transform:translateY(-50%) scaleX(0.9229);">1.32000</span>
<span class="t" style="left:511.60px;top:529.95px;font-size:6.9px;color:#fff;transform:translateY(-50%) scaleX(0.9229);">1.31770</span>
<span class="t" style="left:511.60px;top:552.85px;font-size:6.9px;color:#fff;transform:translateY(-50%) scaleX(0.9229);">1.31540</span>
<span class="t" style="left:511.60px;top:575.75px;font-size:6.9px;color:#fff;transform:translateY(-50%) scaleX(0.9229);">1.31310</span>
<span class="t" style="left:511.60px;top:598.55px;font-size:6.9px;color:#fff;transform:translateY(-50%) scaleX(0.9229);">1.31080</span>
<span class="t" style="left:511.60px;top:621.45px;font-size:6.9px;color:#fff;transform:translateY(-50%) scaleX(0.9229);">1.30850</span>
<div style="left:509.70px;top:471.10px;width:27.50px;height:7.90px;background:#a9b9d2;"></div>
<span class="t" style="left:511.60px;top:474.65px;font-size:6.9px;color:#222;transform:translateY(-50%) scaleX(0.9229);">1.32327</span>
<span class="t" style="left:171.80px;top:650.15px;font-size:6.9px;color:#fff;transform:translateY(-50%) scaleX(0.9331);">10 Jun 2013</span>
<span class="t" style="left:217.40px;top:650.15px;font-size:6.9px;color:#fff;transform:translateY(-50%) scaleX(0.9684);">10 Jun 13:00</span>
<span class="t" style="left:263.10px;top:650.15px;font-size:6.9px;color:#fff;transform:translateY(-50%) scaleX(0.9684);">10 Jun 14:00</span>
<span class="t" style="left:308.80px;top:650.15px;font-size:6.9px;color:#fff;transform:translateY(-50%) scaleX(0.9684);">10 Jun 15:00</span>
<span class="t" style="left:354.50px;top:650.15px;font-size:6.9px;color:#fff;transform:translateY(-50%) scaleX(0.9684);">10 Jun 16:00</span>
<span class="t" style="left:400.20px;top:650.15px;font-size:6.9px;color:#fff;transform:translateY(-50%) scaleX(0.9684);">10 Jun 17:00</span>
<span class="t" style="left:446.00px;top:650.15px;font-size:6.9px;color:#fff;transform:translateY(-50%) scaleX(0.9684);">10 Jun 18:00</span>
<span class="t" style="left:458.00px;top:367.95px;font-size:7.4px;color:#fff;transform:translateY(-50%) scaleX(0.9329);">TEST TICK</span>
<span class="t" style="left:178.00px;top:404.55px;font-size:6.9px;color:#fff;transform:translateY(-50%) scaleX(0.9761);">Номер тика=860</span>
<span class="t" style="left:175.20px;top:412.25px;font-size:6.9px;color:#fff;transform:translateY(-50%) scaleX(0.9764);">PriceBID=1.32327</span>
<span class="t" style="left:175.20px;top:420.15px;font-size:6.9px;color:#fff;transform:translateY(-50%) scaleX(0.9722);">PriceASK=1.32335</span>
<span class="t" style="left:175.20px;top:428.15px;font-size:6.9px;color:#fff;transform:translateY(-50%) scaleX(0.9725);">TimeTickinms=179417</span>
<span class="t" style="left:1.20px;top:666.95px;font-size:7.9px;color:#111;transform:translateY(-50%) scaleX(1.0545);-webkit-text-stroke:0.18px currentColor;">Для вызова справки нажмите F1</span>
<span class="t" style="left:157.20px;top:666.95px;font-size:7.9px;color:#111;transform:translateY(-50%) scaleX(1.0473);-webkit-text-stroke:0.18px currentColor;">Default</span>
<span class="t" style="left:21.00px;top:12.45px;font-size:8.2px;color:#000;transform:translateY(-50%) scaleX(1.0356);text-shadow:0 0 3px rgba(255,255,255,.4),0 0 6px rgba(255,255,255,.25);">6400491: Alpari Limited MT4 - Демо Счет - [EURUSD,M30]</span>
<span class="t" style="left:26.30px;top:29.55px;font-size:7.6px;color:#a2a2a2;transform:translateY(-50%) scaleX(1.0711);">Файл</span>
<span class="t" style="left:59.20px;top:29.55px;font-size:7.6px;color:#a2a2a2;transform:translateY(-50%) scaleX(0.9818);">Вид</span>
<span class="t" style="left:85.80px;top:29.55px;font-size:7.6px;color:#a2a2a2;transform:translateY(-50%) scaleX(1.0448);">Вставка</span>
<span class="t" style="left:128.50px;top:29.55px;font-size:7.6px;color:#a2a2a2;transform:translateY(-50%) scaleX(1.0435);">Графики</span>
<span class="t" style="left:172.30px;top:29.55px;font-size:7.6px;color:#a2a2a2;transform:translateY(-50%) scaleX(1.0378);">Сервис</span>
<span class="t" style="left:212.00px;top:29.55px;font-size:7.6px;color:#a2a2a2;transform:translateY(-50%) scaleX(1.0478);">Окно</span>
<span class="t" style="left:243.00px;top:29.55px;font-size:7.6px;color:#a2a2a2;transform:translateY(-50%) scaleX(1.0404);">Справка</span>
<span class="t" style="left:192.20px;top:47.85px;font-size:7.7px;color:#2a2a2a;transform:translateY(-50%) scaleX(1.0718);-webkit-text-stroke:0.28px #2a2a2a;">Новый Ордер</span>
<span class="t" style="left:288.20px;top:47.85px;font-size:7.7px;color:#2a2a2a;transform:translateY(-50%) scaleX(1.1181);-webkit-text-stroke:0.28px #2a2a2a;">Советники</span>
<span class="t" style="left:497.40px;top:45.45px;font-size:5.5px;color:#555;transform:translateY(-50%) scaleX(1.0000);font-style:italic;">f</span>
<span class="t" style="left:127.60px;top:70.45px;font-size:5.0px;color:#222;font-weight:bold;transform:translateY(-50%) scaleX(1.0000);">E</span>
<span class="t" style="left:147.80px;top:70.75px;font-size:5.0px;color:#222;font-weight:bold;transform:translateY(-50%) scaleX(1.0000);">F</span>
<span class="t" style="left:162.40px;top:66.65px;font-size:8.4px;color:#5e5e5e;font-weight:bold;transform:translateY(-50%) scaleX(1.0000);">A</span>
<span class="t" style="left:182.40px;top:66.95px;font-size:8.6px;color:#4a4a4a;transform:translateY(-50%) scaleX(1.0000);font-family:'Liberation Serif',serif;">T</span>
<span class="t" style="left:233.60px;top:66.75px;font-size:6.6px;color:#3c3c3c;transform:translateY(-50%) scaleX(0.9376);">M1</span>
<span class="t" style="left:252.60px;top:66.75px;font-size:6.6px;color:#3c3c3c;transform:translateY(-50%) scaleX(0.9595);">M5</span>
<span class="t" style="left:271.60px;top:66.75px;font-size:6.6px;color:#3c3c3c;transform:translateY(-50%) scaleX(1.0134);">M15</span>
<span class="t" style="left:291.50px;top:66.75px;font-size:6.6px;color:#3c3c3c;transform:translateY(-50%) scaleX(1.0758);">M30</span>
<span class="t" style="left:313.60px;top:66.75px;font-size:6.6px;color:#3c3c3c;transform:translateY(-50%) scaleX(1.0193);">H1</span>
<span class="t" style="left:333.00px;top:66.75px;font-size:6.6px;color:#3c3c3c;transform:translateY(-50%) scaleX(1.0667);">H4</span>
<span class="t" style="left:353.80px;top:66.75px;font-size:6.6px;color:#3c3c3c;transform:translateY(-50%) scaleX(1.0430);">D1</span>
<span class="t" style="left:373.00px;top:66.75px;font-size:6.6px;color:#3c3c3c;transform:translateY(-50%) scaleX(1.0717);">W1</span>
<span class="t" style="left:392.40px;top:66.75px;font-size:6.6px;color:#3c3c3c;transform:translateY(-50%) scaleX(1.0326);">MN</span>
<span class="t" style="left:9.20px;top:82.25px;font-size:7.5px;color:#6a6f78;transform:translateY(-50%) scaleX(1.0645);">Обзор рынка: 18:32:59</span>
<span class="t" style="left:12.60px;top:96.25px;font-size:6.9px;color:#000;transform:translateY(-50%) scaleX(0.8760);">EURUSD</span>
<span class="t" style="left:109.60px;top:102.95px;font-size:6.9px;color:#111;transform:translateY(-50%) scaleX(0.9470);">1.32357</span>
<span class="t" style="left:109.60px;top:126.05px;font-size:6.9px;color:#111;transform:translateY(-50%) scaleX(0.9470);">1.32346</span>
<span class="t" style="left:109.60px;top:148.85px;font-size:6.9px;color:#111;transform:translateY(-50%) scaleX(0.9470);">1.32335</span>
<span class="t" style="left:109.60px;top:171.75px;font-size:6.9px;color:#111;transform:translateY(-50%) scaleX(0.9470);">1.32324</span>
<span class="t" style="left:109.60px;top:194.45px;font-size:6.9px;color:#111;transform:translateY(-50%) scaleX(0.9470);">1.32313</span>
<span class="t" style="left:109.60px;top:217.25px;font-size:6.9px;color:#111;transform:translateY(-50%) scaleX(0.9470);">1.32302</span>
<span class="t" style="left:109.60px;top:239.95px;font-size:6.9px;color:#111;transform:translateY(-50%) scaleX(0.9470);">1.32292</span>
<span class="t" style="left:109.60px;top:260.75px;font-size:6.9px;color:#111;transform:translateY(-50%) scaleX(0.9470);">1.32281</span>
<div style="left:106.10px;top:161.40px;width:28.90px;height:7.60px;background:#ff5a5a;"></div>
<span class="t" style="left:109.60px;top:164.75px;font-size:6.9px;color:#fff;transform:translateY(-50%) scaleX(0.9470);">1.32328</span>
<span class="t" style="left:16.50px;top:272.05px;font-size:7.6px;color:#8a8a8a;transform:translateY(-50%) scaleX(0.9895);">Символы</span>
<span class="t" style="left:61.00px;top:271.85px;font-size:7.6px;color:#111;transform:translateY(-50%) scaleX(1.0602);">Тиковый график</span>
<span class="t" style="left:519.20px;top:101.75px;font-size:6.9px;color:#fff;transform:translateY(-50%) scaleX(0.9389);">1.33550</span>
<span class="t" style="left:519.20px;top:125.15px;font-size:6.9px;color:#fff;transform:translateY(-50%) scaleX(0.9389);">1.33070</span>
<span class="t" style="left:519.20px;top:148.65px;font-size:6.9px;color:#fff;transform:translateY(-50%) scaleX(0.9389);">1.32590</span>
<span class="t" style="left:519.20px;top:172.15px;font-size:6.9px;color:#fff;transform:translateY(-50%) scaleX(0.9389);">1.32120</span>
<span class="t" style="left:519.20px;top:195.65px;font-size:6.9px;color:#fff;transform:translateY(-50%) scaleX(0.9389);">1.31640</span>
<span class="t" style="left:519.20px;top:219.15px;font-size:6.9px;color:#fff;transform:translateY(-50%) scaleX(0.9588);">1.31160</span>
<span class="t" style="left:519.20px;top:242.65px;font-size:6.9px;color:#fff;transform:translateY(-50%) scaleX(0.9389);">1.30680</span>
<span class="t" style="left:519.20px;top:266.05px;font-size:6.9px;color:#fff;transform:translateY(-50%) scaleX(0.9389);">1.30200</span>
<div style="left:516.00px;top:158.70px;width:29.20px;height:7.90px;background:#fff;"></div>
<span class="t" style="left:519.20px;top:162.25px;font-size:6.9px;color:#000;transform:translateY(-50%) scaleX(0.9389);">1.32328</span>
<span class="t" style="left:142.20px;top:275.95px;font-size:6.9px;color:#fff;transform:translateY(-50%) scaleX(0.9331);">10 Jun 2013</span>
<span class="t" style="left:188.00px;top:275.95px;font-size:6.9px;color:#fff;transform:translateY(-50%) scaleX(0.9684);">10 Jun 12:30</span>
<span class="t" style="left:233.60px;top:275.95px;font-size:6.9px;color:#fff;transform:translateY(-50%) scaleX(0.9684);">10 Jun 13:30</span>
<span class="t" style="left:279.20px;top:275.95px;font-size:6.9px;color:#fff;transform:translateY(-50%) scaleX(0.9684);">10 Jun 14:30</span>
<span class="t" style="left:324.80px;top:275.95px;font-size:6.9px;color:#fff;transform:translateY(-50%) scaleX(0.9684);">10 Jun 15:30</span>
<span class="t" style="left:370.40px;top:275.95px;font-size:6.9px;color:#fff;transform:translateY(-50%) scaleX(0.9684);">10 Jun 16:30</span>
<span class="t" style="left:416.00px;top:275.95px;font-size:6.9px;color:#fff;transform:translateY(-50%) scaleX(0.9684);">10 Jun 17:30</span>
<span class="t" style="left:461.60px;top:275.95px;font-size:6.9px;color:#fff;transform:translateY(-50%) scaleX(0.9684);">10 Jun 18:30</span>
<span class="t" style="left:153.80px;top:84.45px;font-size:6.9px;color:#fff;transform:translateY(-50%) scaleX(0.9601);">EURUSD,M30&nbsp; 1.32281 1.32352 1.32252 1.32328</span>
<span class="t" style="left:466.20px;top:85.05px;font-size:7.2px;color:#fff;transform:translateY(-50%) scaleX(0.9648);">TEST TICK</span>
<span class="t" style="left:148.40px;top:128.25px;font-size:6.9px;color:#fff;transform:translateY(-50%) scaleX(0.9837);">Номер тика=266</span>
<span class="t" style="left:146.20px;top:136.45px;font-size:6.9px;color:#fff;transform:translateY(-50%) scaleX(0.9641);">PriceBID=1.32328000</span>
<span class="t" style="left:146.20px;top:144.85px;font-size:6.9px;color:#fff;transform:translateY(-50%) scaleX(0.9611);">PriceASK=1.32335000</span>
<span class="t" style="left:146.20px;top:153.15px;font-size:6.9px;color:#fff;transform:translateY(-50%) scaleX(0.9739);">TimeTickinms=179386</span>
<span class="t" style="left:8.20px;top:290.95px;font-size:7.6px;color:#111;transform:translateY(-50%) scaleX(0.8931);-webkit-text-stroke:0.18px currentColor;">Для с</span>
<span class="t" style="left:32.60px;top:290.95px;font-size:7.6px;color:#111;transform:translateY(-50%) scaleX(1.0597);-webkit-text-stroke:0.18px currentColor;">Default</span>
<span class="t" style="left:475.60px;top:290.95px;font-size:7.6px;color:#111;transform:translateY(-50%) scaleX(1.0792);-webkit-text-stroke:0.18px currentColor;">1025/1 kb</span>
<span class="t" style="left:572.00px;top:12.45px;font-size:8.2px;color:#000;transform:translateY(-50%) scaleX(1.0356);text-shadow:0 0 3px rgba(255,255,255,.4),0 0 6px rgba(255,255,255,.25);">6400492: Alpari Limited MT4 - Демо Счет - [EURUSD,M30]</span>
<span class="t" style="left:577.30px;top:29.55px;font-size:7.6px;color:#a2a2a2;transform:translateY(-50%) scaleX(1.0711);">Файл</span>
<span class="t" style="left:610.20px;top:29.55px;font-size:7.6px;color:#a2a2a2;transform:translateY(-50%) scaleX(0.9818);">Вид</span>
<span class="t" style="left:636.80px;top:29.55px;font-size:7.6px;color:#a2a2a2;transform:translateY(-50%) scaleX(1.0448);">Вставка</span>
<span class="t" style="left:679.50px;top:29.55px;font-size:7.6px;color:#a2a2a2;transform:translateY(-50%) scaleX(1.0435);">Графики</span>
<span class="t" style="left:723.30px;top:29.55px;font-size:7.6px;color:#a2a2a2;transform:translateY(-50%) scaleX(1.0378);">Сервис</span>
<span class="t" style="left:763.00px;top:29.55px;font-size:7.6px;color:#a2a2a2;transform:translateY(-50%) scaleX(1.0478);">Окно</span>
<span class="t" style="left:794.00px;top:29.55px;font-size:7.6px;color:#a2a2a2;transform:translateY(-50%) scaleX(1.0404);">Справка</span>
<span class="t" style="left:743.20px;top:47.85px;font-size:7.7px;color:#2a2a2a;transform:translateY(-50%) scaleX(1.0718);-webkit-text-stroke:0.28px #2a2a2a;">Новый Ордер</span>
<span class="t" style="left:839.20px;top:47.85px;font-size:7.7px;color:#2a2a2a;transform:translateY(-50%) scaleX(1.1181);-webkit-text-stroke:0.28px #2a2a2a;">Советники</span>
<span class="t" style="left:1048.40px;top:45.45px;font-size:5.5px;color:#555;transform:translateY(-50%) scaleX(1.0000);font-style:italic;">f</span>
<span class="t" style="left:678.60px;top:70.45px;font-size:5.0px;color:#222;font-weight:bold;transform:translateY(-50%) scaleX(1.0000);">E</span>
<span class="t" style="left:698.80px;top:70.75px;font-size:5.0px;color:#222;font-weight:bold;transform:translateY(-50%) scaleX(1.0000);">F</span>
<span class="t" style="left:713.40px;top:66.65px;font-size:8.4px;color:#5e5e5e;font-weight:bold;transform:translateY(-50%) scaleX(1.0000);">A</span>
<span class="t" style="left:733.40px;top:66.95px;font-size:8.6px;color:#4a4a4a;transform:translateY(-50%) scaleX(1.0000);font-family:'Liberation Serif',serif;">T</span>
<span class="t" style="left:784.60px;top:66.75px;font-size:6.6px;color:#3c3c3c;transform:translateY(-50%) scaleX(0.9376);">M1</span>
<span class="t" style="left:803.60px;top:66.75px;font-size:6.6px;color:#3c3c3c;transform:translateY(-50%) scaleX(0.9595);">M5</span>
<span class="t" style="left:822.60px;top:66.75px;font-size:6.6px;color:#3c3c3c;transform:translateY(-50%) scaleX(1.0134);">M15</span>
<span class="t" style="left:842.50px;top:66.75px;font-size:6.6px;color:#3c3c3c;transform:translateY(-50%) scaleX(1.0758);">M30</span>
<span class="t" style="left:864.60px;top:66.75px;font-size:6.6px;color:#3c3c3c;transform:translateY(-50%) scaleX(1.0193);">H1</span>
<span class="t" style="left:884.00px;top:66.75px;font-size:6.6px;color:#3c3c3c;transform:translateY(-50%) scaleX(1.0667);">H4</span>
<span class="t" style="left:904.80px;top:66.75px;font-size:6.6px;color:#3c3c3c;transform:translateY(-50%) scaleX(1.0430);">D1</span>
<span class="t" style="left:924.00px;top:66.75px;font-size:6.6px;color:#3c3c3c;transform:translateY(-50%) scaleX(1.0717);">W1</span>
<span class="t" style="left:943.40px;top:66.75px;font-size:6.6px;color:#3c3c3c;transform:translateY(-50%) scaleX(1.0326);">MN</span>
<span class="t" style="left:1176.40px;top:46.15px;font-size:7.4px;color:#fff;font-weight:bold;transform:translateY(-50%) scaleX(1.0000);">4</span>
<span class="t" style="left:560.20px;top:82.25px;font-size:7.5px;color:#6a6f78;transform:translateY(-50%) scaleX(1.0645);">Обзор рынка: 18:32:59</span>
<span class="t" style="left:563.60px;top:96.25px;font-size:6.9px;color:#000;transform:translateY(-50%) scaleX(0.8760);">EURUSD</span>
<span class="t" style="left:660.60px;top:104.00px;font-size:6.9px;color:#111;transform:translateY(-50%) scaleX(0.9470);">1.32357</span>
<span class="t" style="left:660.60px;top:127.10px;font-size:6.9px;color:#111;transform:translateY(-50%) scaleX(0.9470);">1.32346</span>
<span class="t" style="left:660.60px;top:149.90px;font-size:6.9px;color:#111;transform:translateY(-50%) scaleX(0.9470);">1.32335</span>
<span class="t" style="left:660.60px;top:172.80px;font-size:6.9px;color:#111;transform:translateY(-50%) scaleX(0.9470);">1.32324</span>
<span class="t" style="left:660.60px;top:195.50px;font-size:6.9px;color:#111;transform:translateY(-50%) scaleX(0.9470);">1.32313</span>
<span class="t" style="left:660.60px;top:218.30px;font-size:6.9px;color:#111;transform:translateY(-50%) scaleX(0.9470);">1.32302</span>
<span class="t" style="left:660.60px;top:241.00px;font-size:6.9px;color:#111;transform:translateY(-50%) scaleX(0.9470);">1.32292</span>
<span class="t" style="left:660.60px;top:261.80px;font-size:6.9px;color:#111;transform:translateY(-50%) scaleX(0.9470);">1.32281</span>
<div style="left:657.10px;top:162.45px;width:28.90px;height:7.60px;background:#ff5a5a;"></div>
<span class="t" style="left:660.60px;top:165.80px;font-size:6.9px;color:#fff;transform:translateY(-50%) scaleX(0.9470);">1.32328</span>
<span class="t" style="left:567.50px;top:272.54px;font-size:7.6px;color:#8a8a8a;transform:translateY(-50%) scaleX(0.9895);">Символы</span>
<span class="t" style="left:612.00px;top:272.34px;font-size:7.6px;color:#111;transform:translateY(-50%) scaleX(1.0602);">Тиковый график</span>
<span class="t" style="left:1162.00px;top:102.95px;font-size:6.9px;color:#fff;transform:translateY(-50%) scaleX(0.9389);">1.33480</span>
<span class="t" style="left:1162.00px;top:126.55px;font-size:6.9px;color:#fff;transform:translateY(-50%) scaleX(0.9389);">1.33010</span>
<span class="t" style="left:1162.00px;top:150.05px;font-size:6.9px;color:#fff;transform:translateY(-50%) scaleX(0.9389);">1.32550</span>
<span class="t" style="left:1162.00px;top:173.55px;font-size:6.9px;color:#fff;transform:translateY(-50%) scaleX(0.9389);">1.32080</span>
<span class="t" style="left:1162.00px;top:197.15px;font-size:6.9px;color:#fff;transform:translateY(-50%) scaleX(0.9389);">1.31610</span>
<span class="t" style="left:1162.00px;top:220.75px;font-size:6.9px;color:#fff;transform:translateY(-50%) scaleX(0.9588);">1.31150</span>
<span class="t" style="left:1162.00px;top:244.35px;font-size:6.9px;color:#fff;transform:translateY(-50%) scaleX(0.9389);">1.30680</span>
<span class="t" style="left:1162.00px;top:267.75px;font-size:6.9px;color:#fff;transform:translateY(-50%) scaleX(0.9389);">1.30210</span>
<div style="left:1158.80px;top:158.30px;width:29.20px;height:7.90px;background:#fff;"></div>
<span class="t" style="left:1162.00px;top:161.85px;font-size:6.9px;color:#000;transform:translateY(-50%) scaleX(0.9389);">1.32328</span>
<span class="t" style="left:693.20px;top:277.15px;font-size:6.9px;color:#fff;transform:translateY(-50%) scaleX(0.9331);">10 Jun 2013</span>
<span class="t" style="left:738.80px;top:277.15px;font-size:6.9px;color:#fff;transform:translateY(-50%) scaleX(0.9684);">10 Jun 10:30</span>
<span class="t" style="left:784.40px;top:277.15px;font-size:6.9px;color:#fff;transform:translateY(-50%) scaleX(0.9811);">10 Jun 11:30</span>
<span class="t" style="left:830.10px;top:277.15px;font-size:6.9px;color:#fff;transform:translateY(-50%) scaleX(0.9684);">10 Jun 12:30</span>
<span class="t" style="left:875.80px;top:277.15px;font-size:6.9px;color:#fff;transform:translateY(-50%) scaleX(0.9684);">10 Jun 13:30</span>
<span class="t" style="left:921.50px;top:277.15px;font-size:6.9px;color:#fff;transform:translateY(-50%) scaleX(0.9684);">10 Jun 14:30</span>
<span class="t" style="left:967.20px;top:277.15px;font-size:6.9px;color:#fff;transform:translateY(-50%) scaleX(0.9684);">10 Jun 15:30</span>
<span class="t" style="left:1012.80px;top:277.15px;font-size:6.9px;color:#fff;transform:translateY(-50%) scaleX(0.9684);">10 Jun 16:30</span>
<span class="t" style="left:1058.50px;top:277.15px;font-size:6.9px;color:#fff;transform:translateY(-50%) scaleX(0.9684);">10 Jun 17:30</span>
<span class="t" style="left:1104.20px;top:277.15px;font-size:6.9px;color:#fff;transform:translateY(-50%) scaleX(0.9684);">10 Jun 18:30</span>
<span class="t" style="left:704.60px;top:85.05px;font-size:6.9px;color:#fff;transform:translateY(-50%) scaleX(0.9582);">EURUSD,M30&nbsp; 1.32281 1.32352 1.32252 1.32328</span>
<span class="t" style="left:1108.60px;top:85.75px;font-size:7.2px;color:#fff;transform:translateY(-50%) scaleX(0.9648);">TEST TICK</span>
<span class="t" style="left:699.40px;top:128.45px;font-size:6.9px;color:#fff;transform:translateY(-50%) scaleX(0.9761);">Номер тика=267</span>
<span class="t" style="left:696.70px;top:137.15px;font-size:6.9px;color:#fff;transform:translateY(-50%) scaleX(0.9686);">PriceBID=1.32328000</span>
<span class="t" style="left:696.70px;top:145.55px;font-size:6.9px;color:#fff;transform:translateY(-50%) scaleX(0.9582);">PriceASK=1.32335000</span>
<span class="t" style="left:696.70px;top:154.05px;font-size:6.9px;color:#fff;transform:translateY(-50%) scaleX(0.9710);">TimeTickinms=179339</span>
<span class="t" style="left:558.20px;top:292.04px;font-size:7.6px;color:#111;transform:translateY(-50%) scaleX(1.0778);-webkit-text-stroke:0.18px currentColor;">Для справки, нажмите F1</span>
<span class="t" style="left:675.60px;top:292.04px;font-size:7.6px;color:#111;transform:translateY(-50%) scaleX(1.0805);-webkit-text-stroke:0.18px currentColor;">Default</span>
<span class="t" style="left:1120.60px;top:292.04px;font-size:7.6px;color:#111;transform:translateY(-50%) scaleX(1.0638);-webkit-text-stroke:0.18px currentColor;">995/1 kb</span>
</div>
<svg class="ov" id="l4" viewBox="0 0 1200 676" width="1200" height="676">
<line x1="218.50" y1="130.21" x2="683.30" y2="130.59" stroke="#9b62c4" stroke-width="2.3" />
<path d="M209.0 130.2 L219.5 135.6 L219.5 124.8 Z" fill="#9b62c4" stroke="none" stroke-width="1" />
<path d="M692.8 130.6 L682.3 136.0 L682.3 125.2 Z" fill="#9b62c4" stroke="none" stroke-width="1" />
<line x1="231.50" y1="153.43" x2="680.90" y2="154.67" stroke="#9b62c4" stroke-width="2.3" />
<path d="M222.0 153.4 L232.5 158.8 L232.5 148.0 Z" fill="#9b62c4" stroke="none" stroke-width="1" />
<path d="M690.4 154.7 L679.9 160.1 L679.9 149.3 Z" fill="#9b62c4" stroke="none" stroke-width="1" />
<line x1="248.10" y1="403.69" x2="718.90" y2="408.31" stroke="#9b62c4" stroke-width="2.3" />
<path d="M238.6 403.6 L249.0 409.1 L249.2 398.3 Z" fill="#9b62c4" stroke="none" stroke-width="1" />
<path d="M728.4 408.4 L717.8 413.7 L718.0 402.9 Z" fill="#9b62c4" stroke="none" stroke-width="1" />
<line x1="260.50" y1="429.03" x2="718.90" y2="430.67" stroke="#9b62c4" stroke-width="2.3" />
<path d="M251.0 429.0 L261.5 434.4 L261.5 423.6 Z" fill="#9b62c4" stroke="none" stroke-width="1" />
<path d="M728.4 430.7 L717.9 436.1 L717.9 425.3 Z" fill="#9b62c4" stroke="none" stroke-width="1" />
<circle cx="1106.8" cy="325.1" r="21.8" fill="#f4f000" style="mix-blend-mode:multiply"/>
<circle cx="1106.8" cy="325.1" r="21.8" fill="#e8e000" opacity="0.09"/>
<path d="M1107.40 325.00 L1107.40 337.48 L1110.26 334.88 L1112.34 339.30 L1114.16 338.52 L1112.21 334.10 L1115.98 333.84 Z" fill="#fff" stroke="#222" stroke-width="0.8" stroke-linejoin="round"/>
</svg>
</body></html>
